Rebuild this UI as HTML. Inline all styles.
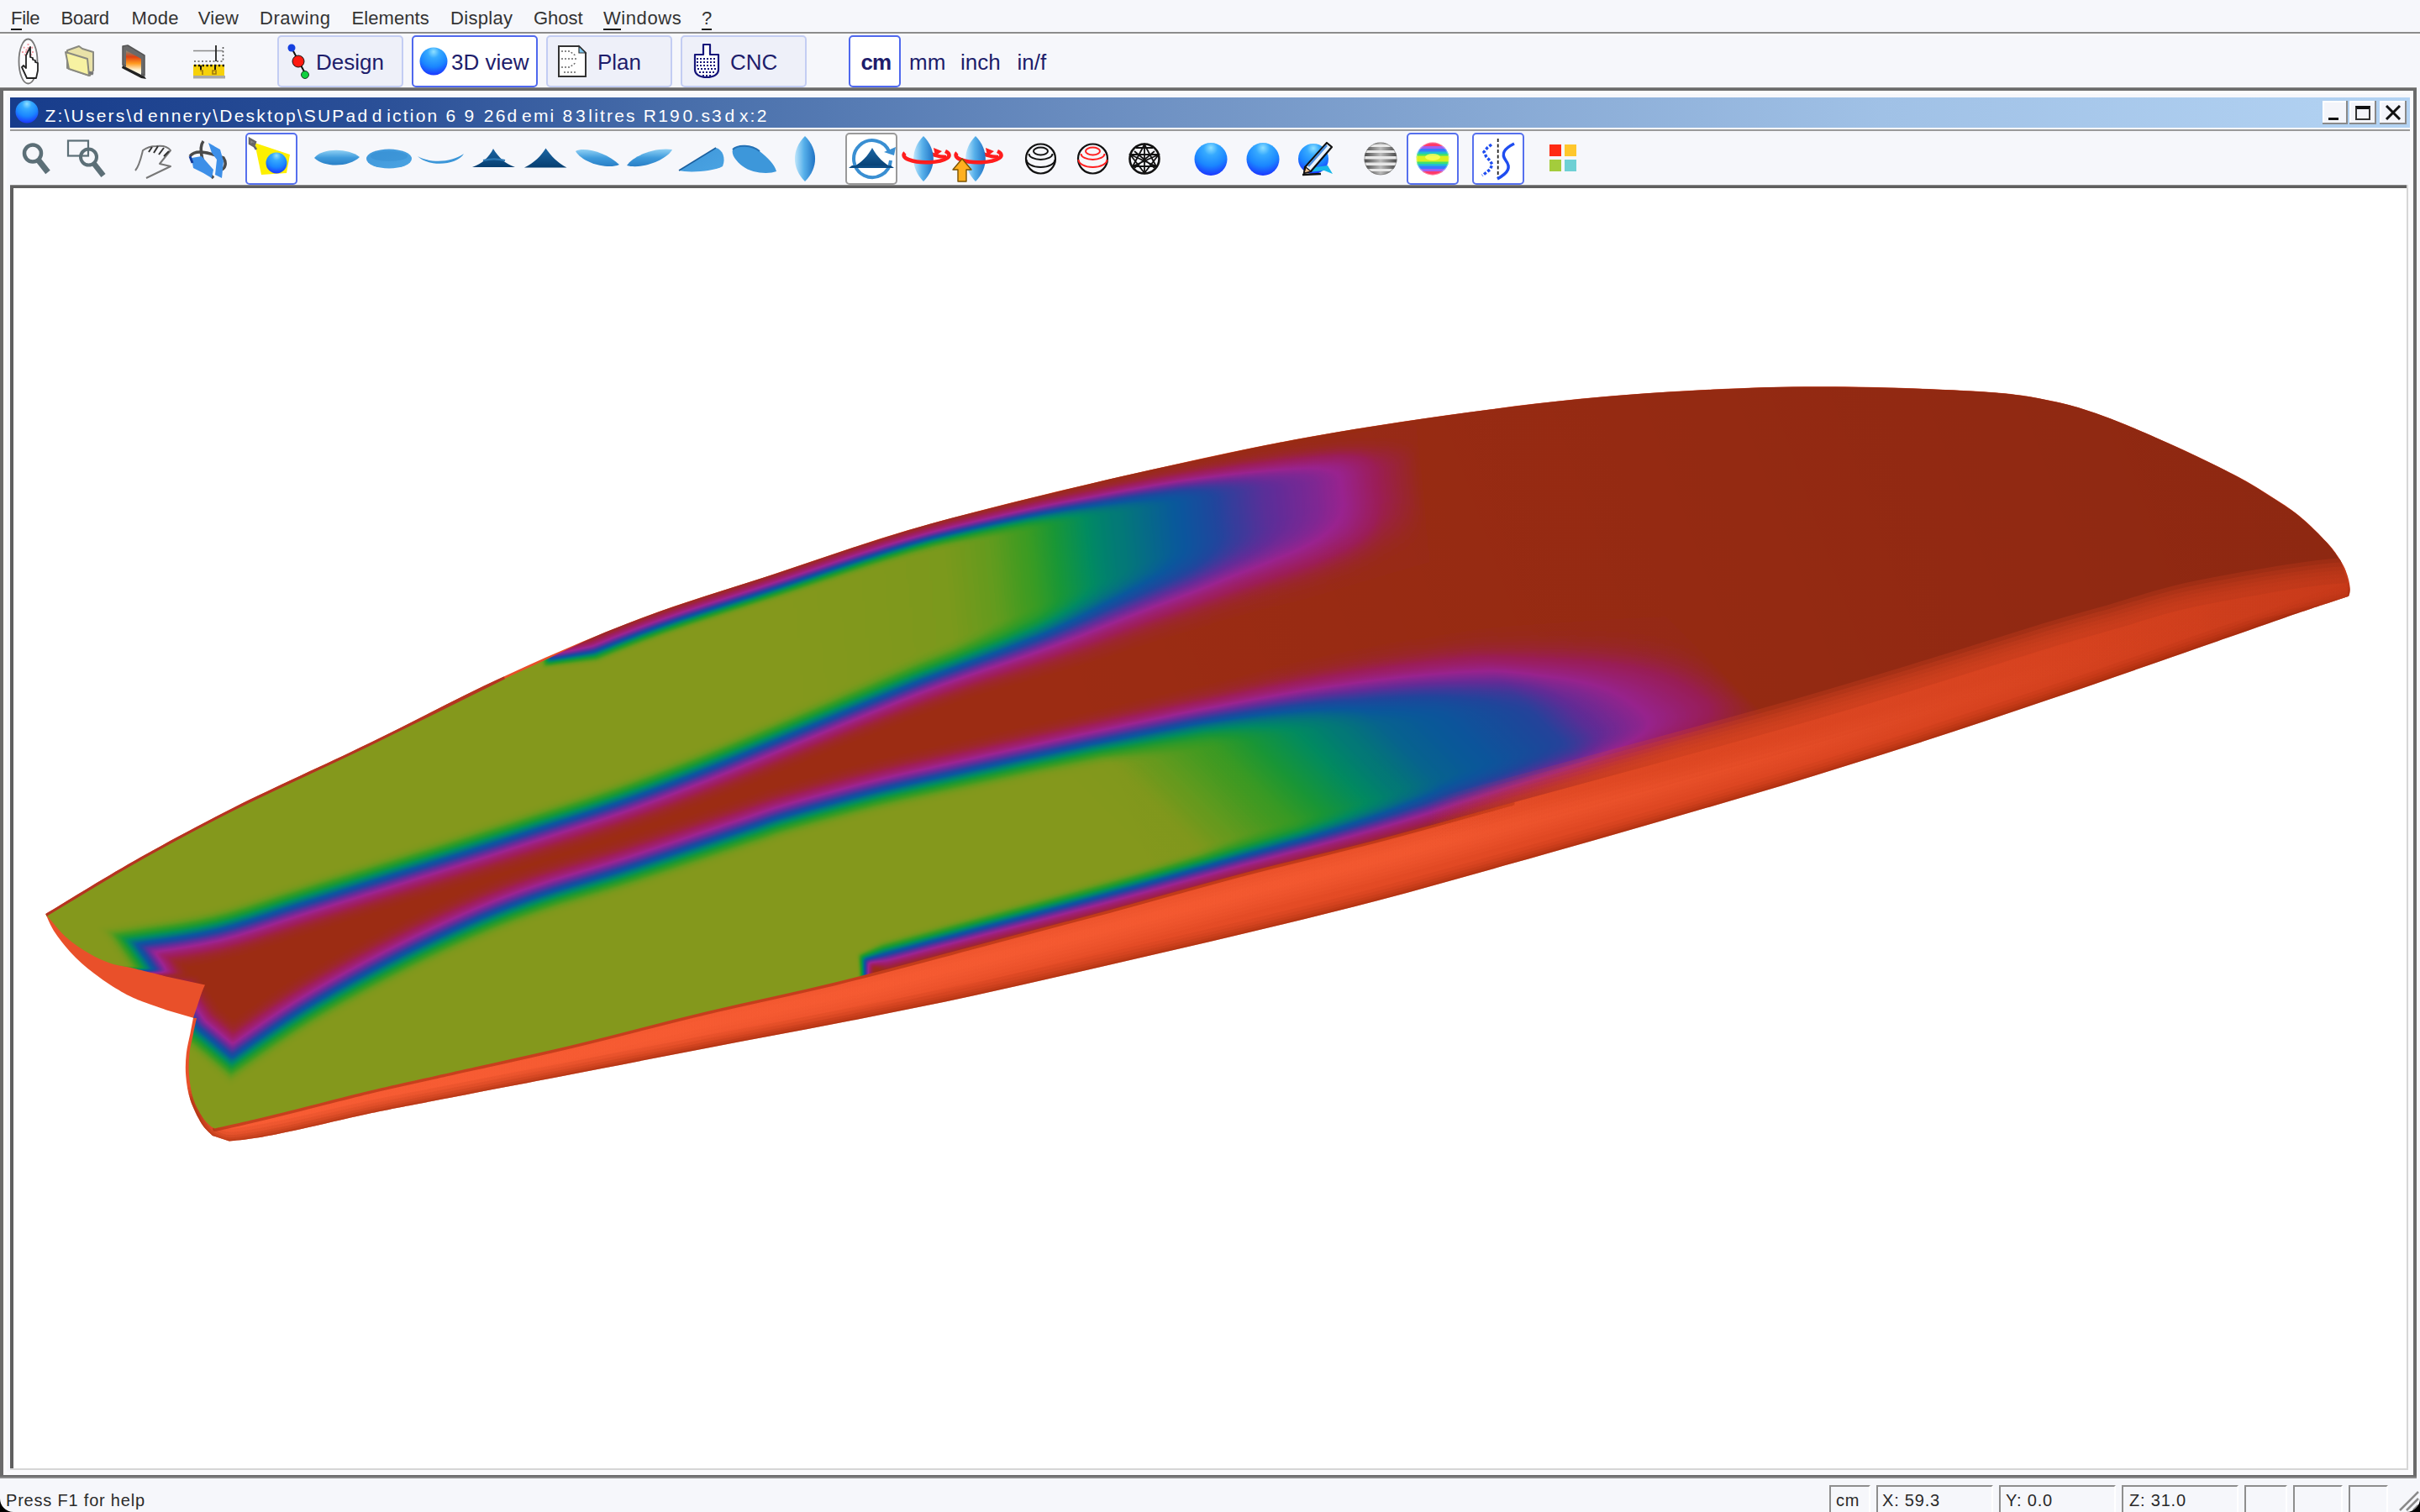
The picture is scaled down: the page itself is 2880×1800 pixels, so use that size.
<!DOCTYPE html><html><head><meta charset="utf-8"><title>Shape3d X</title><style>
html,body{margin:0;padding:0;}
body{width:2880px;height:1800px;overflow:hidden;background:#f6f7fb;position:relative;
 font-family:"Liberation Sans",sans-serif;color:#222;}
.abs{position:absolute;}
.t{position:absolute;white-space:pre;line-height:1;}
.menu{font-size:22px;color:#333;top:11px;}
.menu u{text-decoration:none;border-bottom:2px solid #1a1a1a;padding-bottom:0px;}
.btn{position:absolute;top:42px;height:58px;border:2px solid #c3cdf3;border-radius:5px;background:#eef0f9;}
.btn.sel{background:#fff;border-color:#4f68ee;}
.bl{font-size:26px;color:#1d1d6b;top:61px;}
.tb2sel{position:absolute;top:158px;height:58px;width:58px;border:2px solid #5670ee;border-radius:5px;background:#fff;}
.st{font-size:20px;color:#2a2a2a;top:1776px;letter-spacing:0.8px;}
.panel{position:absolute;top:1768px;height:32px;border-top:2px solid #8e8e8e;border-left:2px solid #8e8e8e;border-right:2px solid #fff;}
</style></head><body>
<div class="abs" style="left:0;top:38px;width:2880px;height:2px;background:#8c8c8c"></div>
<div class="abs" style="left:0;top:40px;width:2880px;height:2px;background:#fdfdfe"></div>
<div class="t menu" id="m0" style="left:13.0px;letter-spacing:-0.30px"><u>F</u>ile</div>
<div class="t menu" id="m1" style="left:72.6px;letter-spacing:-0.30px">Board</div>
<div class="t menu" id="m2" style="left:156.5px;letter-spacing:0.33px">Mode</div>
<div class="t menu" id="m3" style="left:235.7px;letter-spacing:0.33px">View</div>
<div class="t menu" id="m4" style="left:309.0px;letter-spacing:0.55px">Drawing</div>
<div class="t menu" id="m5" style="left:418.5px;letter-spacing:0.07px">Elements</div>
<div class="t menu" id="m6" style="left:536.0px;letter-spacing:0.30px">Display</div>
<div class="t menu" id="m7" style="left:635.0px;letter-spacing:0.00px">Ghost</div>
<div class="t menu" id="m8" style="left:718.0px;letter-spacing:0.57px"><u>W</u>indows</div>
<div class="t menu" id="m9" style="left:835.0px;letter-spacing:0.00px"><u>?</u></div>
<div class="btn" style="left:330px;width:146px"></div>
<div class="btn sel" style="left:490px;width:146px"></div>
<div class="btn" style="left:650px;width:146px"></div>
<div class="btn" style="left:810px;width:146px"></div>
<div class="btn sel" style="left:1010px;width:58px"></div>
<div class="t bl" id="b0" style="left:376.0px">Design</div>
<div class="t bl" id="b1" style="left:537.0px">3D view</div>
<div class="t bl" id="b2" style="left:711.0px">Plan</div>
<div class="t bl" id="b3" style="left:869.0px">CNC</div>
<div class="t bl" id="b4" style="left:1024.5px;font-weight:bold;letter-spacing:-1px">cm</div>
<div class="t bl" id="b5" style="left:1082.0px">mm</div>
<div class="t bl" id="b6" style="left:1143.0px">inch</div>
<div class="t bl" id="b7" style="left:1210.5px">in/f</div>
<div class="abs" style="left:0;top:104px;width:2876px;height:1656px;background:#6b6b6b"></div>
<div class="abs" style="left:0;top:104px;width:2876px;height:1px;background:#8a8a8a"></div>
<div class="abs" style="left:4px;top:108px;width:2868px;height:1648px;background:#fbfbfc"></div>
<div class="abs" style="left:8px;top:112px;width:2860px;height:1640px;background:#f6f7fb"></div>
<div class="abs" style="left:0;top:1758px;width:2876px;height:2px;background:#8a8a8a"></div>
<div class="abs" style="left:12px;top:116px;width:2856px;height:36px;background:linear-gradient(90deg,#173c8b 0%,#2a4f97 15%,#4c72ad 30%,#6a8dc0 45%,#84a6d2 60%,#a0c1e6 78%,#b3d3f3 100%)"></div>
<div class="abs" style="left:12px;top:154px;width:2856px;height:2px;background:#9a9a9a"></div>
<div class="t" id="title" style="left:53.5px;top:127px;font-size:21px;color:#fff;letter-spacing:2.2px">Z:&#92;Users&#92;<span style="margin-right:3.5px">d</span>ennery&#92;Desktop&#92;SUPa<span style="margin-right:3.5px">d</span><span style="margin-right:3.5px">d</span>iction 6 <span style="margin-right:1.5px">9</span> 26<span style="margin-right:3.5px">d</span>emi <span style="margin-right:1.5px">8</span><span style="margin-right:1.5px">3</span>litres R1<span style="margin-right:1.5px">9</span>0.s<span style="margin-right:1.5px">3</span><span style="margin-right:3.5px">d</span>x:2</div>
<div class="abs" style="left:2764px;top:120px;width:30px;height:28px;background:#f4f5fa;box-shadow:inset -2px -2px 0 #8a8a8a, inset 2px 2px 0 #fff"></div>
<div class="abs" style="left:2796px;top:120px;width:32px;height:28px;background:#f4f5fa;box-shadow:inset -2px -2px 0 #8a8a8a, inset 2px 2px 0 #fff"></div>
<div class="abs" style="left:2832px;top:120px;width:32px;height:28px;background:#f4f5fa;box-shadow:inset -2px -2px 0 #8a8a8a, inset 2px 2px 0 #fff"></div>
<div class="abs" style="left:2771px;top:140px;width:12px;height:3px;background:#111"></div>
<div class="abs" style="left:2803px;top:126px;width:14px;height:14px;border:2px solid #333;border-top:4px solid #111;box-sizing:border-box;width:18px;height:17px"></div>
<svg class="abs" style="left:2838px;top:125px" width="20" height="18" viewBox="0 0 20 18"><path d="M2 1L18 17M18 1L2 17" stroke="#111" stroke-width="3"/></svg>
<div class="tb2sel" style="left:292px"></div>
<div class="tb2sel" style="left:1674px"></div>
<div class="tb2sel" style="left:1752px"></div>
<div class="tb2sel" style="left:1006px;border-color:#9a9a9a;border-width:2px"></div>
<div class="abs" style="left:12px;top:220px;width:2856px;height:1532px;background:#fbfbfc"></div>
<div class="abs" style="left:12px;top:220px;width:2854px;height:1530px;background:#d6d6d6"></div>
<div class="abs" style="left:12px;top:220px;width:2852px;height:1528px;background:#5f5f5f"></div>
<div class="abs" style="left:12px;top:220px;width:2852px;height:1px;background:#8a8a8a"></div>
<div class="abs" style="left:16px;top:224px;width:2848px;height:1524px;background:#fff"></div>
<div class="t st" id="s0" style="left:7px">Press F1 for help</div>
<div class="panel" style="left:2177px;width:45px"></div>
<div class="panel" style="left:2233px;width:135px"></div>
<div class="panel" style="left:2379px;width:135px"></div>
<div class="panel" style="left:2525px;width:135px"></div>
<div class="panel" style="left:2671px;width:47px"></div>
<div class="panel" style="left:2729px;width:55px"></div>
<div class="panel" style="left:2795px;width:43px"></div>
<div class="t st" id="s1" style="left:2185px">cm</div>
<div class="t st" id="s2" style="left:2240px">X: 59.3</div>
<div class="t st" id="s3" style="left:2387px">Y: 0.0</div>
<div class="t st" id="s4" style="left:2534px">Z: 31.0</div>
<svg class="abs" style="left:2852px;top:1772px" width="28" height="28" viewBox="0 0 28 28"><path d="M4 26L26 4M12 26L26 12M20 26L26 20" stroke="#8a8a8a" stroke-width="2.5"/></svg>
<svg class="abs" style="left:0;top:1784px" width="16" height="16"><path d="M0 0V16H16A16 16 0 0 1 0 0Z" fill="#000"/></svg>
<svg class="abs" style="left:2864px;top:1784px" width="16" height="16"><path d="M16 0V16H0A16 16 0 0 0 16 0Z" fill="#000"/></svg>
<svg xmlns="http://www.w3.org/2000/svg" width="2880" height="1800" viewBox="0 0 2880 1800" style="position:absolute;left:0;top:0" color-interpolation-filters="sRGB">
<defs>
<linearGradient id="gu" gradientUnits="userSpaceOnUse" x1="900.0" y1="640.0" x2="1692.1" y2="560.8"><stop offset="0.0000" stop-color="rgb(255,255,255)"/><stop offset="0.2750" stop-color="rgb(247,247,247)"/><stop offset="0.3500" stop-color="rgb(237,237,237)"/><stop offset="0.4075" stop-color="rgb(224,224,224)"/><stop offset="0.5062" stop-color="rgb(182,182,182)"/><stop offset="0.6388" stop-color="rgb(140,140,140)"/><stop offset="0.7050" stop-color="rgb(110,110,110)"/><stop offset="0.7712" stop-color="rgb(84,84,84)"/><stop offset="0.8375" stop-color="rgb(66,66,66)"/><stop offset="0.8788" stop-color="rgb(51,51,51)"/><stop offset="0.9313" stop-color="rgb(20,20,20)"/><stop offset="1.0000" stop-color="rgb(0,0,0)"/></linearGradient>
<linearGradient id="gl" gradientUnits="userSpaceOnUse" x1="1200.0" y1="880.0" x2="1665.0" y2="415.0"><stop offset="0.0000" stop-color="rgb(255,255,255)"/><stop offset="0.0968" stop-color="rgb(251,251,251)"/><stop offset="0.1387" stop-color="rgb(242,242,242)"/><stop offset="0.2581" stop-color="rgb(224,224,224)"/><stop offset="0.3226" stop-color="rgb(204,204,204)"/><stop offset="0.3978" stop-color="rgb(182,182,182)"/><stop offset="0.4946" stop-color="rgb(153,153,153)"/><stop offset="0.5914" stop-color="rgb(140,140,140)"/><stop offset="0.7054" stop-color="rgb(115,115,115)"/><stop offset="0.7645" stop-color="rgb(82,82,82)"/><stop offset="0.8462" stop-color="rgb(51,51,51)"/><stop offset="0.9409" stop-color="rgb(20,20,20)"/><stop offset="1.0000" stop-color="rgb(0,0,0)"/></linearGradient>
<filter id="cm" filterUnits="userSpaceOnUse" x="0" y="200" width="2880" height="1500"><feGaussianBlur stdDeviation="2"/><feComponentTransfer><feFuncR type="table" tableValues="0.612 0.616 0.620 0.624 0.627 0.625 0.624 0.622 0.620 0.618 0.616 0.578 0.541 0.504 0.467 0.429 0.392 0.353 0.314 0.275 0.235 0.196 0.157 0.127 0.108 0.088 0.069 0.049 0.037 0.032 0.027 0.023 0.018 0.013 0.008 0.004 0.006 0.029 0.052 0.075 0.098 0.137 0.176 0.216 0.268 0.334 0.400 0.454 0.500 0.518 0.522"/><feFuncG type="table" tableValues="0.173 0.159 0.145 0.131 0.118 0.122 0.125 0.129 0.133 0.137 0.141 0.147 0.153 0.159 0.165 0.171 0.176 0.192 0.207 0.222 0.237 0.252 0.267 0.282 0.296 0.310 0.324 0.338 0.357 0.382 0.407 0.432 0.456 0.481 0.506 0.530 0.552 0.563 0.574 0.585 0.596 0.601 0.605 0.610 0.611 0.609 0.608 0.603 0.599 0.597 0.600"/><feFuncB type="table" tableValues="0.078 0.147 0.216 0.284 0.353 0.390 0.426 0.463 0.499 0.536 0.573 0.578 0.584 0.590 0.596 0.602 0.608 0.611 0.614 0.617 0.620 0.623 0.626 0.627 0.627 0.627 0.627 0.627 0.613 0.585 0.556 0.528 0.499 0.471 0.442 0.414 0.382 0.340 0.299 0.257 0.216 0.192 0.169 0.145 0.130 0.124 0.118 0.113 0.110 0.111 0.114"/></feComponentTransfer></filter>
<filter id="b2" filterUnits="userSpaceOnUse" x="-200" y="100" width="3300" height="1700"><feGaussianBlur stdDeviation="2"/></filter>
<filter id="b3" filterUnits="userSpaceOnUse" x="-200" y="100" width="3300" height="1700"><feGaussianBlur stdDeviation="3"/></filter>
<filter id="b4" filterUnits="userSpaceOnUse" x="-200" y="100" width="3300" height="1700"><feGaussianBlur stdDeviation="4"/></filter>
<filter id="b5" filterUnits="userSpaceOnUse" x="-200" y="100" width="3300" height="1700"><feGaussianBlur stdDeviation="5"/></filter>
<filter id="b6" filterUnits="userSpaceOnUse" x="-200" y="100" width="3300" height="1700"><feGaussianBlur stdDeviation="6"/></filter>
<filter id="b8" filterUnits="userSpaceOnUse" x="-200" y="100" width="3300" height="1700"><feGaussianBlur stdDeviation="8"/></filter>
<filter id="b10" filterUnits="userSpaceOnUse" x="-200" y="100" width="3300" height="1700"><feGaussianBlur stdDeviation="10"/></filter>
<clipPath id="cpB"><path d="M55.3 1090.6 C59.8 1087.9 71.3 1080.9 82.2 1074.2 C93.1 1067.6 107.7 1058.6 120.8 1050.8 C134.0 1043.0 148.1 1034.7 161.0 1027.3 C174.0 1019.9 185.7 1013.4 198.5 1006.4 C211.3 999.4 223.8 992.6 237.5 985.4 C251.3 978.2 265.4 970.9 281.0 963.1 C296.7 955.3 313.9 947.1 331.4 938.8 C348.9 930.4 368.0 921.7 386.2 913.1 C404.5 904.5 423.0 895.9 441.0 887.1 C459.1 878.3 476.6 869.4 494.4 860.5 C512.2 851.6 529.9 842.3 547.7 833.5 C565.5 824.8 583.3 816.2 601.0 807.8 C618.8 799.4 636.5 791.4 654.2 783.2 C671.8 774.9 689.1 766.1 706.7 758.4 C724.4 750.8 742.3 743.9 760.1 737.2 C777.9 730.5 795.6 724.3 813.4 718.3 C831.2 712.3 849.0 706.8 866.7 701.1 C884.5 695.4 902.3 689.8 920.1 684.0 C937.9 678.2 955.6 672.0 973.4 666.0 C991.2 660.1 1009.0 653.9 1026.7 648.2 C1044.5 642.4 1062.3 636.8 1080.1 631.5 C1097.9 626.2 1115.6 621.4 1133.4 616.6 C1151.2 611.9 1169.0 607.4 1186.7 603.0 C1204.5 598.5 1222.3 594.1 1240.1 589.8 C1257.9 585.5 1275.6 581.1 1293.4 576.9 C1311.2 572.7 1329.0 568.6 1346.7 564.6 C1364.5 560.5 1382.3 556.6 1400.1 552.7 C1417.9 548.8 1435.6 544.9 1453.4 541.2 C1471.2 537.4 1489.0 533.6 1506.7 530.1 C1524.5 526.6 1542.3 523.1 1560.1 519.9 C1577.9 516.7 1595.6 513.7 1613.4 510.8 C1631.2 507.9 1649.0 505.2 1666.7 502.5 C1684.5 499.8 1702.3 497.3 1720.1 494.8 C1737.9 492.3 1755.7 489.8 1773.5 487.5 C1791.3 485.2 1809.1 482.9 1826.8 480.8 C1844.6 478.7 1862.3 476.7 1880.1 475.0 C1897.9 473.3 1915.8 471.7 1933.6 470.3 C1951.4 468.9 1969.4 467.7 1986.9 466.6 C2004.5 465.5 2022.1 464.5 2038.8 463.7 C2055.5 462.9 2071.3 462.2 2087.2 461.7 C2103.1 461.2 2118.0 460.8 2134.2 460.6 C2150.3 460.4 2166.0 460.3 2184.1 460.5 C2202.2 460.7 2222.8 461.1 2242.9 461.6 C2262.9 462.1 2285.7 462.9 2304.6 463.7 C2323.5 464.4 2341.9 465.3 2356.1 466.2 C2370.3 467.1 2380.4 467.9 2390.0 468.9 C2399.6 469.9 2406.0 470.9 2413.6 472.1 C2421.2 473.3 2428.2 474.7 2435.6 476.2 C2442.9 477.7 2450.6 479.3 2457.6 481.1 C2464.7 482.8 2471.0 484.6 2478.0 486.8 C2485.1 489.0 2492.2 491.3 2500.1 494.2 C2508.0 497.1 2516.7 500.4 2525.4 503.9 C2534.2 507.4 2543.5 511.4 2552.5 515.3 C2561.5 519.2 2570.4 523.1 2579.5 527.2 C2588.6 531.3 2597.9 535.6 2607.1 539.9 C2616.3 544.3 2626.2 549.0 2634.8 553.3 C2643.4 557.6 2651.8 561.8 2658.9 565.6 C2666.1 569.4 2672.1 572.7 2677.8 576.1 C2683.5 579.4 2688.3 582.4 2693.1 585.4 C2697.9 588.4 2702.4 591.4 2706.7 594.1 C2710.9 596.8 2714.8 599.3 2718.4 601.7 C2722.1 604.1 2725.1 606.1 2728.4 608.6 C2731.8 611.1 2734.9 613.5 2738.4 616.5 C2742.0 619.5 2745.9 623.1 2749.6 626.6 C2753.4 630.1 2757.4 634.1 2760.9 637.6 C2764.3 641.1 2767.6 644.5 2770.3 647.6 C2773.1 650.7 2775.3 653.6 2777.4 656.3 C2779.5 659.0 2781.2 661.8 2782.7 664.0 C2784.2 666.1 2784.6 665.0 2786.3 669.2 C2787.9 673.4 2791.5 685.7 2792.5 689.0 L2793.0 694.0 C2787.5 694.5 2775.5 695.0 2760.0 697.0 C2744.5 699.0 2726.7 701.3 2700.0 706.0 C2673.3 710.7 2630.0 718.0 2600.0 725.0 C2570.0 732.0 2546.7 740.3 2520.0 748.0 C2493.3 755.7 2480.0 758.9 2440.0 771.0 C2400.0 783.1 2333.3 804.5 2280.0 820.7 C2226.7 836.9 2173.3 852.8 2120.0 868.0 C2066.7 883.2 2013.3 897.4 1960.0 912.0 C1906.7 926.6 1853.3 940.9 1800.0 955.5 C1746.7 970.1 1693.3 985.4 1640.0 999.4 C1586.7 1013.4 1533.3 1025.5 1480.0 1039.5 C1426.7 1053.5 1373.3 1069.1 1320.0 1083.5 C1266.7 1097.9 1213.3 1111.9 1160.0 1126.0 C1106.7 1140.1 1053.3 1154.9 1000.0 1168.0 C946.7 1181.1 893.3 1191.8 840.0 1204.5 C786.7 1217.2 733.3 1231.8 680.0 1244.5 C626.7 1257.2 560.3 1271.4 520.0 1280.5 C479.7 1289.6 464.9 1292.6 438.0 1299.0 C411.1 1305.4 380.7 1313.5 358.7 1319.0 C336.7 1324.5 323.0 1327.9 305.8 1332.0 C288.6 1336.1 264.0 1341.5 255.6 1343.4 L251.0 1341.0 C249.3 1339.2 244.5 1335.5 241.0 1330.0 C237.5 1324.5 232.7 1316.3 230.0 1308.0 C227.3 1299.7 225.8 1289.0 225.0 1280.0 C224.2 1271.0 224.7 1262.2 225.5 1254.0 C226.3 1245.8 228.6 1238.0 230.0 1231.0 C231.4 1224.0 233.3 1215.2 234.0 1212.0 L230.0 1211.8 C230.8 1209.3 233.3 1202.0 235.0 1197.0 C236.7 1192.0 238.5 1186.1 240.0 1182.0 C241.5 1177.9 243.3 1174.1 244.0 1172.5 L200.0 1163.0 C193.3 1161.3 171.3 1155.7 160.0 1153.0 C148.7 1150.3 141.0 1150.0 132.0 1147.0 C123.0 1144.0 114.8 1140.2 106.0 1135.0 C97.2 1129.8 87.6 1123.8 79.0 1116.0 C70.4 1108.2 58.4 1092.7 54.3 1088.0 Z"/></clipPath>
<clipPath id="cpS"><path d="M54.3 1088.0 C71.9 1077.5 122.4 1046.0 160.0 1024.7 C197.6 1003.5 233.3 983.9 280.0 960.5 C326.7 937.1 386.7 910.4 440.0 884.5 C493.3 858.6 546.7 829.8 600.0 805.2 C653.3 780.6 706.7 757.2 760.0 737.0 C813.3 716.8 866.7 701.4 920.0 683.8 C973.3 666.2 1026.7 647.0 1080.0 631.3 C1133.3 615.6 1186.7 602.7 1240.0 589.6 C1293.3 576.5 1346.7 564.1 1400.0 552.5 C1453.3 540.9 1506.7 529.4 1560.0 519.7 C1613.3 510.1 1666.7 502.1 1720.0 494.6 C1773.3 487.1 1826.9 480.0 1880.0 474.8 C1933.1 469.6 1988.0 465.9 2038.7 463.5 C2089.4 461.1 2131.1 459.9 2184.0 460.3 C2236.9 460.7 2314.1 463.4 2356.0 466.0 C2397.9 468.6 2411.5 471.3 2435.5 476.0 C2459.5 480.7 2476.0 485.5 2500.0 494.0 C2524.0 502.5 2553.0 515.2 2579.4 527.0 C2605.8 538.8 2637.5 554.0 2658.7 565.0 C2679.8 576.0 2693.1 584.8 2706.3 593.2 C2719.5 601.6 2727.4 606.5 2738.0 615.4 C2748.6 624.2 2761.9 637.6 2769.8 646.3 C2777.8 655.0 2781.7 661.3 2785.7 667.8 C2789.7 674.3 2791.8 679.7 2793.7 685.2 C2795.5 690.8 2796.6 697.0 2796.8 701.1 C2797.1 705.2 2795.5 708.3 2795.2 709.8 L2769.8 718.2 C2764.5 720.0 2766.3 719.0 2738.0 728.8 C2709.7 738.6 2649.7 759.8 2600.0 777.0 C2550.3 794.2 2493.3 814.2 2440.0 832.3 C2386.7 850.4 2333.3 868.3 2280.0 885.5 C2226.7 902.7 2173.3 919.3 2120.0 935.4 C2066.7 951.5 2013.3 966.8 1960.0 982.2 C1906.7 997.6 1853.3 1012.8 1800.0 1027.8 C1746.7 1042.8 1693.3 1058.0 1640.0 1072.0 C1586.7 1086.0 1533.3 1098.8 1480.0 1111.6 C1426.7 1124.4 1373.3 1136.6 1320.0 1148.8 C1266.7 1161.0 1213.3 1173.5 1160.0 1185.0 C1106.7 1196.5 1053.3 1207.1 1000.0 1217.6 C946.7 1228.1 893.3 1237.8 840.0 1248.0 C786.7 1258.2 733.3 1268.7 680.0 1279.0 C626.7 1289.3 560.3 1302.0 520.0 1309.8 C479.7 1317.6 464.9 1320.3 438.0 1326.0 C411.1 1331.7 380.7 1339.2 358.7 1344.0 C336.7 1348.8 320.1 1352.2 305.8 1354.6 C291.5 1357.0 278.3 1357.9 272.8 1358.6 L253.0 1352.0 C250.8 1349.6 244.1 1344.5 239.7 1337.4 C235.3 1330.3 229.6 1319.1 226.5 1309.6 C223.4 1300.1 222.0 1289.8 221.2 1280.5 C220.4 1271.2 220.9 1262.4 221.8 1254.0 C222.7 1245.6 225.1 1237.0 226.5 1230.0 C227.9 1223.0 229.4 1214.8 230.0 1211.8 L200.0 1203.0 C195.0 1201.2 178.7 1195.9 170.0 1192.5 C161.3 1189.1 156.5 1187.2 148.0 1182.5 C139.5 1177.8 128.7 1171.1 119.0 1164.0 C109.3 1156.9 98.8 1148.8 90.0 1140.0 C81.2 1131.2 72.0 1119.7 66.0 1111.0 C60.0 1102.3 56.2 1091.8 54.3 1088.0 Z"/></clipPath>
<linearGradient id="shade" gradientUnits="userSpaceOnUse" x1="1300" y1="1000" x2="2700" y2="500"><stop offset="0" stop-color="#000" stop-opacity="0"/><stop offset="1" stop-color="#000" stop-opacity="0.09"/></linearGradient>
<linearGradient id="railg" gradientUnits="userSpaceOnUse" x1="300" y1="0" x2="2800" y2="0"><stop offset="0" stop-color="#e9502a"/><stop offset="0.5" stop-color="#e44b25"/><stop offset="0.75" stop-color="#dc4521"/><stop offset="0.9" stop-color="#d03e1c"/><stop offset="1" stop-color="#c83a1a"/></linearGradient>
<linearGradient id="hl" gradientUnits="userSpaceOnUse" x1="300" y1="0" x2="2800" y2="0"><stop offset="0" stop-color="#ff6238" stop-opacity="0.85"/><stop offset="0.55" stop-color="#ff6238" stop-opacity="0.6"/><stop offset="0.8" stop-color="#ff6238" stop-opacity="0.15"/><stop offset="1" stop-color="#ff6238" stop-opacity="0"/></linearGradient>
<linearGradient id="bleedg" gradientUnits="userSpaceOnUse" x1="1700" y1="0" x2="2800" y2="0"><stop offset="0" stop-color="#e04823" stop-opacity="0"/><stop offset="0.27" stop-color="#dc4521" stop-opacity="1"/><stop offset="0.7" stop-color="#d5411e" stop-opacity="1"/><stop offset="1" stop-color="#c83a1a" stop-opacity="1"/></linearGradient>
<linearGradient id="softg" gradientUnits="userSpaceOnUse" x1="1700" y1="0" x2="2800" y2="0"><stop offset="0" stop-color="#8f2810" stop-opacity="0"/><stop offset="0.3" stop-color="#8f2810" stop-opacity="1"/><stop offset="1" stop-color="#8f2810" stop-opacity="1"/></linearGradient>
</defs>
<path d="M54.3 1088.0 C71.9 1077.5 122.4 1046.0 160.0 1024.7 C197.6 1003.5 233.3 983.9 280.0 960.5 C326.7 937.1 386.7 910.4 440.0 884.5 C493.3 858.6 546.7 829.8 600.0 805.2 C653.3 780.6 706.7 757.2 760.0 737.0 C813.3 716.8 866.7 701.4 920.0 683.8 C973.3 666.2 1026.7 647.0 1080.0 631.3 C1133.3 615.6 1186.7 602.7 1240.0 589.6 C1293.3 576.5 1346.7 564.1 1400.0 552.5 C1453.3 540.9 1506.7 529.4 1560.0 519.7 C1613.3 510.1 1666.7 502.1 1720.0 494.6 C1773.3 487.1 1826.9 480.0 1880.0 474.8 C1933.1 469.6 1988.0 465.9 2038.7 463.5 C2089.4 461.1 2131.1 459.9 2184.0 460.3 C2236.9 460.7 2314.1 463.4 2356.0 466.0 C2397.9 468.6 2411.5 471.3 2435.5 476.0 C2459.5 480.7 2476.0 485.5 2500.0 494.0 C2524.0 502.5 2553.0 515.2 2579.4 527.0 C2605.8 538.8 2637.5 554.0 2658.7 565.0 C2679.8 576.0 2693.1 584.8 2706.3 593.2 C2719.5 601.6 2727.4 606.5 2738.0 615.4 C2748.6 624.2 2761.9 637.6 2769.8 646.3 C2777.8 655.0 2781.7 661.3 2785.7 667.8 C2789.7 674.3 2791.8 679.7 2793.7 685.2 C2795.5 690.8 2796.6 697.0 2796.8 701.1 C2797.1 705.2 2795.5 708.3 2795.2 709.8 L2769.8 718.2 C2764.5 720.0 2766.3 719.0 2738.0 728.8 C2709.7 738.6 2649.7 759.8 2600.0 777.0 C2550.3 794.2 2493.3 814.2 2440.0 832.3 C2386.7 850.4 2333.3 868.3 2280.0 885.5 C2226.7 902.7 2173.3 919.3 2120.0 935.4 C2066.7 951.5 2013.3 966.8 1960.0 982.2 C1906.7 997.6 1853.3 1012.8 1800.0 1027.8 C1746.7 1042.8 1693.3 1058.0 1640.0 1072.0 C1586.7 1086.0 1533.3 1098.8 1480.0 1111.6 C1426.7 1124.4 1373.3 1136.6 1320.0 1148.8 C1266.7 1161.0 1213.3 1173.5 1160.0 1185.0 C1106.7 1196.5 1053.3 1207.1 1000.0 1217.6 C946.7 1228.1 893.3 1237.8 840.0 1248.0 C786.7 1258.2 733.3 1268.7 680.0 1279.0 C626.7 1289.3 560.3 1302.0 520.0 1309.8 C479.7 1317.6 464.9 1320.3 438.0 1326.0 C411.1 1331.7 380.7 1339.2 358.7 1344.0 C336.7 1348.8 320.1 1352.2 305.8 1354.6 C291.5 1357.0 278.3 1357.9 272.8 1358.6 L253.0 1352.0 C250.8 1349.6 244.1 1344.5 239.7 1337.4 C235.3 1330.3 229.6 1319.1 226.5 1309.6 C223.4 1300.1 222.0 1289.8 221.2 1280.5 C220.4 1271.2 220.9 1262.4 221.8 1254.0 C222.7 1245.6 225.1 1237.0 226.5 1230.0 C227.9 1223.0 229.4 1214.8 230.0 1211.8 L200.0 1203.0 C195.0 1201.2 178.7 1195.9 170.0 1192.5 C161.3 1189.1 156.5 1187.2 148.0 1182.5 C139.5 1177.8 128.7 1171.1 119.0 1164.0 C109.3 1156.9 98.8 1148.8 90.0 1140.0 C81.2 1131.2 72.0 1119.7 66.0 1111.0 C60.0 1102.3 56.2 1091.8 54.3 1088.0 Z" fill="url(#railg)"/>
<g clip-path="url(#cpS)" fill="none" stroke-linecap="round">
<path d="M255.6 1348.3 C264.0 1346.8 288.6 1342.8 305.8 1339.2 C323.0 1335.7 336.7 1332.3 358.7 1327.0 C380.7 1321.7 411.1 1313.8 438.0 1307.6 C464.9 1301.5 479.7 1298.6 520.0 1289.9 C560.3 1281.2 626.7 1267.4 680.0 1255.5 C733.3 1243.6 786.7 1230.4 840.0 1218.4 C893.3 1206.5 946.7 1196.1 1000.0 1183.9 C1053.3 1171.6 1106.7 1158.1 1160.0 1144.9 C1213.3 1131.6 1266.7 1118.1 1320.0 1104.4 C1373.3 1090.7 1426.7 1076.2 1480.0 1062.6 C1533.3 1048.9 1586.7 1036.6 1640.0 1022.6 C1693.3 1008.6 1746.7 993.3 1800.0 978.6 C1853.3 963.9 1906.7 949.3 1960.0 934.5 C2013.3 919.6 2066.7 905.1 2120.0 889.6 C2173.3 874.1 2226.7 857.9 2280.0 841.4 C2333.3 824.9 2400.0 803.2 2440.0 790.6 C2480.0 778.1 2493.3 774.3 2520.0 766.1 C2546.7 758.0 2570.0 749.7 2600.0 741.6 C2630.0 733.5 2683.3 721.6 2700.0 717.5" stroke="url(#hl)" stroke-width="50" stroke-opacity="0.2"/>
<path d="M255.6 1348.3 C264.0 1346.8 288.6 1342.8 305.8 1339.2 C323.0 1335.7 336.7 1332.3 358.7 1327.0 C380.7 1321.7 411.1 1313.8 438.0 1307.6 C464.9 1301.5 479.7 1298.6 520.0 1289.9 C560.3 1281.2 626.7 1267.4 680.0 1255.5 C733.3 1243.6 786.7 1230.4 840.0 1218.4 C893.3 1206.5 946.7 1196.1 1000.0 1183.9 C1053.3 1171.6 1106.7 1158.1 1160.0 1144.9 C1213.3 1131.6 1266.7 1118.1 1320.0 1104.4 C1373.3 1090.7 1426.7 1076.2 1480.0 1062.6 C1533.3 1048.9 1586.7 1036.6 1640.0 1022.6 C1693.3 1008.6 1746.7 993.3 1800.0 978.6 C1853.3 963.9 1906.7 949.3 1960.0 934.5 C2013.3 919.6 2066.7 905.1 2120.0 889.6 C2173.3 874.1 2226.7 857.9 2280.0 841.4 C2333.3 824.9 2400.0 803.2 2440.0 790.6 C2480.0 778.1 2493.3 774.3 2520.0 766.1 C2546.7 758.0 2570.0 749.7 2600.0 741.6 C2630.0 733.5 2683.3 721.6 2700.0 717.5" stroke="url(#hl)" stroke-width="42" stroke-opacity="0.2"/>
<path d="M255.6 1348.3 C264.0 1346.8 288.6 1342.8 305.8 1339.2 C323.0 1335.7 336.7 1332.3 358.7 1327.0 C380.7 1321.7 411.1 1313.8 438.0 1307.6 C464.9 1301.5 479.7 1298.6 520.0 1289.9 C560.3 1281.2 626.7 1267.4 680.0 1255.5 C733.3 1243.6 786.7 1230.4 840.0 1218.4 C893.3 1206.5 946.7 1196.1 1000.0 1183.9 C1053.3 1171.6 1106.7 1158.1 1160.0 1144.9 C1213.3 1131.6 1266.7 1118.1 1320.0 1104.4 C1373.3 1090.7 1426.7 1076.2 1480.0 1062.6 C1533.3 1048.9 1586.7 1036.6 1640.0 1022.6 C1693.3 1008.6 1746.7 993.3 1800.0 978.6 C1853.3 963.9 1906.7 949.3 1960.0 934.5 C2013.3 919.6 2066.7 905.1 2120.0 889.6 C2173.3 874.1 2226.7 857.9 2280.0 841.4 C2333.3 824.9 2400.0 803.2 2440.0 790.6 C2480.0 778.1 2493.3 774.3 2520.0 766.1 C2546.7 758.0 2570.0 749.7 2600.0 741.6 C2630.0 733.5 2683.3 721.6 2700.0 717.5" stroke="url(#hl)" stroke-width="34" stroke-opacity="0.2"/>
<path d="M255.6 1348.3 C264.0 1346.8 288.6 1342.8 305.8 1339.2 C323.0 1335.7 336.7 1332.3 358.7 1327.0 C380.7 1321.7 411.1 1313.8 438.0 1307.6 C464.9 1301.5 479.7 1298.6 520.0 1289.9 C560.3 1281.2 626.7 1267.4 680.0 1255.5 C733.3 1243.6 786.7 1230.4 840.0 1218.4 C893.3 1206.5 946.7 1196.1 1000.0 1183.9 C1053.3 1171.6 1106.7 1158.1 1160.0 1144.9 C1213.3 1131.6 1266.7 1118.1 1320.0 1104.4 C1373.3 1090.7 1426.7 1076.2 1480.0 1062.6 C1533.3 1048.9 1586.7 1036.6 1640.0 1022.6 C1693.3 1008.6 1746.7 993.3 1800.0 978.6 C1853.3 963.9 1906.7 949.3 1960.0 934.5 C2013.3 919.6 2066.7 905.1 2120.0 889.6 C2173.3 874.1 2226.7 857.9 2280.0 841.4 C2333.3 824.9 2400.0 803.2 2440.0 790.6 C2480.0 778.1 2493.3 774.3 2520.0 766.1 C2546.7 758.0 2570.0 749.7 2600.0 741.6 C2630.0 733.5 2683.3 721.6 2700.0 717.5" stroke="url(#hl)" stroke-width="26" stroke-opacity="0.2"/>
<path d="M255.6 1348.3 C264.0 1346.8 288.6 1342.8 305.8 1339.2 C323.0 1335.7 336.7 1332.3 358.7 1327.0 C380.7 1321.7 411.1 1313.8 438.0 1307.6 C464.9 1301.5 479.7 1298.6 520.0 1289.9 C560.3 1281.2 626.7 1267.4 680.0 1255.5 C733.3 1243.6 786.7 1230.4 840.0 1218.4 C893.3 1206.5 946.7 1196.1 1000.0 1183.9 C1053.3 1171.6 1106.7 1158.1 1160.0 1144.9 C1213.3 1131.6 1266.7 1118.1 1320.0 1104.4 C1373.3 1090.7 1426.7 1076.2 1480.0 1062.6 C1533.3 1048.9 1586.7 1036.6 1640.0 1022.6 C1693.3 1008.6 1746.7 993.3 1800.0 978.6 C1853.3 963.9 1906.7 949.3 1960.0 934.5 C2013.3 919.6 2066.7 905.1 2120.0 889.6 C2173.3 874.1 2226.7 857.9 2280.0 841.4 C2333.3 824.9 2400.0 803.2 2440.0 790.6 C2480.0 778.1 2493.3 774.3 2520.0 766.1 C2546.7 758.0 2570.0 749.7 2600.0 741.6 C2630.0 733.5 2683.3 721.6 2700.0 717.5" stroke="url(#hl)" stroke-width="18" stroke-opacity="0.2"/>
<path d="M255.6 1348.3 C264.0 1346.8 288.6 1342.8 305.8 1339.2 C323.0 1335.7 336.7 1332.3 358.7 1327.0 C380.7 1321.7 411.1 1313.8 438.0 1307.6 C464.9 1301.5 479.7 1298.6 520.0 1289.9 C560.3 1281.2 626.7 1267.4 680.0 1255.5 C733.3 1243.6 786.7 1230.4 840.0 1218.4 C893.3 1206.5 946.7 1196.1 1000.0 1183.9 C1053.3 1171.6 1106.7 1158.1 1160.0 1144.9 C1213.3 1131.6 1266.7 1118.1 1320.0 1104.4 C1373.3 1090.7 1426.7 1076.2 1480.0 1062.6 C1533.3 1048.9 1586.7 1036.6 1640.0 1022.6 C1693.3 1008.6 1746.7 993.3 1800.0 978.6 C1853.3 963.9 1906.7 949.3 1960.0 934.5 C2013.3 919.6 2066.7 905.1 2120.0 889.6 C2173.3 874.1 2226.7 857.9 2280.0 841.4 C2333.3 824.9 2400.0 803.2 2440.0 790.6 C2480.0 778.1 2493.3 774.3 2520.0 766.1 C2546.7 758.0 2570.0 749.7 2600.0 741.6 C2630.0 733.5 2683.3 721.6 2700.0 717.5" stroke="url(#hl)" stroke-width="10" stroke-opacity="0.2"/>
<path d="M2795.2 709.8 C2791.0 711.2 2779.3 715.0 2769.8 718.2 C2760.3 721.4 2766.3 719.0 2738.0 728.8 C2709.7 738.6 2649.7 759.8 2600.0 777.0 C2550.3 794.2 2493.3 814.2 2440.0 832.3 C2386.7 850.4 2333.3 868.3 2280.0 885.5 C2226.7 902.7 2173.3 919.3 2120.0 935.4 C2066.7 951.5 2013.3 966.8 1960.0 982.2 C1906.7 997.6 1853.3 1012.8 1800.0 1027.8 C1746.7 1042.8 1693.3 1058.0 1640.0 1072.0 C1586.7 1086.0 1533.3 1098.8 1480.0 1111.6 C1426.7 1124.4 1373.3 1136.6 1320.0 1148.8 C1266.7 1161.0 1213.3 1173.5 1160.0 1185.0 C1106.7 1196.5 1053.3 1207.1 1000.0 1217.6 C946.7 1228.1 893.3 1237.8 840.0 1248.0 C786.7 1258.2 733.3 1268.7 680.0 1279.0 C626.7 1289.3 560.3 1302.0 520.0 1309.8 C479.7 1317.6 464.9 1320.3 438.0 1326.0 C411.1 1331.7 380.7 1339.2 358.7 1344.0 C336.7 1348.8 320.1 1352.2 305.8 1354.6 C291.5 1357.0 281.6 1359.0 272.8 1358.6 C264.0 1358.2 258.5 1355.5 253.0 1352.0 C247.5 1348.5 244.1 1344.5 239.7 1337.4 C235.3 1330.3 228.7 1314.2 226.5 1309.6" stroke="#7a1c00" stroke-width="30" stroke-opacity="0.07"/>
<path d="M2795.2 709.8 C2791.0 711.2 2779.3 715.0 2769.8 718.2 C2760.3 721.4 2766.3 719.0 2738.0 728.8 C2709.7 738.6 2649.7 759.8 2600.0 777.0 C2550.3 794.2 2493.3 814.2 2440.0 832.3 C2386.7 850.4 2333.3 868.3 2280.0 885.5 C2226.7 902.7 2173.3 919.3 2120.0 935.4 C2066.7 951.5 2013.3 966.8 1960.0 982.2 C1906.7 997.6 1853.3 1012.8 1800.0 1027.8 C1746.7 1042.8 1693.3 1058.0 1640.0 1072.0 C1586.7 1086.0 1533.3 1098.8 1480.0 1111.6 C1426.7 1124.4 1373.3 1136.6 1320.0 1148.8 C1266.7 1161.0 1213.3 1173.5 1160.0 1185.0 C1106.7 1196.5 1053.3 1207.1 1000.0 1217.6 C946.7 1228.1 893.3 1237.8 840.0 1248.0 C786.7 1258.2 733.3 1268.7 680.0 1279.0 C626.7 1289.3 560.3 1302.0 520.0 1309.8 C479.7 1317.6 464.9 1320.3 438.0 1326.0 C411.1 1331.7 380.7 1339.2 358.7 1344.0 C336.7 1348.8 320.1 1352.2 305.8 1354.6 C291.5 1357.0 281.6 1359.0 272.8 1358.6 C264.0 1358.2 258.5 1355.5 253.0 1352.0 C247.5 1348.5 244.1 1344.5 239.7 1337.4 C235.3 1330.3 228.7 1314.2 226.5 1309.6" stroke="#7a1c00" stroke-width="22" stroke-opacity="0.08"/>
<path d="M2795.2 709.8 C2791.0 711.2 2779.3 715.0 2769.8 718.2 C2760.3 721.4 2766.3 719.0 2738.0 728.8 C2709.7 738.6 2649.7 759.8 2600.0 777.0 C2550.3 794.2 2493.3 814.2 2440.0 832.3 C2386.7 850.4 2333.3 868.3 2280.0 885.5 C2226.7 902.7 2173.3 919.3 2120.0 935.4 C2066.7 951.5 2013.3 966.8 1960.0 982.2 C1906.7 997.6 1853.3 1012.8 1800.0 1027.8 C1746.7 1042.8 1693.3 1058.0 1640.0 1072.0 C1586.7 1086.0 1533.3 1098.8 1480.0 1111.6 C1426.7 1124.4 1373.3 1136.6 1320.0 1148.8 C1266.7 1161.0 1213.3 1173.5 1160.0 1185.0 C1106.7 1196.5 1053.3 1207.1 1000.0 1217.6 C946.7 1228.1 893.3 1237.8 840.0 1248.0 C786.7 1258.2 733.3 1268.7 680.0 1279.0 C626.7 1289.3 560.3 1302.0 520.0 1309.8 C479.7 1317.6 464.9 1320.3 438.0 1326.0 C411.1 1331.7 380.7 1339.2 358.7 1344.0 C336.7 1348.8 320.1 1352.2 305.8 1354.6 C291.5 1357.0 281.6 1359.0 272.8 1358.6 C264.0 1358.2 258.5 1355.5 253.0 1352.0 C247.5 1348.5 244.1 1344.5 239.7 1337.4 C235.3 1330.3 228.7 1314.2 226.5 1309.6" stroke="#7a1c00" stroke-width="15" stroke-opacity="0.10"/>
<path d="M2795.2 709.8 C2791.0 711.2 2779.3 715.0 2769.8 718.2 C2760.3 721.4 2766.3 719.0 2738.0 728.8 C2709.7 738.6 2649.7 759.8 2600.0 777.0 C2550.3 794.2 2493.3 814.2 2440.0 832.3 C2386.7 850.4 2333.3 868.3 2280.0 885.5 C2226.7 902.7 2173.3 919.3 2120.0 935.4 C2066.7 951.5 2013.3 966.8 1960.0 982.2 C1906.7 997.6 1853.3 1012.8 1800.0 1027.8 C1746.7 1042.8 1693.3 1058.0 1640.0 1072.0 C1586.7 1086.0 1533.3 1098.8 1480.0 1111.6 C1426.7 1124.4 1373.3 1136.6 1320.0 1148.8 C1266.7 1161.0 1213.3 1173.5 1160.0 1185.0 C1106.7 1196.5 1053.3 1207.1 1000.0 1217.6 C946.7 1228.1 893.3 1237.8 840.0 1248.0 C786.7 1258.2 733.3 1268.7 680.0 1279.0 C626.7 1289.3 560.3 1302.0 520.0 1309.8 C479.7 1317.6 464.9 1320.3 438.0 1326.0 C411.1 1331.7 380.7 1339.2 358.7 1344.0 C336.7 1348.8 320.1 1352.2 305.8 1354.6 C291.5 1357.0 281.6 1359.0 272.8 1358.6 C264.0 1358.2 258.5 1355.5 253.0 1352.0 C247.5 1348.5 244.1 1344.5 239.7 1337.4 C235.3 1330.3 228.7 1314.2 226.5 1309.6" stroke="#7a1c00" stroke-width="9" stroke-opacity="0.12"/>
<path d="M2795.2 709.8 C2791.0 711.2 2779.3 715.0 2769.8 718.2 C2760.3 721.4 2766.3 719.0 2738.0 728.8 C2709.7 738.6 2649.7 759.8 2600.0 777.0 C2550.3 794.2 2493.3 814.2 2440.0 832.3 C2386.7 850.4 2333.3 868.3 2280.0 885.5 C2226.7 902.7 2173.3 919.3 2120.0 935.4 C2066.7 951.5 2013.3 966.8 1960.0 982.2 C1906.7 997.6 1853.3 1012.8 1800.0 1027.8 C1746.7 1042.8 1693.3 1058.0 1640.0 1072.0 C1586.7 1086.0 1533.3 1098.8 1480.0 1111.6 C1426.7 1124.4 1373.3 1136.6 1320.0 1148.8 C1266.7 1161.0 1213.3 1173.5 1160.0 1185.0 C1106.7 1196.5 1053.3 1207.1 1000.0 1217.6 C946.7 1228.1 893.3 1237.8 840.0 1248.0 C786.7 1258.2 733.3 1268.7 680.0 1279.0 C626.7 1289.3 560.3 1302.0 520.0 1309.8 C479.7 1317.6 464.9 1320.3 438.0 1326.0 C411.1 1331.7 380.7 1339.2 358.7 1344.0 C336.7 1348.8 320.1 1352.2 305.8 1354.6 C291.5 1357.0 281.6 1359.0 272.8 1358.6 C264.0 1358.2 258.5 1355.5 253.0 1352.0 C247.5 1348.5 244.1 1344.5 239.7 1337.4 C235.3 1330.3 228.7 1314.2 226.5 1309.6" stroke="#7a1c00" stroke-width="4" stroke-opacity="0.16"/>
<path d="M255.6 1344.4 C264.0 1342.5 288.6 1337.1 305.8 1333.0 C323.0 1328.9 336.7 1325.5 358.7 1320.0 C380.7 1314.5 411.1 1306.4 438.0 1300.0 C464.9 1293.6 479.7 1290.6 520.0 1281.5 C560.3 1272.4 626.7 1258.2 680.0 1245.5 C733.3 1232.8 786.7 1218.2 840.0 1205.5 C893.3 1192.8 946.7 1182.1 1000.0 1169.0 C1053.3 1155.9 1106.7 1141.1 1160.0 1127.0 C1213.3 1112.9 1266.7 1098.9 1320.0 1084.5 C1373.3 1070.1 1426.7 1054.5 1480.0 1040.5 C1533.3 1026.5 1586.7 1014.4 1640.0 1000.4 C1693.3 986.4 1773.3 963.8 1800.0 956.5" stroke="#a02a0c" stroke-width="5" stroke-opacity="0.55"/>
</g>
<g clip-path="url(#cpB)">
<g filter="url(#cm)">
<rect x="0" y="200" width="2880" height="1500" fill="#000"/>
<g>
<path d="M232.8 1175.2 L213.9 1138.4 L221.6 1149.7 L183.4 1155.6 L201.1 1153.0 L222.3 1149.7 L244.9 1145.7 L266.8 1141.0 L287.6 1135.4 L308.3 1129.1 L328.6 1122.4 L348.6 1115.7 L368.2 1109.4 L387.9 1103.2 L407.7 1097.0 L427.6 1090.8 L447.4 1084.6 L467.3 1078.4 L487.4 1072.1 L507.7 1065.7 L528.0 1059.4 L547.7 1053.2 L566.6 1047.2 L584.1 1041.6 L600.4 1036.4 L616.3 1031.2 L632.6 1026.0 L650.0 1020.3 L668.7 1014.3 L688.4 1008.0 L708.8 1001.4 L729.5 994.6 L749.9 987.6 L770.1 980.3 L790.3 972.9 L810.3 965.2 L830.3 957.5 L850.4 949.6 L870.5 941.5 L890.5 933.3 L910.4 925.0 L930.2 916.7 L950.0 908.4 L970.1 900.1 L990.5 891.6 L1010.7 883.3 L1030.4 875.4 L1049.3 868.0 L1066.3 861.4 L1081.5 855.4 L1096.4 849.6 L1112.6 843.6 L1131.8 836.7 L1155.7 828.6 L1183.6 820.3 L1212.9 811.9 L1241.0 803.8 L1265.5 796.7 L1285.8 790.6 L1303.6 785.1 L1319.2 780.2 L1333.3 775.5 L1346.6 771.1 L1358.6 767.2 L1368.5 764.0 L1377.6 761.0 L1387.2 758.1 L1398.9 754.6 L1413.1 750.4 L1428.8 745.8 L1445.1 741.2 L1461.5 736.7 L1477.0 732.2 L1492.3 728.1 L1508.4 724.1 L1524.6 720.1 L1540.6 716.2 L1555.5 712.3 L1568.7 708.6 L1580.1 705.2 L1590.3 702.0 L1600.0 699.0 L1609.9 695.9 L1620.6 692.8 L1631.4 689.5 L1642.3 686.3 L1652.9 683.1 L1663.4 680.1 L1673.0 677.3 L1681.4 674.8 L1689.6 672.4 L1699.2 669.8 L1711.8 666.5 L1729.8 662.1 L1752.4 656.6 L1775.9 651.1 L1796.7 646.1 L1811.1 642.7 L1900 500 L1900 200 L-100 200 L-100 1300 L200 1300 Z" fill="rgb(2,2,2)"/>
<path d="M231.2 1176.0 L212.3 1139.4 L218.4 1148.3 L183.1 1153.8 L200.8 1151.2 L222.0 1147.9 L244.6 1143.9 L266.4 1139.2 L287.1 1133.6 L307.7 1127.3 L328.0 1120.6 L348.0 1114.0 L367.6 1107.6 L387.3 1101.5 L407.2 1095.3 L427.0 1089.1 L446.9 1082.9 L466.7 1076.7 L486.8 1070.4 L507.2 1064.0 L527.4 1057.6 L547.2 1051.4 L566.1 1045.4 L583.5 1039.8 L599.8 1034.6 L615.7 1029.5 L632.0 1024.2 L649.4 1018.6 L668.1 1012.5 L687.9 1006.2 L708.2 999.7 L728.9 992.9 L749.3 985.8 L769.5 978.6 L789.6 971.1 L809.7 963.5 L829.7 955.8 L849.7 947.9 L869.8 939.8 L889.8 931.6 L909.7 923.3 L929.5 914.9 L949.3 906.7 L969.4 898.4 L989.8 889.9 L1010.0 881.6 L1029.7 873.7 L1048.6 866.3 L1065.6 859.6 L1080.8 853.6 L1095.7 847.8 L1111.9 841.8 L1131.1 834.9 L1155.0 826.7 L1182.9 818.3 L1212.2 809.9 L1240.3 801.7 L1264.7 794.5 L1285.0 788.3 L1302.7 782.9 L1318.3 777.9 L1332.4 773.1 L1345.8 768.7 L1357.7 764.8 L1367.6 761.5 L1376.7 758.6 L1386.4 755.6 L1398.1 752.1 L1412.3 747.9 L1428.0 743.3 L1444.3 738.6 L1460.7 734.1 L1476.3 729.6 L1491.6 725.4 L1507.7 721.4 L1524.0 717.4 L1539.9 713.6 L1554.8 709.7 L1567.9 706.0 L1579.3 702.6 L1589.5 699.4 L1599.2 696.4 L1609.1 693.3 L1619.8 690.1 L1630.7 686.9 L1641.5 683.7 L1652.2 680.5 L1662.7 677.4 L1672.2 674.6 L1680.6 672.2 L1688.8 669.8 L1698.5 667.1 L1711.1 663.9 L1729.1 659.4 L1751.7 654.0 L1775.3 648.4 L1796.1 643.5 L1810.5 640.0 L1900 500 L1900 200 L-100 200 L-100 1300 L200 1300 Z" fill="rgb(3,3,3)"/>
<path d="M229.5 1176.9 L210.7 1140.3 L215.2 1147.0 L182.8 1151.9 L200.6 1149.3 L221.7 1146.1 L244.2 1142.1 L266.0 1137.4 L286.6 1131.8 L307.1 1125.5 L327.4 1118.9 L347.4 1112.2 L367.1 1105.9 L386.8 1099.7 L406.6 1093.5 L426.5 1087.3 L446.3 1081.1 L466.2 1074.9 L486.3 1068.6 L506.6 1062.2 L526.9 1055.8 L546.6 1049.6 L565.5 1043.6 L582.9 1038.1 L599.2 1032.9 L615.2 1027.7 L631.4 1022.5 L648.8 1016.8 L667.6 1010.8 L687.3 1004.5 L707.7 997.9 L728.3 991.1 L748.7 984.1 L768.9 976.8 L789.0 969.4 L809.0 961.8 L829.0 954.0 L849.0 946.2 L869.1 938.1 L889.1 929.9 L909.0 921.5 L928.8 913.2 L948.6 905.0 L968.7 896.7 L989.1 888.2 L1009.2 879.8 L1029.0 872.0 L1047.9 864.5 L1064.9 857.9 L1080.1 851.8 L1095.0 846.0 L1111.3 839.9 L1130.5 833.0 L1154.4 824.8 L1182.2 816.4 L1211.5 807.8 L1239.5 799.6 L1264.0 792.3 L1284.2 786.1 L1301.9 780.6 L1317.5 775.5 L1331.6 770.8 L1344.9 766.3 L1356.8 762.4 L1366.8 759.1 L1375.9 756.2 L1385.6 753.1 L1397.3 749.6 L1411.5 745.4 L1427.1 740.7 L1443.5 736.0 L1459.9 731.4 L1475.5 726.9 L1491.0 722.8 L1507.1 718.7 L1523.3 714.8 L1539.3 710.9 L1554.1 707.0 L1567.1 703.4 L1578.5 700.0 L1588.7 696.8 L1598.3 693.7 L1608.3 690.7 L1619.0 687.5 L1629.9 684.2 L1640.7 681.0 L1651.4 677.9 L1661.9 674.8 L1671.5 672.0 L1679.8 669.5 L1688.1 667.2 L1697.8 664.5 L1710.4 661.2 L1728.5 656.8 L1751.1 651.3 L1774.6 645.7 L1795.4 640.8 L1809.8 637.4 L1900 500 L1900 200 L-100 200 L-100 1300 L200 1300 Z" fill="rgb(4,4,4)"/>
<path d="M227.9 1177.7 L209.1 1141.3 L212.0 1145.6 L182.6 1150.1 L200.3 1147.5 L221.4 1144.2 L243.8 1140.3 L265.5 1135.6 L286.1 1130.1 L306.6 1123.8 L326.9 1117.1 L346.8 1110.4 L366.5 1104.1 L386.2 1097.9 L406.1 1091.7 L425.9 1085.5 L445.8 1079.3 L465.6 1073.1 L485.7 1066.8 L506.1 1060.4 L526.3 1054.1 L546.1 1047.9 L564.9 1041.9 L582.4 1036.3 L598.7 1031.1 L614.6 1026.0 L630.9 1020.7 L648.3 1015.0 L667.0 1009.0 L686.7 1002.7 L707.1 996.2 L727.7 989.4 L748.1 982.3 L768.2 975.1 L788.3 967.7 L808.3 960.1 L828.3 952.3 L848.3 944.4 L868.4 936.4 L888.4 928.1 L908.3 919.8 L928.1 911.5 L947.9 903.3 L968.0 895.0 L988.3 886.5 L1008.5 878.1 L1028.3 870.2 L1047.1 862.8 L1064.1 856.1 L1079.4 850.1 L1094.3 844.2 L1110.6 838.1 L1129.8 831.2 L1153.7 823.0 L1181.6 814.4 L1210.8 805.8 L1238.8 797.5 L1263.2 790.1 L1283.4 783.9 L1301.0 778.3 L1316.6 773.2 L1330.7 768.4 L1344.1 764.0 L1356.0 760.0 L1365.9 756.7 L1375.0 753.7 L1384.7 750.7 L1396.4 747.1 L1410.6 742.8 L1426.3 738.2 L1442.7 733.4 L1459.2 728.8 L1474.8 724.3 L1490.3 720.1 L1506.4 716.1 L1522.7 712.1 L1538.6 708.2 L1553.4 704.4 L1566.4 700.7 L1577.7 697.3 L1587.9 694.2 L1597.5 691.1 L1607.5 688.1 L1618.2 684.9 L1629.1 681.6 L1639.9 678.4 L1650.6 675.2 L1661.1 672.2 L1670.7 669.4 L1679.0 666.9 L1687.4 664.5 L1697.1 661.8 L1709.8 658.6 L1727.8 654.1 L1750.5 648.6 L1774.0 643.0 L1794.8 638.1 L1809.2 634.7 L1900 500 L1900 200 L-100 200 L-100 1300 L200 1300 Z" fill="rgb(6,6,6)"/>
<path d="M226.2 1178.6 L207.5 1142.2 L208.9 1144.2 L182.3 1148.3 L200.0 1145.7 L221.1 1142.4 L243.5 1138.4 L265.1 1133.8 L285.6 1128.3 L306.0 1122.0 L326.3 1115.3 L346.3 1108.7 L366.0 1102.3 L385.7 1096.2 L405.5 1090.0 L425.4 1083.8 L445.2 1077.6 L465.1 1071.4 L485.2 1065.1 L505.5 1058.7 L525.8 1052.3 L545.5 1046.1 L564.4 1040.1 L581.8 1034.6 L598.1 1029.3 L614.0 1024.2 L630.3 1018.9 L647.7 1013.3 L666.4 1007.2 L686.2 1001.0 L706.5 994.4 L727.1 987.6 L747.5 980.6 L767.6 973.4 L787.7 965.9 L807.7 958.3 L827.7 950.6 L847.6 942.7 L867.7 934.7 L887.7 926.4 L907.6 918.1 L927.4 909.8 L947.2 901.6 L967.3 893.3 L987.6 884.8 L1007.8 876.4 L1027.6 868.5 L1046.4 861.1 L1063.4 854.3 L1078.6 848.3 L1093.6 842.4 L1109.9 836.3 L1129.1 829.4 L1153.0 821.1 L1180.9 812.5 L1210.1 803.8 L1238.1 795.4 L1262.4 788.0 L1282.6 781.6 L1300.2 776.0 L1315.8 770.9 L1329.8 766.1 L1343.2 761.6 L1355.1 757.6 L1365.0 754.3 L1374.2 751.3 L1383.9 748.2 L1395.6 744.6 L1409.8 740.3 L1425.5 735.6 L1441.9 730.8 L1458.4 726.2 L1474.0 721.6 L1489.6 717.5 L1505.7 713.4 L1522.1 709.5 L1537.9 705.6 L1552.7 701.7 L1565.6 698.1 L1576.9 694.7 L1587.0 691.5 L1596.7 688.5 L1606.7 685.4 L1617.4 682.2 L1628.3 679.0 L1639.2 675.8 L1649.8 672.6 L1660.4 669.5 L1669.9 666.8 L1678.3 664.3 L1686.6 661.9 L1696.4 659.2 L1709.1 655.9 L1727.2 651.4 L1749.8 646.0 L1773.4 640.4 L1794.2 635.5 L1808.6 632.0 L1900 500 L1900 200 L-100 200 L-100 1300 L200 1300 Z" fill="rgb(8,8,8)"/>
<path d="M224.6 1179.4 L205.9 1143.2 L205.7 1142.8 L182.0 1146.5 L199.7 1143.9 L220.8 1140.6 L243.1 1136.6 L264.6 1132.0 L285.1 1126.5 L305.5 1120.2 L325.7 1113.6 L345.7 1106.9 L365.4 1100.6 L385.1 1094.4 L405.0 1088.2 L424.8 1082.0 L444.7 1075.8 L464.5 1069.6 L484.6 1063.3 L505.0 1056.9 L525.2 1050.5 L545.0 1044.3 L563.8 1038.4 L581.3 1032.8 L597.5 1027.6 L613.5 1022.4 L629.7 1017.2 L647.1 1011.5 L665.9 1005.5 L685.6 999.2 L705.9 992.6 L726.5 985.8 L746.9 978.8 L767.0 971.6 L787.0 964.2 L807.0 956.6 L827.0 948.9 L847.0 941.0 L867.0 933.0 L886.9 924.7 L906.8 916.4 L926.7 908.1 L946.5 899.9 L966.6 891.5 L986.9 883.1 L1007.1 874.7 L1026.9 866.8 L1045.7 859.3 L1062.7 852.6 L1077.9 846.5 L1092.9 840.7 L1109.2 834.5 L1128.4 827.5 L1152.4 819.2 L1180.2 810.5 L1209.4 801.7 L1237.3 793.3 L1261.6 785.8 L1281.8 779.4 L1299.4 773.7 L1314.9 768.6 L1329.0 763.7 L1342.3 759.2 L1354.2 755.2 L1364.2 751.9 L1373.3 748.9 L1383.1 745.8 L1394.8 742.1 L1409.0 737.8 L1424.7 733.1 L1441.1 728.3 L1457.6 723.6 L1473.3 719.0 L1488.9 714.8 L1505.1 710.7 L1521.4 706.8 L1537.2 702.9 L1552.0 699.1 L1564.8 695.5 L1576.1 692.1 L1586.2 688.9 L1595.9 685.9 L1605.9 682.8 L1616.6 679.6 L1627.5 676.4 L1638.4 673.1 L1649.1 670.0 L1659.6 666.9 L1669.1 664.1 L1677.5 661.6 L1685.9 659.2 L1695.7 656.5 L1708.4 653.2 L1726.5 648.8 L1749.2 643.3 L1772.7 637.7 L1793.5 632.8 L1807.9 629.4 L1900 500 L1900 200 L-100 200 L-100 1300 L200 1300 Z" fill="rgb(11,11,11)"/>
<path d="M222.9 1180.3 L204.3 1144.1 L202.5 1141.4 L181.7 1144.6 L199.5 1142.0 L220.5 1138.8 L242.8 1134.8 L264.2 1130.2 L284.6 1124.7 L304.9 1118.5 L325.1 1111.8 L345.1 1105.2 L364.8 1098.8 L384.6 1092.6 L404.4 1086.4 L424.3 1080.2 L444.1 1074.0 L464.0 1067.8 L484.1 1061.5 L504.4 1055.1 L524.7 1048.8 L544.4 1042.6 L563.2 1036.6 L580.7 1031.0 L597.0 1025.8 L612.9 1020.7 L629.2 1015.4 L646.5 1009.8 L665.3 1003.7 L685.0 997.4 L705.4 990.9 L725.9 984.1 L746.3 977.1 L766.3 969.9 L786.4 962.5 L806.3 954.9 L826.3 947.1 L846.3 939.3 L866.3 931.2 L886.2 923.0 L906.1 914.7 L926.0 906.4 L945.8 898.2 L965.9 889.8 L986.2 881.4 L1006.4 873.0 L1026.1 865.1 L1045.0 857.6 L1062.0 850.8 L1077.2 844.7 L1092.2 838.9 L1108.5 832.7 L1127.8 825.7 L1151.7 817.4 L1179.5 808.6 L1208.7 799.7 L1236.6 791.1 L1260.9 783.6 L1281.0 777.2 L1298.5 771.4 L1314.0 766.2 L1328.1 761.4 L1341.5 756.8 L1353.4 752.8 L1363.3 749.5 L1372.5 746.4 L1382.2 743.3 L1394.0 739.6 L1408.2 735.3 L1423.8 730.5 L1440.3 725.7 L1456.8 720.9 L1472.6 716.4 L1488.2 712.1 L1504.4 708.1 L1520.8 704.1 L1536.6 700.3 L1551.2 696.4 L1564.1 692.8 L1575.3 689.5 L1585.4 686.3 L1595.1 683.3 L1605.1 680.2 L1615.8 677.0 L1626.7 673.7 L1637.6 670.5 L1648.3 667.3 L1658.8 664.3 L1668.4 661.5 L1676.7 659.0 L1685.1 656.6 L1695.0 653.9 L1707.7 650.6 L1725.9 646.1 L1748.5 640.6 L1772.1 635.0 L1792.9 630.1 L1807.3 626.7 L1900 500 L1900 200 L-100 200 L-100 1300 L200 1300 Z" fill="rgb(15,15,15)"/>
<path d="M221.3 1181.1 L202.8 1145.1 L199.3 1140.0 L181.5 1142.8 L199.2 1140.2 L220.2 1136.9 L242.4 1133.0 L263.8 1128.4 L284.0 1122.9 L304.3 1116.7 L324.5 1110.1 L344.5 1103.4 L364.3 1097.0 L384.0 1090.9 L403.9 1084.7 L423.7 1078.5 L443.6 1072.3 L463.4 1066.1 L483.5 1059.8 L503.9 1053.4 L524.1 1047.0 L543.8 1040.8 L562.7 1034.8 L580.1 1029.3 L596.4 1024.0 L612.3 1018.9 L628.6 1013.6 L646.0 1008.0 L664.8 1002.0 L684.5 995.7 L704.8 989.1 L725.3 982.3 L745.6 975.3 L765.7 968.1 L785.7 960.7 L805.7 953.1 L825.6 945.4 L845.6 937.6 L865.6 929.5 L885.5 921.3 L905.4 913.0 L925.3 904.7 L945.1 896.5 L965.1 888.1 L985.5 879.7 L1005.7 871.3 L1025.4 863.3 L1044.3 855.8 L1061.3 849.1 L1076.5 843.0 L1091.4 837.1 L1107.8 830.9 L1127.1 823.8 L1151.1 815.5 L1178.9 806.6 L1208.0 797.7 L1235.9 789.0 L1260.1 781.4 L1280.2 774.9 L1297.7 769.2 L1313.2 763.9 L1327.3 759.0 L1340.6 754.4 L1352.5 750.4 L1362.5 747.0 L1371.6 744.0 L1381.4 740.8 L1393.1 737.1 L1407.3 732.8 L1423.0 728.0 L1439.5 723.1 L1456.0 718.3 L1471.8 713.7 L1487.5 709.5 L1503.8 705.4 L1520.1 701.5 L1535.9 697.6 L1550.5 693.8 L1563.3 690.2 L1574.4 686.9 L1584.6 683.7 L1594.3 680.6 L1604.3 677.6 L1615.1 674.4 L1625.9 671.1 L1636.8 667.9 L1647.5 664.7 L1658.1 661.6 L1667.6 658.9 L1676.0 656.4 L1684.4 653.9 L1694.3 651.2 L1707.1 647.9 L1725.2 643.4 L1747.9 638.0 L1771.5 632.4 L1792.3 627.4 L1806.7 624.0 L1900 500 L1900 200 L-100 200 L-100 1300 L200 1300 Z" fill="rgb(19,19,19)"/>
<path d="M219.6 1182.0 L201.2 1146.0 L196.2 1138.7 L181.2 1141.0 L198.9 1138.4 L219.9 1135.1 L242.1 1131.2 L263.3 1126.6 L283.5 1121.2 L303.8 1114.9 L324.0 1108.3 L343.9 1101.7 L363.7 1095.3 L383.5 1089.1 L403.3 1082.9 L423.2 1076.7 L443.0 1070.5 L462.9 1064.3 L483.0 1058.0 L503.3 1051.6 L523.5 1045.3 L543.3 1039.0 L562.1 1033.1 L579.6 1027.5 L595.8 1022.3 L611.7 1017.2 L628.0 1011.9 L645.4 1006.2 L664.2 1000.2 L683.9 993.9 L704.2 987.4 L724.7 980.6 L745.0 973.6 L765.1 966.4 L785.1 959.0 L805.0 951.4 L825.0 943.7 L844.9 935.8 L864.9 927.8 L884.8 919.6 L904.7 911.3 L924.5 903.0 L944.3 894.7 L964.4 886.4 L984.8 878.0 L1005.0 869.6 L1024.7 861.6 L1043.6 854.1 L1060.5 847.3 L1075.8 841.2 L1090.7 835.3 L1107.1 829.0 L1126.4 822.0 L1150.4 813.6 L1178.2 804.7 L1207.3 795.6 L1235.1 786.9 L1259.3 779.2 L1279.4 772.7 L1296.9 766.9 L1312.3 761.6 L1326.4 756.7 L1339.8 752.1 L1351.7 748.0 L1361.6 744.6 L1370.8 741.5 L1380.6 738.4 L1392.3 734.7 L1406.5 730.3 L1422.2 725.4 L1438.7 720.5 L1455.2 715.7 L1471.1 711.1 L1486.8 706.8 L1503.1 702.7 L1519.5 698.8 L1535.2 694.9 L1549.8 691.2 L1562.5 687.6 L1573.6 684.2 L1583.8 681.1 L1593.5 678.0 L1603.5 674.9 L1614.3 671.7 L1625.2 668.5 L1636.0 665.2 L1646.8 662.1 L1657.3 659.0 L1666.8 656.2 L1675.2 653.7 L1683.6 651.3 L1693.6 648.6 L1706.4 645.3 L1724.6 640.8 L1747.3 635.3 L1770.8 629.7 L1791.6 624.8 L1806.0 621.4 L1900 500 L1900 200 L-100 200 L-100 1300 L200 1300 Z" fill="rgb(25,25,25)"/>
<path d="M218.0 1182.8 L199.6 1147.0 L193.0 1137.3 L180.9 1139.1 L198.6 1136.5 L219.6 1133.3 L241.7 1129.4 L262.9 1124.8 L283.0 1119.4 L303.2 1113.2 L323.4 1106.6 L343.4 1099.9 L363.2 1093.5 L382.9 1087.3 L402.8 1081.1 L422.6 1074.9 L442.5 1068.7 L462.3 1062.5 L482.4 1056.2 L502.8 1049.8 L523.0 1043.5 L542.7 1037.3 L561.6 1031.3 L579.0 1025.7 L595.3 1020.5 L611.2 1015.4 L627.4 1010.1 L644.8 1004.5 L663.6 998.4 L683.3 992.1 L703.6 985.6 L724.1 978.8 L744.4 971.8 L764.4 964.7 L784.4 957.3 L804.4 949.7 L824.3 942.0 L844.2 934.1 L864.2 926.1 L884.1 917.9 L904.0 909.6 L923.8 901.3 L943.6 893.0 L963.7 884.7 L984.1 876.3 L1004.3 867.9 L1024.0 859.9 L1042.9 852.3 L1059.8 845.5 L1075.0 839.4 L1090.0 833.5 L1106.4 827.2 L1125.7 820.2 L1149.7 811.8 L1177.5 802.8 L1206.6 793.6 L1234.4 784.8 L1258.6 777.1 L1278.6 770.5 L1296.0 764.6 L1311.5 759.3 L1325.5 754.3 L1338.9 749.7 L1350.8 745.6 L1360.7 742.2 L1369.9 739.1 L1379.7 735.9 L1391.5 732.2 L1405.7 727.7 L1421.4 722.9 L1437.8 717.9 L1454.4 713.1 L1470.3 708.4 L1486.1 704.2 L1502.5 700.1 L1518.8 696.1 L1534.6 692.3 L1549.1 688.5 L1561.8 684.9 L1572.8 681.6 L1582.9 678.5 L1592.7 675.4 L1602.8 672.3 L1613.5 669.1 L1624.4 665.8 L1635.3 662.6 L1646.0 659.4 L1656.5 656.4 L1666.0 653.6 L1674.4 651.1 L1682.9 648.7 L1692.9 645.9 L1705.7 642.6 L1723.9 638.1 L1746.6 632.6 L1770.2 627.0 L1791.0 622.1 L1805.4 618.7 L1900 500 L1900 200 L-100 200 L-100 1300 L200 1300 Z" fill="rgb(31,31,31)"/>
<path d="M216.3 1183.6 L198.0 1147.9 L189.8 1135.9 L180.6 1137.3 L198.4 1134.7 L219.3 1131.4 L241.4 1127.5 L262.5 1123.0 L282.5 1117.6 L302.7 1111.4 L322.8 1104.8 L342.8 1098.1 L362.6 1091.7 L382.4 1085.6 L402.2 1079.4 L422.1 1073.2 L441.9 1067.0 L461.8 1060.8 L481.8 1054.5 L502.2 1048.1 L522.4 1041.7 L542.2 1035.5 L561.0 1029.5 L578.4 1024.0 L594.7 1018.8 L610.6 1013.6 L626.9 1008.4 L644.3 1002.7 L663.1 996.7 L682.8 990.4 L703.1 983.8 L723.5 977.1 L743.8 970.1 L763.8 962.9 L783.8 955.5 L803.7 948.0 L823.6 940.2 L843.5 932.4 L863.5 924.4 L883.4 916.2 L903.3 907.9 L923.1 899.6 L942.9 891.3 L963.0 883.0 L983.4 874.5 L1003.6 866.2 L1023.3 858.1 L1042.1 850.6 L1059.1 843.8 L1074.3 837.6 L1089.3 831.7 L1105.7 825.4 L1125.1 818.3 L1149.1 809.9 L1176.9 800.8 L1205.9 791.6 L1233.7 782.7 L1257.8 774.9 L1277.8 768.2 L1295.2 762.3 L1310.6 757.0 L1324.7 752.0 L1338.0 747.3 L1349.9 743.2 L1359.9 739.8 L1369.1 736.7 L1378.9 733.4 L1390.7 729.7 L1404.9 725.2 L1420.6 720.3 L1437.0 715.3 L1453.6 710.5 L1469.6 705.8 L1485.4 701.5 L1501.8 697.4 L1518.2 693.5 L1533.9 689.6 L1548.4 685.9 L1561.0 682.3 L1572.0 679.0 L1582.1 675.8 L1591.8 672.8 L1602.0 669.7 L1612.7 666.5 L1623.6 663.2 L1634.5 660.0 L1645.2 656.8 L1655.8 653.7 L1665.3 651.0 L1673.7 648.5 L1682.2 646.0 L1692.2 643.3 L1705.0 639.9 L1723.3 635.4 L1746.0 630.0 L1769.6 624.4 L1790.4 619.4 L1804.8 616.0 L1900 500 L1900 200 L-100 200 L-100 1300 L200 1300 Z" fill="rgb(39,39,39)"/>
<path d="M214.7 1184.5 L196.4 1148.8 L186.6 1134.5 L180.4 1135.5 L198.1 1132.9 L219.0 1129.6 L241.0 1125.7 L262.0 1121.2 L282.0 1115.8 L302.1 1109.6 L322.2 1103.0 L342.2 1096.4 L362.0 1090.0 L381.8 1083.8 L401.7 1077.6 L421.5 1071.4 L441.4 1065.2 L461.2 1059.0 L481.3 1052.7 L501.7 1046.3 L521.9 1040.0 L541.6 1033.7 L560.4 1027.8 L577.9 1022.2 L594.1 1017.0 L610.0 1011.9 L626.3 1006.6 L643.7 1001.0 L662.5 994.9 L682.2 988.6 L702.5 982.1 L722.9 975.3 L743.2 968.4 L763.2 961.2 L783.1 953.8 L803.0 946.2 L822.9 938.5 L842.8 930.7 L862.8 922.7 L882.7 914.5 L902.6 906.2 L922.4 897.9 L942.2 889.6 L962.3 881.3 L982.7 872.8 L1002.9 864.4 L1022.6 856.4 L1041.4 848.8 L1058.4 842.0 L1073.6 835.9 L1088.6 829.9 L1105.0 823.6 L1124.4 816.5 L1148.4 808.0 L1176.2 798.9 L1205.2 789.5 L1232.9 780.6 L1257.0 772.7 L1277.0 766.0 L1294.3 760.0 L1309.8 754.6 L1323.8 749.6 L1337.2 744.9 L1349.1 740.8 L1359.0 737.4 L1368.2 734.2 L1378.1 731.0 L1389.9 727.2 L1404.1 722.7 L1419.7 717.8 L1436.2 712.7 L1452.8 707.8 L1468.8 703.2 L1484.7 698.9 L1501.1 694.8 L1517.5 690.8 L1533.2 687.0 L1547.7 683.2 L1560.2 679.7 L1571.2 676.4 L1581.3 673.2 L1591.0 670.2 L1601.2 667.1 L1611.9 663.8 L1622.8 660.6 L1633.7 657.4 L1644.5 654.2 L1655.0 651.1 L1664.5 648.3 L1672.9 645.8 L1681.4 643.4 L1691.5 640.6 L1704.4 637.3 L1722.6 632.8 L1745.3 627.3 L1768.9 621.7 L1789.7 616.8 L1804.1 613.3 L1900 500 L1900 200 L-100 200 L-100 1300 L200 1300 Z" fill="rgb(48,48,48)"/>
<path d="M213.1 1185.3 L194.8 1149.8 L183.5 1133.1 L180.1 1133.6 L197.8 1131.0 L218.7 1127.8 L240.6 1123.9 L261.6 1119.4 L281.5 1114.0 L301.5 1107.9 L321.6 1101.3 L341.6 1094.6 L361.5 1088.2 L381.3 1082.0 L401.1 1075.8 L421.0 1069.6 L440.8 1063.4 L460.6 1057.2 L480.7 1050.9 L501.1 1044.5 L521.3 1038.2 L541.1 1032.0 L559.9 1026.0 L577.3 1020.4 L593.6 1015.2 L609.5 1010.1 L625.7 1004.8 L643.1 999.2 L661.9 993.1 L681.6 986.8 L701.9 980.3 L722.4 973.6 L742.6 966.6 L762.5 959.4 L782.5 952.1 L802.4 944.5 L822.3 936.8 L842.2 929.0 L862.1 921.0 L882.0 912.8 L901.8 904.5 L921.7 896.2 L941.5 887.9 L961.6 879.6 L982.0 871.1 L1002.2 862.7 L1021.9 854.7 L1040.7 847.1 L1057.6 840.3 L1072.9 834.1 L1087.9 828.1 L1104.3 821.8 L1123.7 814.6 L1147.7 806.1 L1175.5 796.9 L1204.5 787.5 L1232.2 778.5 L1256.2 770.5 L1276.1 763.7 L1293.5 757.7 L1308.9 752.3 L1323.0 747.3 L1336.3 742.6 L1348.2 738.4 L1358.1 734.9 L1367.4 731.8 L1377.2 728.5 L1389.0 724.7 L1403.2 720.2 L1418.9 715.2 L1435.4 710.2 L1452.0 705.2 L1468.1 700.5 L1484.0 696.2 L1500.5 692.1 L1516.9 688.1 L1532.6 684.3 L1546.9 680.6 L1559.5 677.0 L1570.4 673.7 L1580.5 670.6 L1590.2 667.5 L1600.4 664.4 L1611.1 661.2 L1622.0 658.0 L1632.9 654.7 L1643.7 651.5 L1654.2 648.5 L1663.7 645.7 L1672.1 643.2 L1680.7 640.7 L1690.8 638.0 L1703.7 634.6 L1722.0 630.1 L1744.7 624.6 L1768.3 619.0 L1789.1 614.1 L1803.5 610.7 L1900 500 L1900 200 L-100 200 L-100 1300 L200 1300 Z" fill="rgb(57,57,57)"/>
<path d="M211.4 1186.2 L193.2 1150.7 L180.3 1131.7 L179.8 1131.8 L197.5 1129.2 L218.4 1126.0 L240.3 1122.1 L261.2 1117.6 L281.0 1112.3 L301.0 1106.1 L321.0 1099.5 L341.1 1092.9 L360.9 1086.4 L380.7 1080.3 L400.6 1074.1 L420.4 1067.9 L440.2 1061.7 L460.1 1055.5 L480.2 1049.2 L500.5 1042.8 L520.8 1036.4 L540.5 1030.2 L559.3 1024.2 L576.7 1018.7 L593.0 1013.5 L608.9 1008.3 L625.2 1003.1 L642.6 997.4 L661.4 991.4 L681.1 985.1 L701.3 978.6 L721.8 971.8 L742.0 964.9 L761.9 957.7 L781.8 950.3 L801.7 942.8 L821.6 935.1 L841.5 927.2 L861.4 919.2 L881.3 911.0 L901.1 902.8 L921.0 894.4 L940.8 886.2 L960.9 877.9 L981.2 869.4 L1001.5 861.0 L1021.2 853.0 L1040.0 845.4 L1056.9 838.5 L1072.1 832.3 L1087.2 826.3 L1103.6 820.0 L1123.0 812.8 L1147.1 804.3 L1174.8 795.0 L1203.8 785.5 L1231.5 776.3 L1255.5 768.3 L1275.3 761.5 L1292.7 755.5 L1308.1 750.0 L1322.1 744.9 L1335.5 740.2 L1347.3 736.0 L1357.3 732.5 L1366.5 729.3 L1376.4 726.0 L1388.2 722.2 L1402.4 717.7 L1418.1 712.7 L1434.6 707.6 L1451.3 702.6 L1467.3 697.9 L1483.4 693.6 L1499.8 689.4 L1516.2 685.5 L1531.9 681.6 L1546.2 677.9 L1558.7 674.4 L1569.6 671.1 L1579.7 668.0 L1589.4 664.9 L1599.6 661.8 L1610.3 658.6 L1621.2 655.3 L1632.1 652.1 L1642.9 648.9 L1653.5 645.8 L1662.9 643.1 L1671.4 640.6 L1679.9 638.1 L1690.0 635.3 L1703.0 632.0 L1721.3 627.4 L1744.1 622.0 L1767.7 616.4 L1788.5 611.4 L1802.9 608.0 L1900 500 L1900 200 L-100 200 L-100 1300 L200 1300 Z" fill="rgb(68,68,68)"/>
<path d="M209.8 1187.0 L191.6 1151.7 L177.1 1130.3 L179.5 1130.0 L197.2 1127.4 L218.1 1124.1 L239.9 1120.3 L260.7 1115.8 L280.5 1110.5 L300.4 1104.4 L320.5 1097.8 L340.5 1091.1 L360.4 1084.7 L380.2 1078.5 L400.0 1072.3 L419.9 1066.1 L439.7 1059.9 L459.5 1053.7 L479.6 1047.4 L500.0 1041.0 L520.2 1034.7 L539.9 1028.4 L558.8 1022.5 L576.2 1016.9 L592.4 1011.7 L608.3 1006.6 L624.6 1001.3 L642.0 995.7 L660.8 989.6 L680.5 983.3 L700.8 976.8 L721.2 970.1 L741.3 963.1 L761.3 956.0 L781.2 948.6 L801.0 941.0 L820.9 933.3 L840.8 925.5 L860.7 917.5 L880.6 909.3 L900.4 901.0 L920.3 892.7 L940.1 884.5 L960.2 876.2 L980.5 867.7 L1000.7 859.3 L1020.5 851.2 L1039.3 843.6 L1056.2 836.8 L1071.4 830.6 L1086.5 824.5 L1102.9 818.2 L1122.4 810.9 L1146.4 802.4 L1174.2 793.0 L1203.1 783.4 L1230.7 774.2 L1254.7 766.1 L1274.5 759.3 L1291.8 753.2 L1307.2 747.7 L1321.2 742.6 L1334.6 737.8 L1346.5 733.6 L1356.4 730.1 L1365.7 726.9 L1375.6 723.6 L1387.4 719.7 L1401.6 715.1 L1417.3 710.1 L1433.8 705.0 L1450.5 700.0 L1466.6 695.2 L1482.7 690.9 L1499.2 686.8 L1515.6 682.8 L1531.2 679.0 L1545.5 675.3 L1557.9 671.8 L1568.8 668.5 L1578.8 665.4 L1588.6 662.3 L1598.8 659.2 L1609.6 656.0 L1620.5 652.7 L1631.4 649.5 L1642.1 646.3 L1652.7 643.2 L1662.2 640.4 L1670.6 638.0 L1679.2 635.5 L1689.3 632.7 L1702.4 629.3 L1720.7 624.8 L1743.4 619.3 L1767.0 613.7 L1787.8 608.8 L1802.2 605.3 L1900 500 L1900 200 L-100 200 L-100 1300 L200 1300 Z" fill="rgb(80,80,80)"/>
<path d="M208.1 1187.9 L190.0 1152.6 L173.9 1129.0 L179.3 1128.1 L197.0 1125.5 L217.8 1122.3 L239.6 1118.5 L260.3 1114.0 L279.9 1108.7 L299.8 1102.6 L319.9 1096.0 L339.9 1089.3 L359.8 1082.9 L379.6 1076.7 L399.5 1070.5 L419.3 1064.3 L439.1 1058.1 L459.0 1051.9 L479.1 1045.6 L499.4 1039.2 L519.7 1032.9 L539.4 1026.7 L558.2 1020.7 L575.6 1015.2 L591.9 1009.9 L607.8 1004.8 L624.0 999.6 L641.4 993.9 L660.2 987.9 L679.9 981.6 L700.2 975.0 L720.6 968.3 L740.7 961.4 L760.6 954.2 L780.5 946.9 L800.4 939.3 L820.2 931.6 L840.1 923.8 L860.0 915.8 L879.9 907.6 L899.7 899.3 L919.5 891.0 L939.4 882.8 L959.5 874.4 L979.8 866.0 L1000.0 857.6 L1019.8 849.5 L1038.6 841.9 L1055.5 835.0 L1070.7 828.8 L1085.8 822.7 L1102.2 816.3 L1121.7 809.1 L1145.8 800.5 L1173.5 791.1 L1202.4 781.4 L1230.0 772.1 L1253.9 764.0 L1273.7 757.0 L1291.0 750.9 L1306.3 745.3 L1320.4 740.2 L1333.7 735.4 L1345.6 731.2 L1355.6 727.7 L1364.8 724.5 L1374.7 721.1 L1386.6 717.2 L1400.8 712.6 L1416.5 707.6 L1433.0 702.4 L1449.7 697.3 L1465.9 692.6 L1482.0 688.3 L1498.5 684.1 L1514.9 680.1 L1530.5 676.3 L1544.8 672.6 L1557.2 669.1 L1568.0 665.9 L1578.0 662.8 L1587.8 659.7 L1598.0 656.6 L1608.8 653.3 L1619.7 650.1 L1630.6 646.8 L1641.4 643.7 L1651.9 640.6 L1661.4 637.8 L1669.8 635.3 L1678.4 632.8 L1688.6 630.0 L1701.7 626.6 L1720.0 622.1 L1742.8 616.6 L1766.4 611.0 L1787.2 606.1 L1801.6 602.7 L1900 500 L1900 200 L-100 200 L-100 1300 L200 1300 Z" fill="rgb(93,93,93)"/>
<path d="M206.5 1188.7 L188.4 1153.6 L170.8 1127.6 L179.0 1126.3 L196.7 1123.7 L217.5 1120.5 L239.2 1116.6 L259.9 1112.2 L279.4 1106.9 L299.3 1100.8 L319.3 1094.3 L339.3 1087.6 L359.2 1081.1 L379.1 1075.0 L398.9 1068.8 L418.7 1062.6 L438.6 1056.4 L458.4 1050.2 L478.5 1043.9 L498.9 1037.5 L519.1 1031.1 L538.8 1024.9 L557.6 1018.9 L575.1 1013.4 L591.3 1008.2 L607.2 1003.1 L623.4 997.8 L640.9 992.1 L659.7 986.1 L679.4 979.8 L699.6 973.3 L720.0 966.5 L740.1 959.6 L760.0 952.5 L779.9 945.1 L799.7 937.6 L819.6 929.9 L839.4 922.1 L859.3 914.1 L879.1 905.9 L899.0 897.6 L918.8 889.3 L938.7 881.1 L958.8 872.7 L979.1 864.3 L999.3 855.9 L1019.0 847.8 L1037.9 840.1 L1054.8 833.2 L1070.0 827.0 L1085.0 820.9 L1101.5 814.5 L1121.0 807.3 L1145.1 798.7 L1172.8 789.1 L1201.7 779.4 L1229.3 770.0 L1253.2 761.8 L1272.9 754.8 L1290.2 748.6 L1305.5 743.0 L1319.5 737.9 L1332.9 733.1 L1344.8 728.8 L1354.7 725.3 L1364.0 722.0 L1373.9 718.6 L1385.7 714.7 L1399.9 710.1 L1415.6 705.1 L1432.2 699.8 L1448.9 694.7 L1465.1 690.0 L1481.3 685.6 L1497.9 681.4 L1514.3 677.5 L1529.9 673.7 L1544.1 670.0 L1556.4 666.5 L1567.2 663.2 L1577.2 660.1 L1587.0 657.1 L1597.2 653.9 L1608.0 650.7 L1618.9 647.4 L1629.8 644.2 L1640.6 641.0 L1651.2 637.9 L1660.6 635.2 L1669.0 632.7 L1677.7 630.2 L1687.9 627.4 L1701.0 624.0 L1719.4 619.5 L1742.2 614.0 L1765.8 608.4 L1786.6 603.4 L1801.0 600.0 L1900 500 L1900 200 L-100 200 L-100 1300 L200 1300 Z" fill="rgb(107,107,107)"/>
<path d="M204.8 1189.6 L186.8 1154.5 L167.6 1126.2 L178.7 1124.5 L196.4 1121.9 L217.2 1118.7 L238.9 1114.8 L259.4 1110.4 L278.9 1105.1 L298.7 1099.1 L318.7 1092.5 L338.8 1085.8 L358.7 1079.4 L378.5 1073.2 L398.4 1067.0 L418.2 1060.8 L438.0 1054.6 L457.9 1048.4 L478.0 1042.1 L498.3 1035.7 L518.5 1029.4 L538.3 1023.1 L557.1 1017.2 L574.5 1011.6 L590.7 1006.4 L606.6 1001.3 L622.9 996.0 L640.3 990.4 L659.1 984.3 L678.8 978.0 L699.0 971.5 L719.4 964.8 L739.5 957.9 L759.4 950.7 L779.2 943.4 L799.1 935.9 L818.9 928.2 L838.7 920.4 L858.6 912.4 L878.4 904.2 L898.3 895.9 L918.1 887.6 L938.0 879.4 L958.1 871.0 L978.4 862.6 L998.6 854.2 L1018.3 846.1 L1037.2 838.4 L1054.0 831.5 L1069.3 825.2 L1084.3 819.1 L1100.8 812.7 L1120.3 805.4 L1144.4 796.8 L1172.1 787.2 L1201.0 777.3 L1228.5 767.9 L1252.4 759.6 L1272.1 752.6 L1289.3 746.3 L1304.6 740.7 L1318.7 735.5 L1332.0 730.7 L1343.9 726.4 L1353.8 722.9 L1363.1 719.6 L1373.1 716.2 L1384.9 712.2 L1399.1 707.6 L1414.8 702.5 L1431.4 697.2 L1448.1 692.1 L1464.4 687.3 L1480.6 682.9 L1497.2 678.8 L1513.6 674.8 L1529.2 671.0 L1543.4 667.3 L1555.6 663.9 L1566.4 660.6 L1576.4 657.5 L1586.2 654.4 L1596.4 651.3 L1607.2 648.1 L1618.1 644.8 L1629.0 641.6 L1639.8 638.4 L1650.4 635.3 L1659.8 632.5 L1668.3 630.1 L1677.0 627.5 L1687.2 624.7 L1700.3 621.3 L1718.7 616.8 L1741.5 611.3 L1765.1 605.7 L1785.9 600.8 L1800.3 597.3 L1900 500 L1900 200 L-100 200 L-100 1300 L200 1300 Z" fill="rgb(121,121,121)"/>
<path d="M203.2 1190.4 L185.2 1155.5 L164.4 1124.8 L178.4 1122.6 L196.1 1120.1 L216.9 1116.8 L238.5 1113.0 L259.0 1108.6 L278.4 1103.4 L298.2 1097.3 L318.1 1090.7 L338.2 1084.1 L358.1 1077.6 L378.0 1071.4 L397.8 1065.2 L417.6 1059.0 L437.5 1052.8 L457.3 1046.6 L477.4 1040.3 L497.8 1033.9 L518.0 1027.6 L537.7 1021.4 L556.5 1015.4 L573.9 1009.9 L590.2 1004.7 L606.1 999.5 L622.3 994.3 L639.7 988.6 L658.5 982.6 L678.2 976.3 L698.5 969.8 L718.8 963.0 L738.9 956.1 L758.7 949.0 L778.6 941.7 L798.4 934.1 L818.2 926.4 L838.1 918.6 L857.9 910.7 L877.7 902.5 L897.6 894.2 L917.4 885.9 L937.2 877.6 L957.3 869.3 L977.7 860.9 L997.9 852.5 L1017.6 844.3 L1036.4 836.6 L1053.3 829.7 L1068.5 823.5 L1083.6 817.4 L1100.1 810.9 L1119.7 803.6 L1143.8 794.9 L1171.5 785.2 L1200.3 775.3 L1227.8 765.8 L1251.6 757.4 L1271.3 750.3 L1288.5 744.0 L1303.8 738.4 L1317.8 733.2 L1331.2 728.3 L1343.0 724.0 L1353.0 720.4 L1362.3 717.1 L1372.2 713.7 L1384.1 709.8 L1398.3 705.1 L1414.0 700.0 L1430.6 694.7 L1447.3 689.5 L1463.6 684.7 L1479.9 680.3 L1496.6 676.1 L1513.0 672.1 L1528.5 668.3 L1542.6 664.7 L1554.9 661.2 L1565.6 658.0 L1575.6 654.9 L1585.3 651.8 L1595.6 648.7 L1606.4 645.5 L1617.3 642.2 L1628.3 638.9 L1639.1 635.8 L1649.6 632.7 L1659.1 629.9 L1667.5 627.4 L1676.2 624.9 L1686.5 622.1 L1699.7 618.7 L1718.1 614.1 L1740.9 608.6 L1764.5 603.0 L1785.3 598.1 L1799.7 594.7 L1900 500 L1900 200 L-100 200 L-100 1300 L200 1300 Z" fill="rgb(134,134,134)"/>
<path d="M201.5 1191.3 L183.6 1156.4 L161.2 1123.4 L178.2 1120.8 L195.9 1118.2 L216.6 1115.0 L238.2 1111.2 L258.5 1106.8 L277.9 1101.6 L297.6 1095.5 L317.6 1089.0 L337.6 1082.3 L357.6 1075.9 L377.4 1069.7 L397.3 1063.5 L417.1 1057.3 L436.9 1051.1 L456.8 1044.8 L476.9 1038.6 L497.2 1032.2 L517.4 1025.8 L537.1 1019.6 L556.0 1013.7 L573.4 1008.1 L589.6 1002.9 L605.5 997.8 L621.7 992.5 L639.1 986.9 L658.0 980.8 L677.7 974.5 L697.9 968.0 L718.2 961.3 L738.3 954.4 L758.1 947.3 L777.9 939.9 L797.7 932.4 L817.5 924.7 L837.4 916.9 L857.2 909.0 L877.0 900.8 L896.8 892.5 L916.7 884.2 L936.5 875.9 L956.6 867.6 L977.0 859.2 L997.2 850.8 L1016.9 842.6 L1035.7 834.9 L1052.6 828.0 L1067.8 821.7 L1082.9 815.6 L1099.5 809.1 L1119.0 801.7 L1143.1 793.1 L1170.8 783.3 L1199.6 773.2 L1227.1 763.6 L1250.8 755.2 L1270.5 748.1 L1287.6 741.7 L1302.9 736.0 L1316.9 730.8 L1330.3 725.9 L1342.2 721.6 L1352.1 718.0 L1361.4 714.7 L1371.4 711.3 L1383.3 707.3 L1397.5 702.6 L1413.2 697.4 L1429.7 692.1 L1446.5 686.9 L1462.9 682.0 L1479.2 677.6 L1495.9 673.5 L1512.3 669.5 L1527.9 665.7 L1541.9 662.0 L1554.1 658.6 L1564.8 655.4 L1574.7 652.3 L1584.5 649.2 L1594.8 646.1 L1605.6 642.8 L1616.5 639.6 L1627.5 636.3 L1638.3 633.1 L1648.8 630.1 L1658.3 627.3 L1666.7 624.8 L1675.5 622.3 L1685.8 619.4 L1699.0 616.0 L1717.4 611.5 L1740.2 606.0 L1763.8 600.3 L1784.6 595.4 L1799.0 592.0 L1900 500 L1900 200 L-100 200 L-100 1300 L200 1300 Z" fill="rgb(148,148,148)"/>
<path d="M199.9 1192.1 L182.0 1157.4 L158.1 1122.0 L177.9 1119.0 L195.6 1116.4 L216.3 1113.2 L237.8 1109.4 L258.1 1105.0 L277.4 1099.8 L297.0 1093.8 L317.0 1087.2 L337.0 1080.5 L357.0 1074.1 L376.9 1067.9 L396.7 1061.7 L416.5 1055.5 L436.4 1049.3 L456.2 1043.1 L476.3 1036.8 L496.7 1030.4 L516.9 1024.1 L536.6 1017.8 L555.4 1011.9 L572.8 1006.3 L589.0 1001.1 L604.9 996.0 L621.2 990.8 L638.6 985.1 L657.4 979.0 L677.1 972.7 L697.3 966.2 L717.6 959.5 L737.7 952.6 L757.5 945.5 L777.3 938.2 L797.1 930.7 L816.9 923.0 L836.7 915.2 L856.5 907.2 L876.3 899.1 L896.1 890.8 L916.0 882.5 L935.8 874.2 L955.9 865.9 L976.3 857.4 L996.5 849.0 L1016.2 840.9 L1035.0 833.1 L1051.9 826.2 L1067.1 819.9 L1082.2 813.8 L1098.8 807.3 L1118.3 799.9 L1142.5 791.2 L1170.1 781.4 L1198.9 771.2 L1226.3 761.5 L1250.1 753.0 L1269.7 745.9 L1286.8 739.5 L1302.1 733.7 L1316.1 728.5 L1329.5 723.6 L1341.3 719.2 L1351.2 715.6 L1360.6 712.3 L1370.6 708.8 L1382.4 704.8 L1396.6 700.0 L1412.4 694.9 L1428.9 689.5 L1445.7 684.2 L1462.1 679.4 L1478.5 675.0 L1495.2 670.8 L1511.7 666.8 L1527.2 663.0 L1541.2 659.4 L1553.3 656.0 L1564.0 652.8 L1573.9 649.7 L1583.7 646.6 L1594.0 643.4 L1604.8 640.2 L1615.8 636.9 L1626.7 633.7 L1637.5 630.5 L1648.1 627.4 L1657.5 624.7 L1666.0 622.2 L1674.7 619.6 L1685.1 616.8 L1698.3 613.4 L1716.8 608.8 L1739.6 603.3 L1763.2 597.7 L1784.0 592.8 L1798.4 589.3 L1900 500 L1900 200 L-100 200 L-100 1300 L200 1300 Z" fill="rgb(162,162,162)"/>
<path d="M198.2 1193.0 L180.4 1158.3 L154.9 1120.7 L177.6 1117.2 L195.3 1114.6 L216.0 1111.4 L237.4 1107.6 L257.7 1103.2 L276.9 1098.0 L296.5 1092.0 L316.4 1085.5 L336.4 1078.8 L356.4 1072.3 L376.3 1066.1 L396.1 1059.9 L416.0 1053.7 L435.8 1047.5 L455.7 1041.3 L475.8 1035.0 L496.1 1028.6 L516.3 1022.3 L536.0 1016.1 L554.8 1010.1 L572.2 1004.6 L588.5 999.4 L604.3 994.3 L620.6 989.0 L638.0 983.3 L656.8 977.3 L676.5 971.0 L696.7 964.5 L717.0 957.8 L737.1 950.9 L756.8 943.8 L776.6 936.5 L796.4 928.9 L816.2 921.3 L836.0 913.5 L855.8 905.5 L875.6 897.4 L895.4 889.1 L915.3 880.8 L935.1 872.5 L955.2 864.2 L975.6 855.7 L995.8 847.3 L1015.5 839.1 L1034.3 831.4 L1051.2 824.4 L1066.4 818.1 L1081.5 812.0 L1098.1 805.5 L1117.6 798.1 L1141.8 789.3 L1169.4 779.4 L1198.2 769.2 L1225.6 759.4 L1249.3 750.9 L1268.9 743.6 L1286.0 737.2 L1301.2 731.4 L1315.2 726.1 L1328.6 721.2 L1340.4 716.8 L1350.4 713.2 L1359.7 709.8 L1369.7 706.3 L1381.6 702.3 L1395.8 697.5 L1411.5 692.3 L1428.1 686.9 L1444.9 681.6 L1461.4 676.8 L1477.8 672.3 L1494.6 668.1 L1511.0 664.1 L1526.5 660.4 L1540.5 656.7 L1552.6 653.3 L1563.2 650.1 L1573.1 647.0 L1582.9 644.0 L1593.2 640.8 L1604.0 637.6 L1615.0 634.3 L1625.9 631.1 L1636.7 627.9 L1647.3 624.8 L1656.7 622.0 L1665.2 619.5 L1674.0 617.0 L1684.4 614.1 L1697.6 610.7 L1716.1 606.1 L1739.0 600.6 L1762.6 595.0 L1783.4 590.1 L1797.8 586.7 L1900 500 L1900 200 L-100 200 L-100 1300 L200 1300 Z" fill="rgb(175,175,175)"/>
<path d="M196.6 1193.8 L178.8 1159.3 L151.7 1119.3 L177.3 1115.3 L195.0 1112.7 L215.6 1109.5 L237.1 1105.7 L257.2 1101.4 L276.3 1096.3 L295.9 1090.2 L315.8 1083.7 L335.9 1077.0 L355.9 1070.6 L375.8 1064.4 L395.6 1058.2 L415.4 1052.0 L435.3 1045.8 L455.1 1039.5 L475.2 1033.3 L495.6 1026.9 L515.8 1020.5 L535.5 1014.3 L554.3 1008.4 L571.7 1002.8 L587.9 997.6 L603.8 992.5 L620.0 987.2 L637.4 981.6 L656.3 975.5 L676.0 969.2 L696.2 962.7 L716.4 956.0 L736.4 949.1 L756.2 942.0 L776.0 934.7 L795.7 927.2 L815.5 919.5 L835.3 911.8 L855.1 903.8 L874.9 895.7 L894.7 887.4 L914.5 879.1 L934.4 870.8 L954.5 862.5 L974.9 854.0 L995.1 845.6 L1014.8 837.4 L1033.6 829.6 L1050.4 822.7 L1065.6 816.4 L1080.8 810.2 L1097.4 803.6 L1117.0 796.2 L1141.1 787.4 L1168.8 777.5 L1197.5 767.1 L1224.9 757.3 L1248.5 748.7 L1268.1 741.4 L1285.1 734.9 L1300.3 729.1 L1314.4 723.8 L1327.7 718.8 L1339.6 714.4 L1349.5 710.8 L1358.9 707.4 L1368.9 703.9 L1380.8 699.8 L1395.0 695.0 L1410.7 689.8 L1427.3 684.3 L1444.2 679.0 L1460.7 674.1 L1477.1 669.7 L1493.9 665.5 L1510.4 661.5 L1525.9 657.7 L1539.8 654.1 L1551.8 650.7 L1562.4 647.5 L1572.3 644.4 L1582.1 641.3 L1592.4 638.2 L1603.3 634.9 L1614.2 631.7 L1625.1 628.4 L1636.0 625.2 L1646.5 622.2 L1656.0 619.4 L1664.4 616.9 L1673.2 614.3 L1683.7 611.5 L1697.0 608.0 L1715.5 603.5 L1738.3 598.0 L1761.9 592.3 L1782.7 587.4 L1797.1 584.0 L1900 500 L1900 200 L-100 200 L-100 1300 L200 1300 Z" fill="rgb(187,187,187)"/>
<path d="M194.9 1194.7 L177.2 1160.2 L148.5 1117.9 L177.1 1113.5 L194.8 1110.9 L215.3 1107.7 L236.7 1103.9 L256.8 1099.6 L275.8 1094.5 L295.4 1088.5 L315.2 1082.0 L335.3 1075.3 L355.3 1068.8 L375.2 1062.6 L395.0 1056.4 L414.9 1050.2 L434.7 1044.0 L454.6 1037.8 L474.7 1031.5 L495.0 1025.1 L515.2 1018.8 L534.9 1012.6 L553.7 1006.6 L571.1 1001.1 L587.3 995.8 L603.2 990.7 L619.5 985.5 L636.9 979.8 L655.7 973.7 L675.4 967.5 L695.6 961.0 L715.9 954.3 L735.8 947.4 L755.6 940.3 L775.3 933.0 L795.1 925.5 L814.9 917.8 L834.6 910.0 L854.4 902.1 L874.2 893.9 L894.0 885.7 L913.8 877.4 L933.7 869.1 L953.8 860.8 L974.1 852.3 L994.4 843.9 L1014.1 835.7 L1032.9 827.9 L1049.7 820.9 L1064.9 814.6 L1080.1 808.4 L1096.7 801.8 L1116.3 794.4 L1140.5 785.6 L1168.1 775.5 L1196.8 765.1 L1224.1 755.2 L1247.8 746.5 L1267.3 739.1 L1284.3 732.6 L1299.5 726.7 L1313.5 721.4 L1326.9 716.4 L1338.7 712.0 L1348.7 708.4 L1358.0 704.9 L1368.1 701.4 L1380.0 697.3 L1394.2 692.5 L1409.9 687.2 L1426.5 681.7 L1443.4 676.4 L1459.9 671.5 L1476.4 667.0 L1493.3 662.8 L1509.7 658.8 L1525.2 655.0 L1539.1 651.4 L1551.0 648.1 L1561.6 644.9 L1571.5 641.8 L1581.3 638.7 L1591.6 635.6 L1602.5 632.3 L1613.4 629.0 L1624.4 625.8 L1635.2 622.6 L1645.8 619.5 L1655.2 616.8 L1663.7 614.3 L1672.5 611.7 L1683.0 608.8 L1696.3 605.4 L1714.8 600.8 L1737.7 595.3 L1761.3 589.7 L1782.1 584.7 L1796.5 581.3 L1900 500 L1900 200 L-100 200 L-100 1300 L200 1300 Z" fill="rgb(198,198,198)"/>
<path d="M193.3 1195.5 L175.6 1161.2 L145.4 1116.5 L176.8 1111.7 L194.5 1109.1 L215.0 1105.9 L236.4 1102.1 L256.4 1097.8 L275.3 1092.7 L294.8 1086.7 L314.7 1080.2 L334.7 1073.5 L354.8 1067.0 L374.7 1060.8 L394.5 1054.6 L414.3 1048.4 L434.2 1042.2 L454.0 1036.0 L474.1 1029.7 L494.4 1023.3 L514.7 1017.0 L534.4 1010.8 L553.2 1004.8 L570.5 999.3 L586.8 994.1 L602.6 989.0 L618.9 983.7 L636.3 978.0 L655.1 972.0 L674.9 965.7 L695.0 959.2 L715.3 952.5 L735.2 945.6 L754.9 938.6 L774.7 931.3 L794.4 923.8 L814.2 916.1 L834.0 908.3 L853.7 900.4 L873.5 892.2 L893.3 884.0 L913.1 875.7 L933.0 867.4 L953.1 859.1 L973.4 850.6 L993.7 842.2 L1013.4 834.0 L1032.2 826.2 L1049.0 819.2 L1064.2 812.8 L1079.3 806.6 L1096.0 800.0 L1115.6 792.5 L1139.8 783.7 L1167.4 773.6 L1196.1 763.1 L1223.4 753.1 L1247.0 744.3 L1266.4 736.9 L1283.4 730.3 L1298.6 724.4 L1312.6 719.1 L1326.0 714.1 L1337.9 709.6 L1347.8 705.9 L1357.2 702.5 L1367.2 698.9 L1379.1 694.8 L1393.4 690.0 L1409.1 684.7 L1425.7 679.2 L1442.6 673.7 L1459.2 668.8 L1475.8 664.4 L1492.6 660.1 L1509.1 656.1 L1524.5 652.4 L1538.3 648.8 L1550.3 645.4 L1560.8 642.3 L1570.6 639.2 L1580.5 636.1 L1590.8 632.9 L1601.7 629.7 L1612.6 626.4 L1623.6 623.2 L1634.4 620.0 L1645.0 616.9 L1654.4 614.1 L1662.9 611.6 L1671.8 609.1 L1682.3 606.2 L1695.6 602.7 L1714.2 598.1 L1737.1 592.6 L1760.7 587.0 L1781.5 582.1 L1795.9 578.7 L1900 500 L1900 200 L-100 200 L-100 1300 L200 1300 Z" fill="rgb(207,207,207)"/>
<path d="M191.7 1196.4 L174.0 1162.1 L142.2 1115.1 L176.5 1109.8 L194.2 1107.2 L214.7 1104.0 L236.0 1100.3 L255.9 1096.0 L274.8 1090.9 L294.2 1084.9 L314.1 1078.4 L334.1 1071.7 L354.2 1065.3 L374.1 1059.0 L393.9 1052.9 L413.8 1046.7 L433.6 1040.5 L453.4 1034.2 L473.5 1028.0 L493.9 1021.6 L514.1 1015.2 L533.8 1009.0 L552.6 1003.1 L570.0 997.5 L586.2 992.3 L602.1 987.2 L618.3 981.9 L635.7 976.3 L654.6 970.2 L674.3 963.9 L694.4 957.4 L714.7 950.8 L734.6 943.9 L754.3 936.8 L774.0 929.5 L793.7 922.0 L813.5 914.4 L833.3 906.6 L853.0 898.7 L872.8 890.5 L892.6 882.3 L912.4 873.9 L932.3 865.7 L952.4 857.3 L972.7 848.9 L993.0 840.5 L1012.7 832.2 L1031.5 824.4 L1048.3 817.4 L1063.5 811.1 L1078.6 804.8 L1095.3 798.2 L1114.9 790.7 L1139.2 781.8 L1166.8 771.6 L1195.4 761.0 L1222.7 751.0 L1246.2 742.1 L1265.6 734.7 L1282.6 728.0 L1297.8 722.1 L1311.8 716.7 L1325.2 711.7 L1337.0 707.2 L1346.9 703.5 L1356.3 700.1 L1366.4 696.5 L1378.3 692.3 L1392.5 687.5 L1408.3 682.1 L1424.9 676.6 L1441.8 671.1 L1458.4 666.2 L1475.1 661.7 L1492.0 657.5 L1508.4 653.5 L1523.8 649.7 L1537.6 646.1 L1549.5 642.8 L1560.0 639.6 L1569.8 636.6 L1579.7 633.5 L1590.0 630.3 L1600.9 627.1 L1611.8 623.8 L1622.8 620.5 L1633.7 617.3 L1644.2 614.3 L1653.6 611.5 L1662.1 609.0 L1671.0 606.4 L1681.6 603.5 L1695.0 600.1 L1713.5 595.5 L1736.4 590.0 L1760.0 584.3 L1780.8 579.4 L1795.2 576.0 L1900 500 L1900 200 L-100 200 L-100 1300 L200 1300 Z" fill="rgb(216,216,216)"/>
<path d="M190.0 1197.2 L172.4 1163.0 L139.0 1113.7 L176.2 1108.0 L193.9 1105.4 L214.4 1102.2 L235.7 1098.5 L255.5 1094.2 L274.3 1089.1 L293.7 1083.2 L313.5 1076.7 L333.6 1070.0 L353.6 1063.5 L373.5 1057.3 L393.4 1051.1 L413.2 1044.9 L433.1 1038.7 L452.9 1032.5 L473.0 1026.2 L493.3 1019.8 L513.5 1013.5 L533.2 1007.3 L552.0 1001.3 L569.4 995.8 L585.6 990.6 L601.5 985.4 L617.7 980.2 L635.2 974.5 L654.0 968.5 L673.7 962.2 L693.9 955.7 L714.1 949.0 L734.0 942.2 L753.6 935.1 L773.4 927.8 L793.1 920.3 L812.8 912.6 L832.6 904.9 L852.3 896.9 L872.1 888.8 L891.8 880.5 L911.7 872.2 L931.6 864.0 L951.7 855.6 L972.0 847.2 L992.3 838.8 L1012.0 830.5 L1030.7 822.7 L1047.6 815.6 L1062.7 809.3 L1077.9 803.0 L1094.6 796.4 L1114.3 788.8 L1138.5 780.0 L1166.1 769.7 L1194.7 759.0 L1221.9 748.8 L1245.4 739.9 L1264.8 732.4 L1281.8 725.8 L1296.9 719.8 L1310.9 714.4 L1324.3 709.3 L1336.1 704.9 L1346.1 701.1 L1355.5 697.6 L1365.6 694.0 L1377.5 689.8 L1391.7 684.9 L1407.4 679.6 L1424.1 674.0 L1441.0 668.5 L1457.7 663.6 L1474.4 659.1 L1491.3 654.8 L1507.8 650.8 L1523.2 647.1 L1536.9 643.5 L1548.7 640.2 L1559.2 637.0 L1569.0 634.0 L1578.8 630.9 L1589.2 627.7 L1600.1 624.4 L1611.1 621.2 L1622.0 617.9 L1632.9 614.7 L1643.5 611.6 L1652.9 608.9 L1661.3 606.4 L1670.3 603.8 L1680.9 600.9 L1694.3 597.4 L1712.9 592.8 L1735.8 587.3 L1759.4 581.7 L1780.2 576.7 L1794.6 573.3 L1900 500 L1900 200 L-100 200 L-100 1300 L200 1300 Z" fill="rgb(224,224,224)"/>
<path d="M188.4 1198.0 L170.8 1164.0 L135.8 1112.3 L176.0 1106.2 L193.7 1103.6 L214.1 1100.4 L235.3 1096.7 L255.1 1092.4 L273.8 1087.4 L293.1 1081.4 L312.9 1074.9 L333.0 1068.2 L353.1 1061.7 L373.0 1055.5 L392.8 1049.3 L412.7 1043.1 L432.5 1036.9 L452.3 1030.7 L472.4 1024.4 L492.8 1018.0 L513.0 1011.7 L532.7 1005.5 L551.5 999.5 L568.9 994.0 L585.1 988.8 L600.9 983.7 L617.2 978.4 L634.6 972.8 L653.4 966.7 L673.2 960.4 L693.3 953.9 L713.5 947.2 L733.4 940.4 L753.0 933.4 L772.7 926.1 L792.4 918.6 L812.2 910.9 L831.9 903.2 L851.6 895.2 L871.3 887.1 L891.1 878.8 L911.0 870.5 L930.9 862.3 L951.0 853.9 L971.3 845.5 L991.5 837.1 L1011.2 828.8 L1030.0 820.9 L1046.8 813.9 L1062.0 807.5 L1077.2 801.2 L1093.9 794.6 L1113.6 787.0 L1137.8 778.1 L1165.4 767.7 L1194.0 757.0 L1221.2 746.7 L1244.7 737.8 L1264.0 730.2 L1280.9 723.5 L1296.1 717.5 L1310.1 712.0 L1323.4 706.9 L1335.3 702.5 L1345.2 698.7 L1354.6 695.2 L1364.7 691.5 L1376.7 687.3 L1390.9 682.4 L1406.6 677.0 L1423.3 671.4 L1440.2 665.9 L1456.9 660.9 L1473.7 656.4 L1490.6 652.1 L1507.1 648.2 L1522.5 644.4 L1536.2 640.8 L1548.0 637.5 L1558.4 634.4 L1568.2 631.3 L1578.0 628.2 L1588.5 625.1 L1599.3 621.8 L1610.3 618.5 L1621.2 615.3 L1632.1 612.1 L1642.7 609.0 L1652.1 606.2 L1660.6 603.7 L1669.5 601.1 L1680.1 598.2 L1693.6 594.7 L1712.2 590.1 L1735.1 584.6 L1758.8 579.0 L1779.6 574.1 L1794.0 570.6 L1900 500 L1900 200 L-100 200 L-100 1300 L200 1300 Z" fill="rgb(230,230,230)"/>
<path d="M186.7 1198.9 L169.2 1164.9 L132.7 1111.0 L175.7 1104.3 L193.4 1101.7 L213.8 1098.6 L234.9 1094.8 L254.6 1090.6 L273.3 1085.6 L292.6 1079.7 L312.3 1073.2 L332.4 1066.5 L352.5 1060.0 L372.4 1053.7 L392.3 1047.6 L412.1 1041.4 L432.0 1035.2 L451.8 1028.9 L471.9 1022.7 L492.2 1016.3 L512.4 1009.9 L532.1 1003.7 L550.9 997.8 L568.3 992.2 L584.5 987.0 L600.4 981.9 L616.6 976.7 L634.0 971.0 L652.9 964.9 L672.6 958.6 L692.7 952.2 L712.9 945.5 L732.8 938.7 L752.4 931.6 L772.1 924.3 L791.8 916.8 L811.5 909.2 L831.2 901.4 L850.9 893.5 L870.6 885.4 L890.4 877.1 L910.3 868.8 L930.1 860.5 L950.2 852.2 L970.6 843.8 L990.8 835.4 L1010.5 827.0 L1029.3 819.2 L1046.1 812.1 L1061.3 805.7 L1076.5 799.4 L1093.2 792.7 L1112.9 785.2 L1137.2 776.2 L1164.7 765.8 L1193.3 754.9 L1220.5 744.6 L1243.9 735.6 L1263.2 728.0 L1280.1 721.2 L1295.2 715.1 L1309.2 709.7 L1322.6 704.6 L1334.4 700.1 L1344.4 696.3 L1353.8 692.8 L1363.9 689.1 L1375.9 684.9 L1390.1 679.9 L1405.8 674.5 L1422.4 668.8 L1439.4 663.2 L1456.2 658.3 L1473.0 653.7 L1490.0 649.5 L1506.5 645.5 L1521.8 641.7 L1535.5 638.2 L1547.2 634.9 L1557.6 631.8 L1567.4 628.7 L1577.2 625.6 L1587.7 622.4 L1598.5 619.2 L1609.5 615.9 L1620.5 612.6 L1631.3 609.4 L1641.9 606.4 L1651.3 603.6 L1659.8 601.1 L1668.8 598.5 L1679.4 595.6 L1692.9 592.1 L1711.6 587.5 L1734.5 582.0 L1758.1 576.3 L1778.9 571.4 L1793.3 568.0 L1900 500 L1900 200 L-100 200 L-100 1300 L200 1300 Z" fill="rgb(236,236,236)"/>
<path d="M185.1 1199.7 L167.7 1165.9 L129.5 1109.6 L175.4 1102.5 L193.1 1099.9 L213.5 1096.7 L234.6 1093.0 L254.2 1088.8 L272.8 1083.8 L292.0 1077.9 L311.7 1071.4 L331.8 1064.7 L352.0 1058.2 L371.9 1052.0 L391.7 1045.8 L411.6 1039.6 L431.4 1033.4 L451.2 1027.2 L471.3 1020.9 L491.7 1014.5 L511.9 1008.2 L531.6 1002.0 L550.4 996.0 L567.7 990.5 L583.9 985.3 L599.8 980.2 L616.0 974.9 L633.5 969.2 L652.3 963.2 L672.0 956.9 L692.1 950.4 L712.3 943.7 L732.1 936.9 L751.7 929.9 L771.4 922.6 L791.1 915.1 L810.8 907.5 L830.5 899.7 L850.2 891.8 L869.9 883.7 L889.7 875.4 L909.6 867.1 L929.4 858.8 L949.5 850.5 L969.9 842.1 L990.1 833.7 L1009.8 825.3 L1028.6 817.4 L1045.4 810.4 L1060.6 804.0 L1075.8 797.6 L1092.5 790.9 L1112.2 783.3 L1136.5 774.4 L1164.1 763.9 L1192.6 752.9 L1219.7 742.5 L1243.1 733.4 L1262.4 725.7 L1279.3 718.9 L1294.3 712.8 L1308.3 707.3 L1321.7 702.2 L1333.5 697.7 L1343.5 693.9 L1352.9 690.3 L1363.1 686.6 L1375.0 682.4 L1389.2 677.4 L1405.0 671.9 L1421.6 666.2 L1438.6 660.6 L1455.4 655.6 L1472.3 651.1 L1489.3 646.8 L1505.8 642.8 L1521.2 639.1 L1534.8 635.6 L1546.4 632.3 L1556.8 629.1 L1566.6 626.1 L1576.4 623.0 L1586.9 619.8 L1597.8 616.5 L1608.7 613.3 L1619.7 610.0 L1630.6 606.8 L1641.2 603.7 L1650.5 601.0 L1659.0 598.5 L1668.0 595.9 L1678.7 592.9 L1692.3 589.4 L1710.9 584.8 L1733.9 579.3 L1757.5 573.7 L1778.3 568.7 L1792.7 565.3 L1900 500 L1900 200 L-100 200 L-100 1300 L200 1300 Z" fill="rgb(240,240,240)"/>
<path d="M183.4 1200.6 L166.1 1166.8 L126.3 1108.2 L175.1 1100.7 L192.8 1098.1 L213.2 1094.9 L234.2 1091.2 L253.8 1087.0 L272.2 1082.0 L291.4 1076.1 L311.2 1069.6 L331.2 1063.0 L351.4 1056.4 L371.3 1050.2 L391.2 1044.0 L411.0 1037.8 L430.8 1031.6 L450.7 1025.4 L470.8 1019.1 L491.1 1012.7 L511.3 1006.4 L531.0 1000.2 L549.8 994.2 L567.2 988.7 L583.4 983.5 L599.2 978.4 L615.5 973.1 L632.9 967.5 L651.8 961.4 L671.5 955.1 L691.6 948.6 L711.7 942.0 L731.5 935.2 L751.1 928.1 L770.8 920.9 L790.4 913.4 L810.1 905.7 L829.8 898.0 L849.5 890.1 L869.2 882.0 L889.0 873.7 L908.8 865.4 L928.7 857.1 L948.8 848.8 L969.2 840.3 L989.4 831.9 L1009.1 823.6 L1027.9 815.7 L1044.7 808.6 L1059.9 802.2 L1075.1 795.9 L1091.8 789.1 L1111.6 781.5 L1135.9 772.5 L1163.4 761.9 L1191.9 750.9 L1219.0 740.4 L1242.4 731.2 L1261.6 723.5 L1278.4 716.6 L1293.5 710.5 L1307.5 705.0 L1320.9 699.8 L1332.7 695.3 L1342.6 691.4 L1352.1 687.9 L1362.2 684.1 L1374.2 679.9 L1388.4 674.9 L1404.1 669.4 L1420.8 663.7 L1437.8 658.0 L1454.7 653.0 L1471.6 648.4 L1488.7 644.2 L1505.2 640.2 L1520.5 636.4 L1534.0 632.9 L1545.7 629.6 L1556.0 626.5 L1565.7 623.5 L1575.6 620.4 L1586.1 617.2 L1597.0 613.9 L1607.9 610.6 L1618.9 607.4 L1629.8 604.2 L1640.4 601.1 L1649.8 598.3 L1658.3 595.8 L1667.3 593.2 L1678.0 590.3 L1691.6 586.8 L1710.3 582.1 L1733.2 576.6 L1756.9 571.0 L1777.7 566.1 L1792.1 562.6 L1900 500 L1900 200 L-100 200 L-100 1300 L200 1300 Z" fill="rgb(244,244,244)"/>
<path d="M181.8 1201.4 L164.5 1167.8 L123.1 1106.8 L174.9 1098.8 L192.6 1096.3 L212.9 1093.1 L233.9 1089.4 L253.3 1085.2 L271.7 1080.2 L290.9 1074.4 L310.6 1067.9 L330.7 1061.2 L350.8 1054.7 L370.8 1048.4 L390.6 1042.3 L410.5 1036.1 L430.3 1029.9 L450.1 1023.6 L470.2 1017.4 L490.6 1011.0 L510.8 1004.6 L530.5 998.4 L549.2 992.5 L566.6 986.9 L582.8 981.7 L598.7 976.6 L614.9 971.4 L632.3 965.7 L651.2 959.6 L670.9 953.4 L691.0 946.9 L711.1 940.2 L730.9 933.4 L750.5 926.4 L770.1 919.1 L789.8 911.7 L809.5 904.0 L829.2 896.3 L848.8 888.4 L868.5 880.3 L888.3 872.0 L908.1 863.7 L928.0 855.4 L948.1 847.1 L968.5 838.6 L988.7 830.2 L1008.4 821.9 L1027.2 813.9 L1044.0 806.9 L1059.1 800.4 L1074.4 794.1 L1091.1 787.3 L1110.9 779.6 L1135.2 770.6 L1162.7 760.0 L1191.2 748.8 L1218.3 738.3 L1241.6 729.0 L1260.8 721.3 L1277.6 714.3 L1292.6 708.2 L1306.6 702.6 L1320.0 697.4 L1331.8 692.9 L1341.8 689.0 L1351.2 685.4 L1361.4 681.7 L1373.4 677.4 L1387.6 672.3 L1403.3 666.8 L1420.0 661.1 L1437.0 655.4 L1454.0 650.4 L1470.9 645.8 L1488.0 641.5 L1504.5 637.5 L1519.8 633.8 L1533.3 630.3 L1544.9 627.0 L1555.2 623.9 L1564.9 620.9 L1574.8 617.8 L1585.3 614.6 L1596.2 611.3 L1607.1 608.0 L1618.1 604.8 L1629.0 601.5 L1639.6 598.5 L1649.0 595.7 L1657.5 593.2 L1666.6 590.6 L1677.3 587.6 L1690.9 584.1 L1709.6 579.5 L1732.6 574.0 L1756.2 568.3 L1777.0 563.4 L1791.4 560.0 L1900 500 L1900 200 L-100 200 L-100 1300 L200 1300 Z" fill="rgb(247,247,247)"/>
<path d="M180.1 1202.3 L162.9 1168.7 L120.0 1105.4 L174.6 1097.0 L192.3 1094.4 L212.6 1091.3 L233.5 1087.6 L252.9 1083.4 L271.2 1078.5 L290.3 1072.6 L310.0 1066.1 L330.1 1059.4 L350.3 1052.9 L370.2 1046.7 L390.1 1040.5 L409.9 1034.3 L429.7 1028.1 L449.6 1021.9 L469.7 1015.6 L490.0 1009.2 L510.2 1002.9 L529.9 996.7 L548.7 990.7 L566.0 985.2 L582.2 980.0 L598.1 974.9 L614.3 969.6 L631.7 964.0 L650.6 957.9 L670.3 951.6 L690.4 945.1 L710.5 938.5 L730.3 931.7 L749.8 924.7 L769.5 917.4 L789.1 909.9 L808.8 902.3 L828.5 894.6 L848.1 886.7 L867.8 878.6 L887.6 870.3 L907.4 862.0 L927.3 853.7 L947.4 845.4 L967.8 836.9 L988.0 828.5 L1007.7 820.1 L1026.5 812.2 L1043.2 805.1 L1058.4 798.6 L1073.7 792.3 L1090.4 785.5 L1110.2 777.8 L1134.5 768.7 L1162.0 758.0 L1190.5 746.8 L1217.5 736.1 L1240.8 726.9 L1260.0 719.0 L1276.7 712.1 L1291.8 705.8 L1305.8 700.3 L1319.1 695.0 L1331.0 690.5 L1340.9 686.6 L1350.4 683.0 L1360.6 679.2 L1372.6 674.9 L1386.8 669.8 L1402.5 664.3 L1419.2 658.5 L1436.3 652.8 L1453.2 647.7 L1470.2 643.1 L1487.4 638.8 L1503.9 634.8 L1519.2 631.1 L1532.6 627.6 L1544.1 624.4 L1554.4 621.3 L1564.1 618.3 L1574.0 615.1 L1584.5 611.9 L1595.4 608.7 L1606.4 605.4 L1617.3 602.1 L1628.3 598.9 L1638.9 595.8 L1648.2 593.1 L1656.7 590.6 L1665.8 587.9 L1676.6 585.0 L1690.2 581.4 L1709.0 576.8 L1731.9 571.3 L1755.6 565.7 L1776.4 560.7 L1790.8 557.3 L1900 500 L1900 200 L-100 200 L-100 1300 L200 1300 Z" fill="rgb(249,249,249)"/>
<path d="M178.5 1203.1 L161.3 1169.7 L116.8 1104.0 L174.3 1095.2 L192.0 1092.6 L212.3 1089.4 L233.2 1085.7 L252.4 1081.6 L270.7 1076.7 L289.8 1070.8 L309.4 1064.4 L329.5 1057.7 L349.7 1051.1 L369.7 1044.9 L389.5 1038.7 L409.4 1032.5 L429.2 1026.3 L449.0 1020.1 L469.1 1013.8 L489.5 1007.4 L509.7 1001.1 L529.3 994.9 L548.1 989.0 L565.5 983.4 L581.7 978.2 L597.5 973.1 L613.7 967.9 L631.2 962.2 L650.1 956.1 L669.8 949.8 L689.9 943.4 L709.9 936.7 L729.7 929.9 L749.2 922.9 L768.8 915.7 L788.4 908.2 L808.1 900.6 L827.8 892.8 L847.4 884.9 L867.1 876.8 L886.8 868.6 L906.7 860.3 L926.6 852.0 L946.7 843.7 L967.0 835.2 L987.3 826.8 L1007.0 818.4 L1025.7 810.5 L1042.5 803.3 L1057.7 796.9 L1072.9 790.5 L1089.7 783.7 L1109.5 776.0 L1133.9 766.9 L1161.4 756.1 L1189.8 744.8 L1216.8 734.0 L1240.0 724.7 L1259.2 716.8 L1275.9 709.8 L1290.9 703.5 L1304.9 697.9 L1318.3 692.7 L1330.1 688.1 L1340.0 684.2 L1349.5 680.6 L1359.7 676.8 L1371.7 672.4 L1386.0 667.3 L1401.7 661.7 L1418.4 655.9 L1435.5 650.1 L1452.5 645.1 L1469.5 640.5 L1486.7 636.2 L1503.2 632.2 L1518.5 628.4 L1531.9 625.0 L1543.4 621.7 L1553.6 618.7 L1563.3 615.6 L1573.2 612.5 L1583.7 609.3 L1594.6 606.0 L1605.6 602.8 L1616.6 599.5 L1627.5 596.3 L1638.1 593.2 L1647.5 590.4 L1656.0 587.9 L1665.1 585.3 L1675.9 582.3 L1689.6 578.8 L1708.3 574.2 L1731.3 568.6 L1755.0 563.0 L1775.8 558.1 L1790.2 554.6 L1900 500 L1900 200 L-100 200 L-100 1300 L200 1300 Z" fill="rgb(251,251,251)"/>
<path d="M176.8 1204.0 L159.7 1170.6 L113.6 1102.7 L174.0 1093.4 L191.7 1090.8 L212.0 1087.6 L232.8 1083.9 L252.0 1079.8 L270.2 1074.9 L289.2 1069.1 L308.8 1062.6 L328.9 1055.9 L349.2 1049.4 L369.1 1043.1 L389.0 1036.9 L408.8 1030.8 L428.6 1024.6 L448.5 1018.3 L468.6 1012.1 L488.9 1005.7 L509.1 999.3 L528.8 993.1 L547.5 987.2 L564.9 981.7 L581.1 976.5 L596.9 971.4 L613.2 966.1 L630.6 960.4 L649.5 954.4 L669.2 948.1 L689.3 941.6 L709.3 935.0 L729.1 928.2 L748.6 921.2 L768.2 913.9 L787.8 906.5 L807.4 898.8 L827.1 891.1 L846.7 883.2 L866.4 875.1 L886.1 866.9 L906.0 858.6 L925.9 850.3 L946.0 842.0 L966.3 833.5 L986.6 825.1 L1006.3 816.7 L1025.0 808.7 L1041.8 801.6 L1057.0 795.1 L1072.2 788.7 L1089.0 781.9 L1108.9 774.1 L1133.2 765.0 L1160.7 754.1 L1189.1 742.7 L1216.1 731.9 L1239.3 722.5 L1258.4 714.5 L1275.1 707.5 L1290.1 701.2 L1304.0 695.6 L1317.4 690.3 L1329.2 685.7 L1339.2 681.8 L1348.7 678.1 L1358.9 674.3 L1370.9 669.9 L1385.1 664.8 L1400.9 659.2 L1417.6 653.3 L1434.7 647.5 L1451.7 642.4 L1468.9 637.8 L1486.1 633.5 L1502.6 629.5 L1517.8 625.8 L1531.2 622.3 L1542.6 619.1 L1552.8 616.0 L1562.5 613.0 L1572.3 609.9 L1582.9 606.7 L1593.8 603.4 L1604.8 600.1 L1615.8 596.9 L1626.7 593.6 L1637.3 590.6 L1646.7 587.8 L1655.2 585.3 L1664.3 582.7 L1675.2 579.7 L1688.9 576.1 L1707.7 571.5 L1730.7 566.0 L1754.3 560.3 L1775.1 555.4 L1789.5 552.0 L1900 500 L1900 200 L-100 200 L-100 1300 L200 1300 Z" fill="rgb(252,252,252)"/>
<path d="M175.2 1204.8 L158.1 1171.6 L110.4 1101.3 L173.8 1091.5 L191.4 1088.9 L211.7 1085.8 L232.5 1082.1 L251.6 1078.0 L269.7 1073.1 L288.6 1067.3 L308.3 1060.9 L328.4 1054.2 L348.6 1047.6 L368.6 1041.4 L388.4 1035.2 L408.3 1029.0 L428.1 1022.8 L447.9 1016.6 L468.0 1010.3 L488.3 1003.9 L508.6 997.6 L528.2 991.4 L547.0 985.4 L564.3 979.9 L580.5 974.7 L596.4 969.6 L612.6 964.3 L630.0 958.7 L648.9 952.6 L668.6 946.3 L688.7 939.8 L708.8 933.2 L728.5 926.4 L747.9 919.4 L767.5 912.2 L787.1 904.7 L806.8 897.1 L826.4 889.4 L846.0 881.5 L865.7 873.4 L885.4 865.2 L905.3 856.9 L925.2 848.6 L945.3 840.2 L965.6 831.8 L985.9 823.4 L1005.6 815.0 L1024.3 807.0 L1041.1 799.8 L1056.2 793.3 L1071.5 786.9 L1088.3 780.0 L1108.2 772.3 L1132.6 763.1 L1160.0 752.2 L1188.4 740.7 L1215.3 729.8 L1238.5 720.3 L1257.6 712.3 L1274.2 705.2 L1289.2 698.9 L1303.2 693.2 L1316.6 687.9 L1328.4 683.3 L1338.3 679.4 L1347.8 675.7 L1358.1 671.8 L1370.1 667.4 L1384.3 662.3 L1400.0 656.6 L1416.8 650.7 L1433.9 644.9 L1451.0 639.8 L1468.2 635.2 L1485.4 630.8 L1501.9 626.8 L1517.1 623.1 L1530.5 619.7 L1541.8 616.5 L1552.0 613.4 L1561.6 610.4 L1571.5 607.3 L1582.1 604.1 L1593.0 600.8 L1604.0 597.5 L1615.0 594.2 L1625.9 591.0 L1636.6 587.9 L1645.9 585.2 L1654.4 582.7 L1663.6 580.0 L1674.5 577.0 L1688.2 573.5 L1707.0 568.8 L1730.0 563.3 L1753.7 557.7 L1774.5 552.7 L1788.9 549.3 L1900 500 L1900 200 L-100 200 L-100 1300 L200 1300 Z" fill="rgb(253,253,253)"/>
<path d="M235.0 1162.0 L260.4 1200.3 L278.0 1215.2 L268.4 1221.8 L283.7 1211.1 L302.0 1198.4 L321.8 1185.1 L341.4 1172.6 L360.8 1161.0 L380.9 1149.4 L401.5 1137.9 L422.2 1126.7 L442.7 1115.9 L463.1 1105.5 L483.8 1095.2 L504.4 1085.3 L524.5 1076.0 L543.8 1067.3 L561.6 1059.6 L578.4 1052.7 L594.8 1046.3 L611.6 1040.1 L629.6 1033.8 L649.0 1027.4 L669.2 1021.3 L689.5 1015.2 L709.7 1009.2 L729.4 1003.1 L749.6 996.6 L770.5 989.6 L791.2 982.7 L810.8 976.1 L828.1 970.3 L842.9 965.3 L855.7 961.0 L867.2 957.2 L877.7 953.6 L887.6 950.3 L895.5 947.6 L901.6 945.4 L908.1 943.1 L916.6 940.4 L928.6 936.9 L945.1 932.2 L965.1 926.6 L986.9 920.6 L1008.8 914.7 L1028.8 909.4 L1046.1 905.1 L1061.6 901.4 L1076.9 898.0 L1093.4 894.3 L1112.9 889.9 L1136.2 884.6 L1162.2 878.8 L1189.7 872.7 L1217.7 866.4 L1244.8 860.4 L1271.7 854.4 L1299.0 848.2 L1326.1 841.8 L1352.4 835.6 L1377.2 829.8 L1400.0 824.6 L1421.3 819.7 L1441.8 815.1 L1461.9 809.9 L1482.5 804.8 L1503.6 799.5 L1524.8 794.2 L1546.1 789.1 L1567.6 784.1 L1589.1 779.4 L1610.9 774.9 L1632.8 770.6 L1654.4 766.7 L1675.0 763.0 L1694.2 759.7 L1711.4 756.8 L1727.1 754.2 L1742.2 751.9 L1757.8 749.6 L1774.9 747.4 L1794.2 745.7 L1814.7 744.2 L1835.6 742.8 L1856.0 741.4 L1875.0 740.2 L1892.2 739.0 L1908.3 737.9 L1924.1 736.9 L1940.5 736.0 L1958.2 735.2 L1976.8 734.4 L1995.7 733.8 L2015.3 733.2 L2036.3 732.6 L2059.1 732.0 L2086.8 731.3 L2119.0 730.4 L2151.4 729.6 L2179.5 728.9 L2199.2 728.4 L2300 900 L2300 1600 L100 1600 L100 1150 Z" fill="rgb(2,2,2)"/>
<path d="M233.4 1163.1 L259.0 1201.5 L277.9 1217.5 L269.5 1223.4 L284.8 1212.6 L303.1 1199.9 L322.8 1186.7 L342.3 1174.2 L361.7 1162.6 L381.8 1151.0 L402.4 1139.5 L423.1 1128.3 L443.5 1117.6 L464.0 1107.1 L484.6 1096.9 L505.2 1087.0 L525.3 1077.7 L544.5 1069.0 L562.4 1061.3 L579.1 1054.4 L595.5 1048.1 L612.2 1041.9 L630.2 1035.6 L649.6 1029.2 L669.7 1023.0 L690.1 1017.0 L710.2 1011.0 L730.0 1004.9 L750.2 998.3 L771.1 991.4 L791.8 984.4 L811.4 977.9 L828.7 972.0 L843.5 967.1 L856.3 962.8 L867.8 958.9 L878.3 955.4 L888.2 952.1 L896.2 949.3 L902.2 947.2 L908.7 944.9 L917.2 942.2 L929.1 938.7 L945.6 934.0 L965.6 928.4 L987.4 922.4 L1009.2 916.5 L1029.3 911.2 L1046.5 906.9 L1062.0 903.3 L1077.3 899.8 L1093.8 896.1 L1113.3 891.7 L1136.6 886.5 L1162.6 880.7 L1190.1 874.5 L1218.1 868.3 L1245.2 862.2 L1272.1 856.2 L1299.4 850.0 L1326.5 843.7 L1352.8 837.5 L1377.6 831.8 L1400.4 826.6 L1421.7 821.7 L1442.2 817.1 L1462.4 812.0 L1483.0 806.9 L1504.0 801.7 L1525.2 796.5 L1546.6 791.4 L1568.0 786.4 L1589.5 781.8 L1611.2 777.4 L1633.2 773.2 L1654.7 769.3 L1675.4 765.7 L1694.6 762.4 L1711.8 759.6 L1727.4 757.1 L1742.5 754.8 L1758.1 752.6 L1775.2 750.4 L1794.4 748.8 L1814.9 747.3 L1835.8 745.8 L1856.2 744.5 L1875.2 743.2 L1892.4 742.1 L1908.4 741.0 L1924.2 740.0 L1940.6 739.1 L1958.3 738.3 L1976.9 737.6 L1995.7 736.9 L2015.4 736.4 L2036.3 735.8 L2059.2 735.2 L2086.9 734.5 L2119.1 733.7 L2151.4 732.9 L2179.6 732.2 L2199.2 731.7 L2300 900 L2300 1600 L100 1600 L100 1150 Z" fill="rgb(3,3,3)"/>
<path d="M231.9 1164.1 L257.6 1202.7 L277.8 1219.8 L270.5 1224.9 L285.8 1214.1 L304.1 1201.5 L323.8 1188.2 L343.3 1175.8 L362.6 1164.2 L382.7 1152.6 L403.3 1141.2 L424.0 1130.0 L444.4 1119.2 L464.8 1108.8 L485.5 1098.5 L506.0 1088.7 L526.1 1079.3 L545.2 1070.7 L563.1 1063.0 L579.8 1056.2 L596.2 1049.8 L612.9 1043.6 L630.8 1037.3 L650.1 1031.0 L670.3 1024.8 L690.6 1018.8 L710.8 1012.8 L730.5 1006.6 L750.7 1000.1 L771.7 993.1 L792.4 986.2 L811.9 979.6 L829.3 973.8 L844.0 968.8 L856.9 964.5 L868.3 960.7 L878.9 957.1 L888.8 953.8 L896.8 951.1 L902.9 948.9 L909.3 946.7 L917.7 944.0 L929.6 940.4 L946.1 935.7 L966.1 930.2 L987.9 924.2 L1009.7 918.3 L1029.7 913.0 L1047.0 908.8 L1062.5 905.1 L1077.7 901.6 L1094.2 897.9 L1113.7 893.6 L1137.0 888.3 L1163.0 882.5 L1190.5 876.4 L1218.5 870.1 L1245.7 864.1 L1272.5 858.1 L1299.8 851.9 L1327.0 845.6 L1353.2 839.4 L1378.0 833.7 L1400.8 828.5 L1422.1 823.7 L1442.6 819.1 L1462.8 814.1 L1483.4 809.0 L1504.5 803.9 L1525.7 798.7 L1547.0 793.7 L1568.4 788.8 L1589.9 784.2 L1611.6 779.9 L1633.5 775.8 L1655.1 772.0 L1675.7 768.4 L1694.9 765.2 L1712.1 762.4 L1727.7 759.9 L1742.8 757.7 L1758.3 755.6 L1775.4 753.4 L1794.6 751.8 L1815.1 750.3 L1836.0 748.9 L1856.4 747.5 L1875.4 746.3 L1892.5 745.2 L1908.6 744.1 L1924.4 743.2 L1940.7 742.3 L1958.4 741.4 L1977.0 740.7 L1995.8 740.1 L2015.4 739.5 L2036.4 739.0 L2059.2 738.4 L2086.9 737.7 L2119.1 736.9 L2151.5 736.1 L2179.6 735.5 L2199.3 735.0 L2300 900 L2300 1600 L100 1600 L100 1150 Z" fill="rgb(4,4,4)"/>
<path d="M230.3 1165.1 L256.3 1204.0 L277.7 1222.2 L271.6 1226.4 L286.9 1215.7 L305.1 1203.0 L324.8 1189.8 L344.3 1177.4 L363.6 1165.8 L383.6 1154.2 L404.2 1142.8 L424.8 1131.6 L445.2 1120.9 L465.6 1110.4 L486.3 1100.2 L506.8 1090.3 L526.8 1081.0 L546.0 1072.4 L563.8 1064.8 L580.5 1057.9 L596.8 1051.5 L613.5 1045.4 L631.3 1039.1 L650.7 1032.7 L670.8 1026.6 L691.1 1020.5 L711.3 1014.5 L731.1 1008.4 L751.3 1001.8 L772.3 994.9 L793.0 987.9 L812.5 981.4 L829.9 975.5 L844.6 970.6 L857.5 966.3 L868.9 962.4 L879.5 958.9 L889.4 955.6 L897.4 952.8 L903.5 950.7 L909.9 948.4 L918.3 945.7 L930.1 942.2 L946.6 937.5 L966.6 931.9 L988.4 926.0 L1010.2 920.1 L1030.2 914.9 L1047.4 910.6 L1062.9 906.9 L1078.1 903.5 L1094.6 899.8 L1114.1 895.4 L1137.4 890.2 L1163.4 884.4 L1190.9 878.2 L1218.9 872.0 L1246.1 866.0 L1272.9 860.0 L1300.3 853.8 L1327.4 847.5 L1353.6 841.4 L1378.4 835.7 L1401.2 830.5 L1422.5 825.7 L1443.0 821.1 L1463.2 816.2 L1483.8 811.1 L1504.9 806.1 L1526.1 801.0 L1547.4 796.0 L1568.8 791.2 L1590.3 786.7 L1612.0 782.4 L1633.9 778.4 L1655.4 774.6 L1676.0 771.1 L1695.2 768.0 L1712.4 765.2 L1728.0 762.8 L1743.1 760.6 L1758.6 758.5 L1775.6 756.4 L1794.8 754.8 L1815.3 753.3 L1836.2 751.9 L1856.5 750.6 L1875.5 749.4 L1892.7 748.3 L1908.8 747.2 L1924.5 746.3 L1940.9 745.4 L1958.5 744.6 L1977.0 743.9 L1995.9 743.3 L2015.5 742.7 L2036.4 742.2 L2059.3 741.6 L2087.0 740.9 L2119.2 740.1 L2151.5 739.4 L2179.7 738.7 L2199.3 738.3 L2300 900 L2300 1600 L100 1600 L100 1150 Z" fill="rgb(6,6,6)"/>
<path d="M228.8 1166.1 L254.9 1205.2 L277.5 1224.5 L272.6 1227.9 L287.9 1217.2 L306.2 1204.5 L325.8 1191.3 L345.3 1178.9 L364.5 1167.4 L384.5 1155.9 L405.1 1144.4 L425.7 1133.2 L446.1 1122.5 L466.5 1112.1 L487.1 1101.9 L507.6 1092.0 L527.6 1082.7 L546.7 1074.1 L564.5 1066.5 L581.2 1059.6 L597.5 1053.3 L614.1 1047.1 L631.9 1040.8 L651.3 1034.5 L671.3 1028.3 L691.6 1022.3 L711.8 1016.3 L731.6 1010.2 L751.9 1003.6 L772.9 996.6 L793.6 989.7 L813.1 983.1 L830.5 977.3 L845.2 972.4 L858.1 968.0 L869.5 964.2 L880.0 960.6 L890.0 957.3 L898.0 954.6 L904.1 952.4 L910.5 950.2 L918.8 947.5 L930.6 944.0 L947.1 939.3 L967.1 933.7 L988.9 927.8 L1010.7 921.9 L1030.7 916.7 L1047.8 912.4 L1063.3 908.7 L1078.5 905.3 L1095.1 901.6 L1114.5 897.2 L1137.8 892.0 L1163.8 886.2 L1191.3 880.1 L1219.3 873.9 L1246.5 867.8 L1273.3 861.8 L1300.7 855.7 L1327.8 849.4 L1354.1 843.3 L1378.8 837.6 L1401.6 832.5 L1422.9 827.7 L1443.4 823.1 L1463.6 818.2 L1484.3 813.3 L1505.3 808.3 L1526.5 803.2 L1547.9 798.3 L1569.3 793.6 L1590.7 789.1 L1612.3 784.9 L1634.2 780.9 L1655.7 777.2 L1676.3 773.8 L1695.5 770.7 L1712.7 768.0 L1728.3 765.6 L1743.4 763.5 L1758.8 761.5 L1775.9 759.4 L1795.0 757.8 L1815.5 756.4 L1836.3 755.0 L1856.7 753.7 L1875.7 752.5 L1892.9 751.4 L1908.9 750.3 L1924.7 749.4 L1941.0 748.5 L1958.6 747.7 L1977.1 747.0 L1995.9 746.4 L2015.5 745.9 L2036.5 745.4 L2059.3 744.8 L2087.0 744.1 L2119.2 743.4 L2151.6 742.6 L2179.7 742.0 L2199.4 741.6 L2300 900 L2300 1600 L100 1600 L100 1150 Z" fill="rgb(8,8,8)"/>
<path d="M227.3 1167.2 L253.5 1206.5 L277.4 1226.8 L273.7 1229.4 L289.0 1218.7 L307.2 1206.1 L326.8 1192.9 L346.2 1180.5 L365.4 1169.0 L385.5 1157.5 L406.0 1146.0 L426.6 1134.9 L446.9 1124.2 L467.3 1113.7 L487.9 1103.5 L508.4 1093.7 L528.4 1084.4 L547.5 1075.8 L565.2 1068.2 L581.9 1061.3 L598.1 1055.0 L614.7 1048.9 L632.5 1042.6 L651.8 1036.3 L671.9 1030.1 L692.2 1024.1 L712.4 1018.1 L732.2 1011.9 L752.5 1005.4 L773.5 998.4 L794.2 991.4 L813.7 984.9 L831.0 979.1 L845.8 974.1 L858.7 969.8 L870.1 965.9 L880.6 962.4 L890.6 959.1 L898.6 956.3 L904.7 954.1 L911.1 951.9 L919.4 949.3 L931.1 945.8 L947.6 941.1 L967.6 935.5 L989.4 929.6 L1011.1 923.7 L1031.1 918.5 L1048.3 914.2 L1063.7 910.5 L1078.9 907.1 L1095.5 903.4 L1114.9 899.1 L1138.2 893.8 L1164.2 888.0 L1191.8 881.9 L1219.7 875.7 L1246.9 869.7 L1273.8 863.7 L1301.1 857.6 L1328.2 851.3 L1354.5 845.2 L1379.3 839.6 L1402.1 834.4 L1423.4 829.7 L1443.8 825.2 L1464.0 820.3 L1484.7 815.4 L1505.8 810.4 L1527.0 805.5 L1548.3 800.6 L1569.7 795.9 L1591.1 791.5 L1612.7 787.4 L1634.6 783.5 L1656.1 779.9 L1676.7 776.5 L1695.9 773.5 L1713.0 770.8 L1728.6 768.5 L1743.6 766.4 L1759.1 764.4 L1776.1 762.4 L1795.2 760.9 L1815.7 759.4 L1836.5 758.0 L1856.9 756.7 L1875.9 755.5 L1893.1 754.4 L1909.1 753.4 L1924.8 752.5 L1941.1 751.6 L1958.7 750.8 L1977.2 750.1 L1996.0 749.6 L2015.6 749.1 L2036.5 748.6 L2059.4 748.0 L2087.1 747.3 L2119.3 746.6 L2151.6 745.9 L2179.8 745.3 L2199.4 744.9 L2300 900 L2300 1600 L100 1600 L100 1150 Z" fill="rgb(11,11,11)"/>
<path d="M225.7 1168.2 L252.1 1207.7 L277.3 1229.2 L274.8 1230.9 L290.0 1220.2 L308.3 1207.6 L327.9 1194.4 L347.2 1182.1 L366.4 1170.6 L386.4 1159.1 L406.9 1147.7 L427.5 1136.5 L447.8 1125.8 L468.1 1115.4 L488.7 1105.2 L509.2 1095.4 L529.1 1086.1 L548.2 1077.5 L565.9 1069.9 L582.5 1063.0 L598.8 1056.7 L615.4 1050.6 L633.1 1044.3 L652.4 1038.0 L672.4 1031.9 L692.7 1025.9 L712.9 1019.9 L732.8 1013.7 L753.0 1007.1 L774.0 1000.2 L794.8 993.2 L814.3 986.6 L831.6 980.8 L846.4 975.9 L859.3 971.5 L870.7 967.7 L881.2 964.2 L891.2 960.8 L899.2 958.1 L905.3 955.9 L911.7 953.7 L919.9 951.0 L931.7 947.6 L948.1 942.9 L968.1 937.3 L989.8 931.3 L1011.6 925.5 L1031.6 920.3 L1048.7 916.0 L1064.1 912.4 L1079.3 908.9 L1095.9 905.3 L1115.3 900.9 L1138.6 895.7 L1164.6 889.9 L1192.2 883.8 L1220.1 877.6 L1247.3 871.6 L1274.2 865.6 L1301.5 859.4 L1328.6 853.2 L1354.9 847.2 L1379.7 841.5 L1402.5 836.4 L1423.8 831.7 L1444.3 827.2 L1464.5 822.4 L1485.1 817.5 L1506.2 812.6 L1527.4 807.7 L1548.7 802.9 L1570.1 798.3 L1591.5 794.0 L1613.1 789.9 L1634.9 786.1 L1656.4 782.5 L1677.0 779.2 L1696.2 776.3 L1713.4 773.6 L1728.9 771.4 L1743.9 769.3 L1759.4 767.4 L1776.3 765.4 L1795.4 763.9 L1815.9 762.4 L1836.7 761.1 L1857.0 759.8 L1876.0 758.6 L1893.2 757.5 L1909.3 756.5 L1925.0 755.6 L1941.2 754.7 L1958.8 754.0 L1977.3 753.3 L1996.0 752.7 L2015.6 752.2 L2036.6 751.7 L2059.4 751.2 L2087.1 750.6 L2119.3 749.9 L2151.6 749.2 L2179.8 748.6 L2199.5 748.2 L2300 900 L2300 1600 L100 1600 L100 1150 Z" fill="rgb(15,15,15)"/>
<path d="M224.2 1169.2 L250.7 1209.0 L277.2 1231.5 L275.8 1232.5 L291.1 1221.7 L309.3 1209.1 L328.9 1196.0 L348.2 1183.7 L367.3 1172.2 L387.3 1160.7 L407.8 1149.3 L428.3 1138.1 L448.6 1127.4 L469.0 1117.1 L489.5 1106.9 L510.0 1097.0 L529.9 1087.8 L549.0 1079.2 L566.7 1071.6 L583.2 1064.8 L599.4 1058.4 L616.0 1052.3 L633.7 1046.1 L652.9 1039.8 L672.9 1033.7 L693.2 1027.6 L713.5 1021.6 L733.3 1015.5 L753.6 1008.9 L774.6 1001.9 L795.4 995.0 L814.9 988.4 L832.2 982.6 L847.0 977.6 L859.9 973.3 L871.3 969.4 L881.8 965.9 L891.8 962.6 L899.8 959.8 L905.9 957.6 L912.3 955.4 L920.5 952.8 L932.2 949.3 L948.6 944.7 L968.6 939.1 L990.3 933.1 L1012.1 927.3 L1032.0 922.1 L1049.1 917.8 L1064.5 914.2 L1079.7 910.8 L1096.3 907.1 L1115.7 902.7 L1139.0 897.5 L1165.0 891.7 L1192.6 885.6 L1220.5 879.4 L1247.7 873.4 L1274.6 867.4 L1301.9 861.3 L1329.0 855.1 L1355.3 849.1 L1380.1 843.5 L1402.9 838.4 L1424.2 833.7 L1444.7 829.2 L1464.9 824.4 L1485.5 819.7 L1506.6 814.8 L1527.9 810.0 L1549.2 805.2 L1570.5 800.7 L1591.9 796.4 L1613.5 792.4 L1635.3 788.7 L1656.8 785.2 L1677.3 781.9 L1696.5 779.0 L1713.7 776.4 L1729.2 774.2 L1744.2 772.2 L1759.6 770.3 L1776.6 768.4 L1795.6 766.9 L1816.0 765.5 L1836.9 764.1 L1857.2 762.9 L1876.2 761.7 L1893.4 760.6 L1909.4 759.6 L1925.1 758.7 L1941.4 757.9 L1958.9 757.1 L1977.4 756.4 L1996.1 755.9 L2015.7 755.4 L2036.6 754.9 L2059.5 754.4 L2087.2 753.8 L2119.4 753.1 L2151.7 752.4 L2179.8 751.8 L2199.5 751.4 L2300 900 L2300 1600 L100 1600 L100 1150 Z" fill="rgb(19,19,19)"/>
<path d="M222.6 1170.2 L249.3 1210.2 L277.1 1233.8 L276.9 1234.0 L292.2 1223.3 L310.4 1210.6 L329.9 1197.5 L349.2 1185.2 L368.3 1173.8 L388.2 1162.3 L408.6 1150.9 L429.2 1139.8 L449.5 1129.1 L469.8 1118.7 L490.3 1108.5 L510.8 1098.7 L530.7 1089.4 L549.7 1080.9 L567.4 1073.3 L583.9 1066.5 L600.1 1060.2 L616.6 1054.1 L634.3 1047.8 L653.5 1041.5 L673.5 1035.4 L693.7 1029.4 L714.0 1023.4 L733.9 1017.2 L754.2 1010.6 L775.2 1003.7 L796.0 996.7 L815.5 990.1 L832.8 984.3 L847.6 979.4 L860.4 975.1 L871.9 971.2 L882.4 967.7 L892.4 964.3 L900.4 961.6 L906.6 959.4 L912.8 957.2 L921.0 954.6 L932.7 951.1 L949.1 946.4 L969.1 940.9 L990.8 934.9 L1012.5 929.1 L1032.5 923.9 L1049.6 919.6 L1064.9 916.0 L1080.1 912.6 L1096.7 908.9 L1116.1 904.6 L1139.4 899.4 L1165.4 893.6 L1193.0 887.5 L1220.9 881.3 L1248.1 875.3 L1275.0 869.3 L1302.3 863.2 L1329.5 857.0 L1355.7 851.0 L1380.5 845.4 L1403.3 840.4 L1424.6 835.7 L1445.1 831.2 L1465.3 826.5 L1486.0 821.8 L1507.1 817.0 L1528.3 812.2 L1549.6 807.5 L1570.9 803.0 L1592.3 798.8 L1613.8 794.9 L1635.6 791.2 L1657.1 787.8 L1677.7 784.6 L1696.9 781.8 L1714.0 779.3 L1729.5 777.1 L1744.5 775.1 L1759.9 773.3 L1776.8 771.4 L1795.8 769.9 L1816.2 768.5 L1837.0 767.2 L1857.4 765.9 L1876.4 764.8 L1893.6 763.7 L1909.6 762.7 L1925.3 761.8 L1941.5 761.0 L1959.0 760.2 L1977.4 759.6 L1996.2 759.1 L2015.7 758.6 L2036.7 758.1 L2059.5 757.6 L2087.2 757.0 L2119.4 756.3 L2151.7 755.7 L2179.9 755.1 L2199.6 754.7 L2300 900 L2300 1600 L100 1600 L100 1150 Z" fill="rgb(25,25,25)"/>
<path d="M221.1 1171.3 L247.9 1211.4 L277.0 1236.2 L277.9 1235.5 L293.2 1224.8 L311.4 1212.2 L330.9 1199.1 L350.1 1186.8 L369.2 1175.4 L389.1 1163.9 L409.5 1152.5 L430.1 1141.4 L450.3 1130.7 L470.6 1120.4 L491.1 1110.2 L511.5 1100.4 L531.4 1091.1 L550.5 1082.6 L568.1 1075.0 L584.6 1068.2 L600.8 1061.9 L617.3 1055.8 L634.9 1049.6 L654.1 1043.3 L674.0 1037.2 L694.3 1031.2 L714.5 1025.2 L734.4 1019.0 L754.8 1012.4 L775.8 1005.4 L796.6 998.5 L816.1 991.9 L833.4 986.1 L848.2 981.1 L861.0 976.8 L872.5 973.0 L883.0 969.4 L893.0 966.1 L901.0 963.3 L907.2 961.1 L913.4 958.9 L921.5 956.3 L933.2 952.9 L949.6 948.2 L969.6 942.7 L991.3 936.7 L1013.0 930.9 L1032.9 925.7 L1050.0 921.4 L1065.4 917.8 L1080.5 914.4 L1097.1 910.8 L1116.5 906.4 L1139.8 901.2 L1165.8 895.4 L1193.4 889.3 L1221.3 883.2 L1248.5 877.2 L1275.4 871.2 L1302.7 865.1 L1329.9 858.9 L1356.2 853.0 L1380.9 847.4 L1403.7 842.3 L1425.0 837.7 L1445.5 833.2 L1465.7 828.6 L1486.4 823.9 L1507.5 819.2 L1528.7 814.5 L1550.0 809.8 L1571.4 805.4 L1592.6 801.3 L1614.2 797.4 L1636.0 793.8 L1657.4 790.4 L1678.0 787.3 L1697.2 784.5 L1714.3 782.1 L1729.8 780.0 L1744.8 778.0 L1760.1 776.3 L1777.0 774.4 L1796.0 772.9 L1816.4 771.5 L1837.2 770.2 L1857.5 769.0 L1876.6 767.8 L1893.7 766.8 L1909.8 765.8 L1925.4 764.9 L1941.6 764.1 L1959.1 763.4 L1977.5 762.7 L1996.2 762.2 L2015.8 761.7 L2036.7 761.3 L2059.6 760.8 L2087.3 760.2 L2119.5 759.6 L2151.8 758.9 L2179.9 758.4 L2199.6 758.0 L2300 900 L2300 1600 L100 1600 L100 1150 Z" fill="rgb(31,31,31)"/>
<path d="M219.6 1172.3 L246.5 1212.7 L276.9 1238.5 L279.0 1237.0 L294.3 1226.3 L312.4 1213.7 L331.9 1200.6 L351.1 1188.4 L370.1 1177.0 L390.0 1165.5 L410.4 1154.2 L430.9 1143.0 L451.2 1132.4 L471.4 1122.0 L492.0 1111.8 L512.3 1102.1 L532.2 1092.8 L551.2 1084.3 L568.8 1076.7 L585.3 1069.9 L601.4 1063.6 L617.9 1057.6 L635.5 1051.4 L654.6 1045.1 L674.5 1039.0 L694.8 1033.0 L715.1 1026.9 L735.0 1020.8 L755.3 1014.2 L776.4 1007.2 L797.1 1000.2 L816.7 993.6 L834.0 987.8 L848.8 982.9 L861.6 978.6 L873.1 974.7 L883.6 971.2 L893.6 967.8 L901.7 965.1 L907.8 962.9 L914.0 960.7 L922.1 958.1 L933.7 954.7 L950.1 950.0 L970.1 944.4 L991.8 938.5 L1013.5 932.7 L1033.4 927.5 L1050.4 923.3 L1065.8 919.7 L1080.9 916.2 L1097.5 912.6 L1117.0 908.2 L1140.2 903.0 L1166.2 897.3 L1193.8 891.2 L1221.7 885.0 L1248.9 879.0 L1275.8 873.1 L1303.2 867.0 L1330.3 860.8 L1356.6 854.9 L1381.4 849.4 L1404.2 844.3 L1425.5 839.6 L1445.9 835.2 L1466.1 830.6 L1486.8 826.0 L1507.9 821.4 L1529.2 816.7 L1550.5 812.2 L1571.8 807.8 L1593.0 803.7 L1614.6 799.9 L1636.3 796.4 L1657.8 793.1 L1678.3 790.1 L1697.5 787.3 L1714.7 784.9 L1730.1 782.8 L1745.0 781.0 L1760.4 779.2 L1777.3 777.4 L1796.3 776.0 L1816.6 774.6 L1837.4 773.3 L1857.7 772.1 L1876.7 770.9 L1893.9 769.9 L1909.9 768.9 L1925.6 768.0 L1941.8 767.2 L1959.2 766.5 L1977.6 765.9 L1996.3 765.4 L2015.8 764.9 L2036.8 764.5 L2059.6 764.0 L2087.3 763.4 L2119.5 762.8 L2151.8 762.2 L2180.0 761.7 L2199.7 761.3 L2300 900 L2300 1600 L100 1600 L100 1150 Z" fill="rgb(39,39,39)"/>
<path d="M218.0 1173.3 L245.1 1213.9 L276.7 1240.8 L280.0 1238.5 L295.3 1227.8 L313.5 1215.2 L332.9 1202.2 L352.1 1190.0 L371.1 1178.6 L390.9 1167.1 L411.3 1155.8 L431.8 1144.7 L452.1 1134.0 L472.3 1123.7 L492.8 1113.5 L513.1 1103.7 L533.0 1094.5 L552.0 1086.0 L569.5 1078.4 L586.0 1071.6 L602.1 1065.4 L618.5 1059.3 L636.1 1053.1 L655.2 1046.8 L675.1 1040.8 L695.3 1034.7 L715.6 1028.7 L735.6 1022.5 L755.9 1015.9 L777.0 1008.9 L797.7 1002.0 L817.3 995.4 L834.6 989.6 L849.3 984.6 L862.2 980.3 L873.7 976.5 L884.2 972.9 L894.1 969.6 L902.3 966.8 L908.4 964.6 L914.6 962.5 L922.6 959.9 L934.2 956.4 L950.6 951.8 L970.6 946.2 L992.3 940.3 L1014.0 934.4 L1033.8 929.3 L1050.9 925.1 L1066.2 921.5 L1081.3 918.1 L1097.9 914.4 L1117.4 910.1 L1140.6 904.9 L1166.6 899.1 L1194.2 893.0 L1222.1 886.9 L1249.3 880.9 L1276.2 874.9 L1303.6 868.8 L1330.7 862.7 L1357.0 856.8 L1381.8 851.3 L1404.6 846.3 L1425.9 841.6 L1446.3 837.2 L1466.6 832.7 L1487.2 828.2 L1508.4 823.6 L1529.6 819.0 L1550.9 814.5 L1572.2 810.2 L1593.4 806.2 L1614.9 802.4 L1636.7 799.0 L1658.1 795.7 L1678.7 792.8 L1697.9 790.1 L1715.0 787.7 L1730.5 785.7 L1745.3 783.9 L1760.6 782.2 L1777.5 780.4 L1796.5 779.0 L1816.8 777.6 L1837.5 776.3 L1857.9 775.1 L1876.9 774.0 L1894.1 773.0 L1910.1 772.0 L1925.7 771.1 L1941.9 770.4 L1959.3 769.6 L1977.7 769.0 L1996.4 768.5 L2015.9 768.1 L2036.8 767.7 L2059.7 767.2 L2087.4 766.7 L2119.5 766.1 L2151.9 765.5 L2180.0 765.0 L2199.7 764.6 L2300 900 L2300 1600 L100 1600 L100 1150 Z" fill="rgb(48,48,48)"/>
<path d="M216.5 1174.4 L243.7 1215.2 L276.6 1243.2 L281.1 1240.1 L296.4 1229.3 L314.5 1216.8 L333.9 1203.7 L353.0 1191.5 L372.0 1180.2 L391.9 1168.7 L412.2 1157.4 L432.7 1146.3 L452.9 1135.7 L473.1 1125.3 L493.6 1115.2 L513.9 1105.4 L533.8 1096.2 L552.7 1087.7 L570.3 1080.1 L586.7 1073.4 L602.7 1067.1 L619.1 1061.0 L636.7 1054.9 L655.7 1048.6 L675.6 1042.5 L695.9 1036.5 L716.1 1030.5 L736.1 1024.3 L756.5 1017.7 L777.6 1010.7 L798.3 1003.7 L817.8 997.2 L835.2 991.3 L849.9 986.4 L862.8 982.1 L874.3 978.2 L884.8 974.7 L894.7 971.4 L902.9 968.6 L909.0 966.4 L915.2 964.2 L923.2 961.7 L934.8 958.2 L951.1 953.6 L971.0 948.0 L992.8 942.1 L1014.4 936.2 L1034.3 931.1 L1051.3 926.9 L1066.6 923.3 L1081.8 919.9 L1098.3 916.2 L1117.8 911.9 L1141.0 906.7 L1167.0 901.0 L1194.6 894.9 L1222.5 888.7 L1249.7 882.7 L1276.6 876.8 L1304.0 870.7 L1331.1 864.6 L1357.4 858.7 L1382.2 853.3 L1405.0 848.3 L1426.3 843.6 L1446.8 839.2 L1467.0 834.8 L1487.7 830.3 L1508.8 825.7 L1530.0 821.2 L1551.3 816.8 L1572.6 812.5 L1593.8 808.6 L1615.3 804.9 L1637.0 801.5 L1658.4 798.4 L1679.0 795.5 L1698.2 792.8 L1715.3 790.5 L1730.8 788.5 L1745.6 786.8 L1760.9 785.1 L1777.7 783.5 L1796.7 782.0 L1817.0 780.7 L1837.7 779.4 L1858.0 778.2 L1877.1 777.1 L1894.3 776.1 L1910.3 775.1 L1925.9 774.3 L1942.0 773.5 L1959.4 772.8 L1977.8 772.2 L1996.4 771.7 L2016.0 771.3 L2036.9 770.9 L2059.7 770.4 L2087.4 769.9 L2119.6 769.3 L2151.9 768.7 L2180.1 768.2 L2199.7 767.9 L2300 900 L2300 1600 L100 1600 L100 1150 Z" fill="rgb(57,57,57)"/>
<path d="M214.9 1175.4 L242.3 1216.4 L276.5 1245.5 L282.2 1241.6 L297.5 1230.8 L315.6 1218.3 L335.0 1205.3 L354.0 1193.1 L372.9 1181.8 L392.8 1170.4 L413.1 1159.0 L433.6 1147.9 L453.8 1137.3 L473.9 1127.0 L494.4 1116.8 L514.7 1107.1 L534.5 1097.9 L553.4 1089.4 L571.0 1081.8 L587.4 1075.1 L603.4 1068.8 L619.8 1062.8 L637.3 1056.6 L656.3 1050.4 L676.1 1044.3 L696.4 1038.3 L716.7 1032.3 L736.7 1026.1 L757.1 1019.4 L778.1 1012.5 L798.9 1005.5 L818.4 998.9 L835.8 993.1 L850.5 988.2 L863.4 983.8 L874.8 980.0 L885.3 976.4 L895.3 973.1 L903.5 970.3 L909.6 968.1 L915.8 966.0 L923.7 963.4 L935.3 960.0 L951.6 955.3 L971.5 949.8 L993.2 943.9 L1014.9 938.0 L1034.8 932.9 L1051.7 928.7 L1067.0 925.1 L1082.2 921.7 L1098.7 918.1 L1118.2 913.7 L1141.4 908.6 L1167.4 902.8 L1195.0 896.7 L1223.0 890.6 L1250.2 884.6 L1277.0 878.7 L1304.4 872.6 L1331.5 866.5 L1357.8 860.7 L1382.6 855.2 L1405.4 850.2 L1426.7 845.6 L1447.2 841.3 L1467.4 836.8 L1488.1 832.4 L1509.2 827.9 L1530.5 823.5 L1551.8 819.1 L1573.0 814.9 L1594.2 811.0 L1615.7 807.4 L1637.4 804.1 L1658.8 801.0 L1679.3 798.2 L1698.5 795.6 L1715.6 793.3 L1731.1 791.4 L1745.9 789.7 L1761.2 788.1 L1778.0 786.5 L1796.9 785.0 L1817.1 783.7 L1837.9 782.4 L1858.2 781.2 L1877.2 780.2 L1894.4 779.1 L1910.4 778.2 L1926.0 777.4 L1942.1 776.6 L1959.5 775.9 L1977.8 775.3 L1996.5 774.8 L2016.0 774.4 L2036.9 774.0 L2059.8 773.6 L2087.5 773.1 L2119.6 772.5 L2152.0 772.0 L2180.1 771.5 L2199.8 771.2 L2300 900 L2300 1600 L100 1600 L100 1150 Z" fill="rgb(68,68,68)"/>
<path d="M213.4 1176.4 L240.9 1217.7 L276.4 1247.8 L283.2 1243.1 L298.5 1232.4 L316.6 1219.8 L336.0 1206.8 L355.0 1194.7 L373.9 1183.4 L393.7 1172.0 L414.0 1160.6 L434.4 1149.6 L454.6 1138.9 L474.8 1128.6 L495.2 1118.5 L515.5 1108.8 L535.3 1099.5 L554.2 1091.1 L571.7 1083.5 L588.1 1076.8 L604.0 1070.6 L620.4 1064.5 L637.9 1058.4 L656.9 1052.1 L676.7 1046.1 L696.9 1040.1 L717.2 1034.0 L737.2 1027.8 L757.7 1021.2 L778.7 1014.2 L799.5 1007.2 L819.0 1000.7 L836.3 994.9 L851.1 989.9 L864.0 985.6 L875.4 981.7 L885.9 978.2 L895.9 974.9 L904.1 972.1 L910.3 969.9 L916.4 967.7 L924.3 965.2 L935.8 961.8 L952.1 957.1 L972.0 951.6 L993.7 945.6 L1015.4 939.8 L1035.2 934.7 L1052.2 930.5 L1067.4 926.9 L1082.6 923.5 L1099.1 919.9 L1118.6 915.6 L1141.8 910.4 L1167.8 904.7 L1195.4 898.6 L1223.4 892.5 L1250.6 886.5 L1277.5 880.5 L1304.8 874.5 L1332.0 868.4 L1358.3 862.6 L1383.0 857.2 L1405.8 852.2 L1427.1 847.6 L1447.6 843.3 L1467.8 838.9 L1488.5 834.6 L1509.7 830.1 L1530.9 825.7 L1552.2 821.4 L1573.5 817.3 L1594.6 813.5 L1616.0 810.0 L1637.7 806.7 L1659.1 803.6 L1679.7 800.9 L1698.8 798.3 L1716.0 796.1 L1731.4 794.3 L1746.2 792.6 L1761.4 791.0 L1778.2 789.5 L1797.1 788.1 L1817.3 786.7 L1838.1 785.5 L1858.4 784.3 L1877.4 783.2 L1894.6 782.2 L1910.6 781.3 L1926.2 780.5 L1942.3 779.7 L1959.6 779.0 L1977.9 778.5 L1996.6 778.0 L2016.1 777.6 L2037.0 777.2 L2059.8 776.8 L2087.5 776.3 L2119.7 775.8 L2152.0 775.2 L2180.2 774.8 L2199.8 774.5 L2300 900 L2300 1600 L100 1600 L100 1150 Z" fill="rgb(80,80,80)"/>
<path d="M211.9 1177.4 L239.5 1218.9 L276.3 1250.2 L284.3 1244.6 L299.6 1233.9 L317.7 1221.4 L337.0 1208.4 L356.0 1196.3 L374.8 1185.0 L394.6 1173.6 L414.9 1162.3 L435.3 1151.2 L455.5 1140.6 L475.6 1130.3 L496.0 1120.2 L516.3 1110.4 L536.1 1101.2 L554.9 1092.8 L572.4 1085.2 L588.7 1078.5 L604.7 1072.3 L621.0 1066.3 L638.5 1060.1 L657.4 1053.9 L677.2 1047.8 L697.4 1041.8 L717.8 1035.8 L737.8 1029.6 L758.2 1023.0 L779.3 1016.0 L800.1 1009.0 L819.6 1002.4 L836.9 996.6 L851.7 991.7 L864.6 987.3 L876.0 983.5 L886.5 980.0 L896.5 976.6 L904.7 973.8 L910.9 971.6 L917.0 969.5 L924.8 967.0 L936.3 963.6 L952.6 958.9 L972.5 953.4 L994.2 947.4 L1015.9 941.6 L1035.7 936.5 L1052.6 932.3 L1067.9 928.8 L1083.0 925.4 L1099.5 921.7 L1119.0 917.4 L1142.3 912.2 L1168.2 906.5 L1195.8 900.4 L1223.8 894.3 L1251.0 888.3 L1277.9 882.4 L1305.2 876.4 L1332.4 870.3 L1358.7 864.5 L1383.5 859.1 L1406.3 854.2 L1427.6 849.6 L1448.0 845.3 L1468.2 841.0 L1488.9 836.7 L1510.1 832.3 L1531.4 828.0 L1552.6 823.7 L1573.9 819.7 L1595.0 815.9 L1616.4 812.5 L1638.1 809.2 L1659.5 806.3 L1680.0 803.6 L1699.2 801.1 L1716.3 799.0 L1731.7 797.1 L1746.5 795.5 L1761.7 794.0 L1778.4 792.5 L1797.3 791.1 L1817.5 789.8 L1838.2 788.5 L1858.5 787.4 L1877.6 786.3 L1894.8 785.3 L1910.7 784.4 L1926.3 783.6 L1942.4 782.8 L1959.7 782.2 L1978.0 781.6 L1996.6 781.2 L2016.1 780.8 L2037.0 780.4 L2059.9 780.0 L2087.6 779.5 L2119.7 779.0 L2152.0 778.5 L2180.2 778.1 L2199.9 777.8 L2300 900 L2300 1600 L100 1600 L100 1150 Z" fill="rgb(93,93,93)"/>
<path d="M210.3 1178.5 L238.1 1220.1 L276.2 1252.5 L285.3 1246.1 L300.6 1235.4 L318.7 1222.9 L338.0 1209.9 L356.9 1197.8 L375.8 1186.6 L395.5 1175.2 L415.8 1163.9 L436.2 1152.8 L456.3 1142.2 L476.4 1131.9 L496.8 1121.8 L517.1 1112.1 L536.8 1102.9 L555.7 1094.5 L573.1 1086.9 L589.4 1080.2 L605.4 1074.0 L621.7 1068.0 L639.1 1061.9 L658.0 1055.7 L677.7 1049.6 L698.0 1043.6 L718.3 1037.6 L738.4 1031.4 L758.8 1024.7 L779.9 1017.7 L800.7 1010.8 L820.2 1004.2 L837.5 998.4 L852.3 993.4 L865.2 989.1 L876.6 985.2 L887.1 981.7 L897.1 978.4 L905.3 975.6 L911.5 973.3 L917.5 971.2 L925.4 968.7 L936.8 965.3 L953.1 960.7 L973.0 955.1 L994.7 949.2 L1016.3 943.4 L1036.1 938.3 L1053.0 934.1 L1068.3 930.6 L1083.4 927.2 L1099.9 923.6 L1119.4 919.2 L1142.7 914.1 L1168.7 908.4 L1196.2 902.3 L1224.2 896.2 L1251.4 890.2 L1278.3 884.3 L1305.6 878.2 L1332.8 872.2 L1359.1 866.5 L1383.9 861.1 L1406.7 856.2 L1428.0 851.6 L1448.4 847.3 L1468.7 843.1 L1489.4 838.8 L1510.5 834.5 L1531.8 830.2 L1553.1 826.0 L1574.3 822.0 L1595.4 818.3 L1616.8 815.0 L1638.4 811.8 L1659.8 808.9 L1680.3 806.3 L1699.5 803.9 L1716.6 801.8 L1732.0 800.0 L1746.7 798.4 L1761.9 796.9 L1778.7 795.5 L1797.5 794.1 L1817.7 792.8 L1838.4 791.6 L1858.7 790.4 L1877.7 789.4 L1894.9 788.4 L1910.9 787.5 L1926.5 786.7 L1942.5 786.0 L1959.8 785.3 L1978.1 784.8 L1996.7 784.3 L2016.2 783.9 L2037.1 783.6 L2059.9 783.2 L2087.6 782.7 L2119.8 782.2 L2152.1 781.8 L2180.3 781.4 L2199.9 781.1 L2300 900 L2300 1600 L100 1600 L100 1150 Z" fill="rgb(107,107,107)"/>
<path d="M208.8 1179.5 L236.7 1221.4 L276.1 1254.8 L286.4 1247.6 L301.7 1236.9 L319.8 1224.4 L339.0 1211.5 L357.9 1199.4 L376.7 1188.2 L396.4 1176.8 L416.7 1165.5 L437.1 1154.5 L457.2 1143.9 L477.3 1133.6 L497.6 1123.5 L517.9 1113.8 L537.6 1104.6 L556.4 1096.2 L573.8 1088.6 L590.1 1082.0 L606.0 1075.8 L622.3 1069.8 L639.7 1063.6 L658.5 1057.4 L678.3 1051.4 L698.5 1045.4 L718.8 1039.3 L738.9 1033.1 L759.4 1026.5 L780.5 1019.5 L801.3 1012.5 L820.8 1005.9 L838.1 1000.1 L852.9 995.2 L865.8 990.9 L877.2 987.0 L887.7 983.5 L897.7 980.1 L905.9 977.3 L912.1 975.1 L918.1 973.0 L925.9 970.5 L937.3 967.1 L953.6 962.5 L973.5 956.9 L995.2 951.0 L1016.8 945.2 L1036.6 940.1 L1053.5 935.9 L1068.7 932.4 L1083.8 929.0 L1100.3 925.4 L1119.8 921.1 L1143.1 915.9 L1169.1 910.2 L1196.6 904.2 L1224.6 898.0 L1251.8 892.1 L1278.7 886.2 L1306.1 880.1 L1333.2 874.1 L1359.5 868.4 L1384.3 863.0 L1407.1 858.1 L1428.4 853.6 L1448.9 849.3 L1469.1 845.1 L1489.8 840.9 L1511.0 836.7 L1532.2 832.4 L1553.5 828.3 L1574.7 824.4 L1595.8 820.8 L1617.1 817.5 L1638.8 814.4 L1660.1 811.6 L1680.7 809.0 L1699.8 806.6 L1716.9 804.6 L1732.3 802.8 L1747.0 801.3 L1762.2 799.9 L1778.9 798.5 L1797.7 797.1 L1817.9 795.8 L1838.6 794.6 L1858.9 793.5 L1877.9 792.5 L1895.1 791.5 L1911.1 790.6 L1926.6 789.8 L1942.7 789.1 L1959.9 788.4 L1978.2 787.9 L1996.8 787.5 L2016.2 787.1 L2037.1 786.8 L2060.0 786.4 L2087.7 786.0 L2119.8 785.5 L2152.1 785.0 L2180.3 784.6 L2200.0 784.4 L2300 900 L2300 1600 L100 1600 L100 1150 Z" fill="rgb(121,121,121)"/>
<path d="M207.2 1180.5 L235.3 1222.6 L275.9 1257.2 L287.5 1249.2 L302.8 1238.4 L320.8 1225.9 L340.0 1213.0 L358.9 1201.0 L377.6 1189.8 L397.3 1178.4 L417.6 1167.1 L437.9 1156.1 L458.0 1145.5 L478.1 1135.2 L498.5 1125.2 L518.7 1115.4 L538.4 1106.3 L557.2 1097.8 L574.6 1090.3 L590.8 1083.7 L606.7 1077.5 L622.9 1071.5 L640.3 1065.4 L659.1 1059.2 L678.8 1053.2 L699.0 1047.2 L719.4 1041.1 L739.5 1034.9 L760.0 1028.2 L781.1 1021.2 L801.9 1014.3 L821.4 1007.7 L838.7 1001.9 L853.5 996.9 L866.3 992.6 L877.8 988.7 L888.3 985.2 L898.3 981.9 L906.6 979.0 L912.7 976.8 L918.7 974.7 L926.5 972.3 L937.9 968.9 L954.1 964.3 L974.0 958.7 L995.7 952.8 L1017.3 947.0 L1037.0 941.9 L1053.9 937.8 L1069.1 934.2 L1084.2 930.8 L1100.7 927.2 L1120.2 922.9 L1143.5 917.8 L1169.5 912.0 L1197.0 906.0 L1225.0 899.9 L1252.2 893.9 L1279.1 888.0 L1306.5 882.0 L1333.6 876.0 L1359.9 870.3 L1384.7 865.0 L1407.5 860.1 L1428.8 855.6 L1449.3 851.3 L1469.5 847.2 L1490.2 843.1 L1511.4 838.9 L1532.7 834.7 L1553.9 830.6 L1575.1 826.8 L1596.2 823.2 L1617.5 820.0 L1639.1 817.0 L1660.5 814.2 L1681.0 811.7 L1700.2 809.4 L1717.2 807.4 L1732.6 805.7 L1747.3 804.2 L1762.4 802.9 L1779.1 801.5 L1797.9 800.2 L1818.1 798.9 L1838.8 797.7 L1859.1 796.6 L1878.1 795.5 L1895.3 794.6 L1911.2 793.7 L1926.8 792.9 L1942.8 792.2 L1960.1 791.6 L1978.2 791.0 L1996.8 790.6 L2016.3 790.3 L2037.2 790.0 L2060.0 789.6 L2087.7 789.2 L2119.9 788.7 L2152.2 788.3 L2180.3 787.9 L2200.0 787.6 L2300 900 L2300 1600 L100 1600 L100 1150 Z" fill="rgb(134,134,134)"/>
<path d="M205.7 1181.5 L233.9 1223.9 L275.8 1259.5 L288.5 1250.7 L303.8 1240.0 L321.8 1227.5 L341.0 1214.6 L359.9 1202.6 L378.6 1191.4 L398.2 1180.0 L418.5 1168.8 L438.8 1157.7 L458.9 1147.2 L478.9 1136.9 L499.3 1126.8 L519.5 1117.1 L539.1 1108.0 L557.9 1099.5 L575.3 1092.1 L591.5 1085.4 L607.3 1079.2 L623.5 1073.2 L640.9 1067.1 L659.7 1061.0 L679.3 1054.9 L699.5 1048.9 L719.9 1042.9 L740.0 1036.6 L760.5 1030.0 L781.7 1023.0 L802.5 1016.0 L822.0 1009.4 L839.3 1003.6 L854.1 998.7 L866.9 994.4 L878.4 990.5 L888.9 987.0 L898.9 983.6 L907.2 980.8 L913.3 978.6 L919.3 976.5 L927.0 974.0 L938.4 970.7 L954.6 966.0 L974.5 960.5 L996.1 954.6 L1017.7 948.8 L1037.5 943.7 L1054.3 939.6 L1069.5 936.0 L1084.6 932.7 L1101.1 929.1 L1120.6 924.8 L1143.9 919.6 L1169.9 913.9 L1197.4 907.9 L1225.4 901.7 L1252.6 895.8 L1279.5 889.9 L1306.9 883.9 L1334.0 878.0 L1360.3 872.2 L1385.1 866.9 L1408.0 862.1 L1429.3 857.6 L1449.7 853.3 L1469.9 849.3 L1490.6 845.2 L1511.9 841.1 L1533.1 836.9 L1554.4 832.9 L1575.5 829.1 L1596.6 825.7 L1617.9 822.5 L1639.5 819.5 L1660.8 816.8 L1681.3 814.4 L1700.5 812.1 L1717.6 810.2 L1732.9 808.6 L1747.6 807.1 L1762.7 805.8 L1779.3 804.5 L1798.1 803.2 L1818.3 801.9 L1838.9 800.7 L1859.2 799.6 L1878.3 798.6 L1895.5 797.7 L1911.4 796.8 L1926.9 796.0 L1942.9 795.3 L1960.2 794.7 L1978.3 794.2 L1996.9 793.8 L2016.3 793.5 L2037.2 793.1 L2060.1 792.8 L2087.8 792.4 L2119.9 792.0 L2152.2 791.5 L2180.4 791.2 L2200.1 790.9 L2300 900 L2300 1600 L100 1600 L100 1150 Z" fill="rgb(148,148,148)"/>
<path d="M204.1 1182.6 L232.5 1225.1 L275.7 1261.8 L289.6 1252.2 L304.9 1241.5 L322.9 1229.0 L342.1 1216.1 L360.8 1204.1 L379.5 1192.9 L399.2 1181.6 L419.3 1170.4 L439.7 1159.4 L459.7 1148.8 L479.8 1138.6 L500.1 1128.5 L520.3 1118.8 L539.9 1109.7 L558.7 1101.2 L576.0 1093.8 L592.2 1087.1 L608.0 1081.0 L624.2 1075.0 L641.5 1068.9 L660.2 1062.7 L679.9 1056.7 L700.1 1050.7 L720.4 1044.7 L740.6 1038.4 L761.1 1031.7 L782.2 1024.7 L803.0 1017.8 L822.6 1011.2 L839.9 1005.4 L854.6 1000.4 L867.5 996.1 L879.0 992.3 L889.5 988.7 L899.5 985.4 L907.8 982.5 L914.0 980.3 L919.9 978.3 L927.6 975.8 L938.9 972.4 L955.1 967.8 L975.0 962.3 L996.6 956.4 L1018.2 950.6 L1037.9 945.5 L1054.8 941.4 L1069.9 937.9 L1085.0 934.5 L1101.5 930.9 L1121.0 926.6 L1144.3 921.4 L1170.3 915.7 L1197.8 909.7 L1225.8 903.6 L1253.0 897.7 L1279.9 891.8 L1307.3 885.8 L1334.5 879.9 L1360.8 874.2 L1385.5 868.9 L1408.4 864.1 L1429.7 859.6 L1450.1 855.4 L1470.4 851.3 L1491.1 847.3 L1512.3 843.2 L1533.6 839.2 L1554.8 835.2 L1576.0 831.5 L1597.0 828.1 L1618.3 825.0 L1639.8 822.1 L1661.1 819.5 L1681.7 817.1 L1700.8 814.9 L1717.9 813.0 L1733.2 811.4 L1747.9 810.0 L1763.0 808.8 L1779.6 807.5 L1798.3 806.2 L1818.4 805.0 L1839.1 803.8 L1859.4 802.7 L1878.4 801.7 L1895.6 800.8 L1911.6 799.9 L1927.1 799.1 L1943.0 798.4 L1960.3 797.8 L1978.4 797.3 L1996.9 797.0 L2016.4 796.6 L2037.3 796.3 L2060.1 796.0 L2087.8 795.6 L2120.0 795.2 L2152.3 794.8 L2180.4 794.5 L2200.1 794.2 L2300 900 L2300 1600 L100 1600 L100 1150 Z" fill="rgb(162,162,162)"/>
<path d="M202.6 1183.6 L231.1 1226.3 L275.6 1264.2 L290.6 1253.7 L305.9 1243.0 L323.9 1230.5 L343.1 1217.7 L361.8 1205.7 L380.4 1194.5 L400.1 1183.2 L420.2 1172.0 L440.5 1161.0 L460.6 1150.5 L480.6 1140.2 L500.9 1130.2 L521.0 1120.5 L540.7 1111.3 L559.4 1102.9 L576.7 1095.5 L592.9 1088.8 L608.6 1082.7 L624.8 1076.7 L642.1 1070.6 L660.8 1064.5 L680.4 1058.5 L700.6 1052.5 L721.0 1046.4 L741.2 1040.2 L761.7 1033.5 L782.8 1026.5 L803.6 1019.5 L823.2 1013.0 L840.5 1007.1 L855.2 1002.2 L868.1 997.9 L879.6 994.0 L890.1 990.5 L900.1 987.1 L908.4 984.3 L914.6 982.1 L920.5 980.0 L928.1 977.6 L939.4 974.2 L955.6 969.6 L975.5 964.1 L997.1 958.2 L1018.7 952.4 L1038.4 947.3 L1055.2 943.2 L1070.3 939.7 L1085.4 936.3 L1101.9 932.7 L1121.4 928.4 L1144.7 923.3 L1170.7 917.6 L1198.2 911.6 L1226.2 905.5 L1253.4 899.5 L1280.3 893.6 L1307.7 887.6 L1334.9 881.8 L1361.2 876.1 L1386.0 870.8 L1408.8 866.0 L1430.1 861.6 L1450.5 857.4 L1470.8 853.4 L1491.5 849.4 L1512.7 845.4 L1534.0 841.4 L1555.2 837.6 L1576.4 833.9 L1597.4 830.5 L1618.6 827.5 L1640.2 824.7 L1661.5 822.1 L1682.0 819.8 L1701.2 817.7 L1718.2 815.8 L1733.5 814.3 L1748.1 812.9 L1763.2 811.7 L1779.8 810.5 L1798.5 809.2 L1818.6 808.0 L1839.3 806.8 L1859.6 805.8 L1878.6 804.8 L1895.8 803.8 L1911.7 803.0 L1927.2 802.2 L1943.2 801.6 L1960.4 801.0 L1978.5 800.5 L1997.0 800.1 L2016.4 799.8 L2037.3 799.5 L2060.2 799.2 L2087.8 798.8 L2120.0 798.4 L2152.3 798.1 L2180.5 797.7 L2200.2 797.5 L2300 900 L2300 1600 L100 1600 L100 1150 Z" fill="rgb(175,175,175)"/>
<path d="M201.1 1184.6 L229.7 1227.6 L275.5 1266.5 L291.7 1255.2 L307.0 1244.5 L325.0 1232.1 L344.1 1219.2 L362.8 1207.3 L381.4 1196.1 L401.0 1184.9 L421.1 1173.6 L441.4 1162.6 L461.4 1152.1 L481.4 1141.9 L501.7 1131.8 L521.8 1122.1 L541.4 1113.0 L560.2 1104.6 L577.4 1097.2 L593.6 1090.5 L609.3 1084.4 L625.4 1078.5 L642.7 1072.4 L661.3 1066.3 L680.9 1060.3 L701.1 1054.3 L721.5 1048.2 L741.7 1041.9 L762.3 1035.3 L783.4 1028.3 L804.2 1021.3 L823.7 1014.7 L841.0 1008.9 L855.8 1004.0 L868.7 999.6 L880.2 995.8 L890.6 992.2 L900.7 988.9 L909.0 986.0 L915.2 983.8 L921.1 981.8 L928.6 979.3 L939.9 976.0 L956.1 971.4 L976.0 965.9 L997.6 959.9 L1019.2 954.2 L1038.8 949.1 L1055.6 945.0 L1070.8 941.5 L1085.8 938.2 L1102.3 934.5 L1121.8 930.3 L1145.1 925.1 L1171.1 919.4 L1198.6 913.4 L1226.6 907.3 L1253.8 901.4 L1280.8 895.5 L1308.1 889.5 L1335.3 883.7 L1361.6 878.0 L1386.4 872.8 L1409.2 868.0 L1430.5 863.6 L1450.9 859.4 L1471.2 855.5 L1491.9 851.6 L1513.2 847.6 L1534.4 843.7 L1555.7 839.9 L1576.8 836.3 L1597.8 833.0 L1619.0 830.0 L1640.5 827.3 L1661.8 824.8 L1682.3 822.5 L1701.5 820.4 L1718.5 818.6 L1733.8 817.1 L1748.4 815.9 L1763.5 814.7 L1780.0 813.5 L1798.7 812.2 L1818.8 811.0 L1839.4 809.9 L1859.7 808.8 L1878.8 807.8 L1896.0 806.9 L1911.9 806.1 L1927.4 805.4 L1943.3 804.7 L1960.5 804.1 L1978.6 803.6 L1997.1 803.3 L2016.5 803.0 L2037.4 802.7 L2060.2 802.4 L2087.9 802.0 L2120.0 801.7 L2152.4 801.3 L2180.5 801.0 L2200.2 800.8 L2300 900 L2300 1600 L100 1600 L100 1150 Z" fill="rgb(187,187,187)"/>
<path d="M199.5 1185.6 L228.3 1228.8 L275.4 1268.8 L292.8 1256.8 L308.0 1246.0 L326.0 1233.6 L345.1 1220.8 L363.8 1208.9 L382.3 1197.7 L401.9 1186.5 L422.0 1175.2 L442.3 1164.3 L462.3 1153.7 L482.3 1143.5 L502.5 1133.5 L522.6 1123.8 L542.2 1114.7 L560.9 1106.3 L578.2 1098.9 L594.2 1092.3 L609.9 1086.1 L626.0 1080.2 L643.3 1074.1 L661.9 1068.0 L681.5 1062.0 L701.7 1056.0 L722.1 1050.0 L742.3 1043.7 L762.8 1037.0 L784.0 1030.0 L804.8 1023.0 L824.3 1016.5 L841.6 1010.7 L856.4 1005.7 L869.3 1001.4 L880.7 997.5 L891.2 994.0 L901.3 990.6 L909.6 987.8 L915.8 985.6 L921.7 983.5 L929.2 981.1 L940.4 977.8 L956.6 973.2 L976.5 967.6 L998.1 961.7 L1019.6 956.0 L1039.3 950.9 L1056.1 946.8 L1071.2 943.3 L1086.2 940.0 L1102.7 936.4 L1122.2 932.1 L1145.5 927.0 L1171.5 921.3 L1199.1 915.3 L1227.0 909.2 L1254.3 903.3 L1281.2 897.4 L1308.5 891.4 L1335.7 885.6 L1362.0 880.0 L1386.8 874.7 L1409.6 870.0 L1430.9 865.6 L1451.4 861.4 L1471.6 857.5 L1492.3 853.7 L1513.6 849.8 L1534.9 845.9 L1556.1 842.2 L1577.2 838.6 L1598.2 835.4 L1619.4 832.5 L1640.9 829.8 L1662.2 827.4 L1682.7 825.2 L1701.8 823.2 L1718.9 821.5 L1734.1 820.0 L1748.7 818.8 L1763.7 817.6 L1780.3 816.5 L1798.9 815.3 L1819.0 814.1 L1839.6 812.9 L1859.9 811.9 L1878.9 810.9 L1896.1 810.0 L1912.1 809.2 L1927.5 808.5 L1943.4 807.8 L1960.6 807.2 L1978.7 806.8 L1997.1 806.4 L2016.6 806.1 L2037.4 805.9 L2060.3 805.6 L2087.9 805.3 L2120.1 804.9 L2152.4 804.6 L2180.6 804.3 L2200.3 804.1 L2300 900 L2300 1600 L100 1600 L100 1150 Z" fill="rgb(198,198,198)"/>
<path d="M198.0 1186.7 L226.9 1230.1 L275.3 1271.2 L293.8 1258.3 L309.1 1247.6 L327.1 1235.1 L346.1 1222.3 L364.7 1210.4 L383.3 1199.3 L402.8 1188.1 L422.9 1176.9 L443.2 1165.9 L463.1 1155.4 L483.1 1145.2 L503.3 1135.1 L523.4 1125.5 L543.0 1116.4 L561.6 1108.0 L578.9 1100.6 L594.9 1094.0 L610.6 1087.9 L626.7 1082.0 L643.9 1075.9 L662.5 1069.8 L682.0 1063.8 L702.2 1057.8 L722.6 1051.7 L742.8 1045.5 L763.4 1038.8 L784.6 1031.8 L805.4 1024.8 L824.9 1018.2 L842.2 1012.4 L857.0 1007.5 L869.9 1003.1 L881.3 999.3 L891.8 995.8 L901.9 992.4 L910.2 989.5 L916.4 987.3 L922.2 985.3 L929.7 982.9 L941.0 979.6 L957.1 975.0 L977.0 969.4 L998.6 963.5 L1020.1 957.8 L1039.8 952.7 L1056.5 948.6 L1071.6 945.1 L1086.6 941.8 L1103.1 938.2 L1122.6 933.9 L1145.9 928.8 L1171.9 923.1 L1199.5 917.1 L1227.4 911.0 L1254.7 905.1 L1281.6 899.2 L1308.9 893.3 L1336.1 887.5 L1362.4 881.9 L1387.2 876.7 L1410.1 871.9 L1431.4 867.6 L1451.8 863.4 L1472.0 859.6 L1492.8 855.8 L1514.0 852.0 L1535.3 848.2 L1556.5 844.5 L1577.6 841.0 L1598.6 837.8 L1619.7 835.0 L1641.2 832.4 L1662.5 830.0 L1683.0 827.9 L1702.1 825.9 L1719.2 824.3 L1734.4 822.9 L1749.0 821.7 L1764.0 820.6 L1780.5 819.6 L1799.1 818.3 L1819.2 817.1 L1839.8 816.0 L1860.1 815.0 L1879.1 814.0 L1896.3 813.1 L1912.2 812.3 L1927.7 811.6 L1943.6 810.9 L1960.7 810.4 L1978.7 809.9 L1997.2 809.6 L2016.6 809.3 L2037.5 809.1 L2060.3 808.8 L2088.0 808.5 L2120.1 808.2 L2152.5 807.8 L2180.6 807.6 L2200.3 807.4 L2300 900 L2300 1600 L100 1600 L100 1150 Z" fill="rgb(207,207,207)"/>
<path d="M196.4 1187.7 L225.5 1231.3 L275.1 1273.5 L294.9 1259.8 L310.2 1249.1 L328.1 1236.6 L347.1 1223.9 L365.7 1212.0 L384.2 1200.9 L403.7 1189.7 L423.8 1178.5 L444.0 1167.5 L464.0 1157.0 L483.9 1146.8 L504.1 1136.8 L524.2 1127.2 L543.8 1118.1 L562.4 1109.7 L579.6 1102.3 L595.6 1095.7 L611.3 1089.6 L627.3 1083.7 L644.5 1077.6 L663.0 1071.5 L682.5 1065.6 L702.7 1059.6 L723.1 1053.5 L743.4 1047.2 L764.0 1040.5 L785.2 1033.5 L806.0 1026.5 L825.5 1020.0 L842.8 1014.2 L857.6 1009.2 L870.5 1004.9 L881.9 1001.0 L892.4 997.5 L902.4 994.2 L910.8 991.3 L917.0 989.1 L922.8 987.0 L930.3 984.7 L941.5 981.3 L957.6 976.7 L977.5 971.2 L999.0 965.3 L1020.6 959.6 L1040.2 954.5 L1056.9 950.4 L1072.0 947.0 L1087.0 943.6 L1103.5 940.0 L1123.0 935.8 L1146.3 930.6 L1172.3 925.0 L1199.9 919.0 L1227.8 912.9 L1255.1 907.0 L1282.0 901.1 L1309.4 895.2 L1336.6 889.4 L1362.9 883.8 L1387.6 878.6 L1410.5 873.9 L1431.8 869.6 L1452.2 865.4 L1472.5 861.7 L1493.2 858.0 L1514.5 854.2 L1535.8 850.4 L1557.0 846.8 L1578.1 843.4 L1599.0 840.3 L1620.1 837.5 L1641.6 835.0 L1662.8 832.7 L1683.3 830.6 L1702.5 828.7 L1719.5 827.1 L1734.7 825.7 L1749.3 824.6 L1764.3 823.5 L1780.7 822.6 L1799.3 821.3 L1819.4 820.1 L1840.0 819.0 L1860.2 818.0 L1879.3 817.1 L1896.5 816.2 L1912.4 815.4 L1927.8 814.7 L1943.7 814.0 L1960.8 813.5 L1978.8 813.1 L1997.3 812.7 L2016.7 812.5 L2037.5 812.3 L2060.4 812.0 L2088.0 811.7 L2120.2 811.4 L2152.5 811.1 L2180.7 810.9 L2200.3 810.7 L2300 900 L2300 1600 L100 1600 L100 1150 Z" fill="rgb(216,216,216)"/>
<path d="M194.9 1188.7 L224.1 1232.6 L275.0 1275.8 L295.9 1261.3 L311.2 1250.6 L329.1 1238.2 L348.1 1225.4 L366.7 1213.6 L385.1 1202.5 L404.6 1191.3 L424.7 1180.1 L444.9 1169.2 L464.9 1158.7 L484.8 1148.5 L505.0 1138.5 L525.0 1128.8 L544.5 1119.8 L563.1 1111.4 L580.3 1104.0 L596.3 1097.4 L611.9 1091.3 L627.9 1085.4 L645.1 1079.4 L663.6 1073.3 L683.1 1067.3 L703.2 1061.4 L723.7 1055.3 L744.0 1049.0 L764.6 1042.3 L785.8 1035.3 L806.6 1028.3 L826.1 1021.7 L843.4 1015.9 L858.2 1011.0 L871.1 1006.6 L882.5 1002.8 L893.0 999.3 L903.0 995.9 L911.4 993.0 L917.7 990.8 L923.4 988.8 L930.8 986.4 L942.0 983.1 L958.1 978.5 L977.9 973.0 L999.5 967.1 L1021.0 961.4 L1040.7 956.3 L1057.4 952.3 L1072.4 948.8 L1087.4 945.5 L1103.9 941.9 L1123.5 937.6 L1146.7 932.5 L1172.7 926.8 L1200.3 920.8 L1228.2 914.8 L1255.5 908.8 L1282.4 903.0 L1309.8 897.1 L1337.0 891.3 L1363.3 885.8 L1388.1 880.6 L1410.9 875.9 L1432.2 871.5 L1452.6 867.4 L1472.9 863.7 L1493.6 860.1 L1514.9 856.4 L1536.2 852.7 L1557.4 849.1 L1578.5 845.7 L1599.4 842.7 L1620.5 840.0 L1641.9 837.6 L1663.2 835.3 L1683.7 833.3 L1702.8 831.5 L1719.8 829.9 L1735.0 828.6 L1749.6 827.5 L1764.5 826.5 L1781.0 825.6 L1799.5 824.3 L1819.5 823.2 L1840.1 822.1 L1860.4 821.1 L1879.4 820.2 L1896.7 819.3 L1912.6 818.5 L1928.0 817.8 L1943.8 817.2 L1960.9 816.6 L1978.9 816.2 L1997.3 815.9 L2016.7 815.7 L2037.6 815.4 L2060.4 815.2 L2088.1 814.9 L2120.2 814.6 L2152.5 814.4 L2180.7 814.1 L2200.4 814.0 L2300 900 L2300 1600 L100 1600 L100 1150 Z" fill="rgb(224,224,224)"/>
<path d="M193.4 1189.8 L222.7 1233.8 L274.9 1278.2 L297.0 1262.8 L312.3 1252.1 L330.2 1239.7 L349.2 1226.9 L367.6 1215.2 L386.1 1204.1 L405.5 1192.9 L425.6 1181.7 L445.8 1170.8 L465.7 1160.3 L485.6 1150.1 L505.8 1140.1 L525.8 1130.5 L545.3 1121.4 L563.9 1113.1 L581.0 1105.7 L597.0 1099.1 L612.6 1093.1 L628.6 1087.2 L645.7 1081.2 L664.1 1075.1 L683.6 1069.1 L703.8 1063.1 L724.2 1057.1 L744.5 1050.8 L765.2 1044.1 L786.3 1037.0 L807.2 1030.1 L826.7 1023.5 L844.0 1017.7 L858.8 1012.7 L871.7 1008.4 L883.1 1004.5 L893.6 1001.0 L903.6 997.7 L912.1 994.8 L918.3 992.6 L924.0 990.6 L931.4 988.2 L942.5 984.9 L958.7 980.3 L978.4 974.8 L1000.0 968.9 L1021.5 963.2 L1041.1 958.1 L1057.8 954.1 L1072.8 950.6 L1087.8 947.3 L1104.3 943.7 L1123.9 939.4 L1147.1 934.3 L1173.1 928.7 L1200.7 922.7 L1228.7 916.6 L1255.9 910.7 L1282.8 904.9 L1310.2 898.9 L1337.4 893.2 L1363.7 887.7 L1388.5 882.6 L1411.3 877.9 L1432.6 873.5 L1453.0 869.4 L1473.3 865.8 L1494.0 862.2 L1515.3 858.6 L1536.6 854.9 L1557.8 851.4 L1578.9 848.1 L1599.7 845.2 L1620.8 842.5 L1642.3 840.1 L1663.5 838.0 L1684.0 836.0 L1703.1 834.2 L1720.1 832.7 L1735.3 831.5 L1749.8 830.4 L1764.8 829.5 L1781.2 828.6 L1799.7 827.4 L1819.7 826.2 L1840.3 825.1 L1860.6 824.2 L1879.6 823.2 L1896.8 822.4 L1912.7 821.6 L1928.1 820.9 L1943.9 820.3 L1961.0 819.8 L1979.0 819.4 L1997.4 819.1 L2016.8 818.8 L2037.6 818.6 L2060.5 818.4 L2088.1 818.1 L2120.3 817.9 L2152.6 817.6 L2180.7 817.4 L2200.4 817.3 L2300 900 L2300 1600 L100 1600 L100 1150 Z" fill="rgb(230,230,230)"/>
<path d="M191.8 1190.8 L221.3 1235.0 L274.8 1280.5 L298.1 1264.3 L313.3 1253.6 L331.2 1241.2 L350.2 1228.5 L368.6 1216.7 L387.0 1205.7 L406.5 1194.5 L426.5 1183.4 L446.6 1172.4 L466.6 1162.0 L486.4 1151.8 L506.6 1141.8 L526.6 1132.2 L546.1 1123.1 L564.6 1114.8 L581.8 1107.4 L597.7 1100.9 L613.2 1094.8 L629.2 1088.9 L646.3 1082.9 L664.7 1076.8 L684.1 1070.9 L704.3 1064.9 L724.8 1058.8 L745.1 1052.5 L765.7 1045.8 L786.9 1038.8 L807.8 1031.8 L827.3 1025.2 L844.6 1019.4 L859.4 1014.5 L872.3 1010.2 L883.7 1006.3 L894.2 1002.8 L904.2 999.4 L912.7 996.5 L918.9 994.3 L924.6 992.3 L931.9 990.0 L943.0 986.7 L959.2 982.1 L978.9 976.6 L1000.5 970.7 L1022.0 965.0 L1041.6 959.9 L1058.2 955.9 L1073.3 952.4 L1088.2 949.1 L1104.7 945.5 L1124.3 941.3 L1147.5 936.2 L1173.5 930.5 L1201.1 924.5 L1229.1 918.5 L1256.3 912.6 L1283.2 906.7 L1310.6 900.8 L1337.8 895.1 L1364.1 889.6 L1388.9 884.5 L1411.7 879.8 L1433.0 875.5 L1453.4 871.5 L1473.7 867.9 L1494.5 864.3 L1515.8 860.7 L1537.1 857.2 L1558.3 853.7 L1579.3 850.5 L1600.1 847.6 L1621.2 845.0 L1642.6 842.7 L1663.8 840.6 L1684.3 838.7 L1703.5 837.0 L1720.5 835.5 L1735.6 834.3 L1750.1 833.3 L1765.0 832.4 L1781.4 831.6 L1799.9 830.4 L1819.9 829.2 L1840.5 828.2 L1860.7 827.2 L1879.8 826.3 L1897.0 825.5 L1912.9 824.7 L1928.3 824.0 L1944.1 823.4 L1961.1 822.9 L1979.1 822.5 L1997.5 822.2 L2016.8 822.0 L2037.7 821.8 L2060.5 821.6 L2088.2 821.4 L2120.3 821.1 L2152.6 820.9 L2180.8 820.7 L2200.5 820.6 L2300 900 L2300 1600 L100 1600 L100 1150 Z" fill="rgb(236,236,236)"/>
<path d="M190.3 1191.8 L219.9 1236.3 L274.7 1282.8 L299.1 1265.9 L314.4 1255.1 L332.3 1242.8 L351.2 1230.0 L369.6 1218.3 L388.0 1207.3 L407.4 1196.1 L427.4 1185.0 L447.5 1174.1 L467.4 1163.6 L487.3 1153.4 L507.4 1143.5 L527.4 1133.9 L546.8 1124.8 L565.4 1116.5 L582.5 1109.1 L598.4 1102.6 L613.9 1096.5 L629.8 1090.7 L646.9 1084.7 L665.3 1078.6 L684.7 1072.7 L704.8 1066.7 L725.3 1060.6 L745.6 1054.3 L766.3 1047.6 L787.5 1040.6 L808.4 1033.6 L827.9 1027.0 L845.2 1021.2 L859.9 1016.2 L872.8 1011.9 L884.3 1008.1 L894.8 1004.5 L904.8 1001.2 L913.3 998.3 L919.5 996.0 L925.2 994.1 L932.5 991.7 L943.5 988.4 L959.7 983.9 L979.4 978.3 L1001.0 972.4 L1022.5 966.7 L1042.0 961.7 L1058.7 957.7 L1073.7 954.2 L1088.6 950.9 L1105.1 947.4 L1124.7 943.1 L1147.9 938.0 L1173.9 932.4 L1201.5 926.4 L1229.5 920.3 L1256.7 914.4 L1283.6 908.6 L1311.0 902.7 L1338.2 897.0 L1364.5 891.5 L1389.3 886.5 L1412.2 881.8 L1433.5 877.5 L1453.9 873.5 L1474.1 870.0 L1494.9 866.5 L1516.2 862.9 L1537.5 859.4 L1558.7 856.0 L1579.7 852.9 L1600.5 850.0 L1621.6 847.5 L1643.0 845.3 L1664.2 843.2 L1684.7 841.4 L1703.8 839.7 L1720.8 838.3 L1736.0 837.2 L1750.4 836.2 L1765.3 835.4 L1781.7 834.6 L1800.2 833.4 L1820.1 832.3 L1840.6 831.2 L1860.9 830.3 L1880.0 829.4 L1897.2 828.6 L1913.1 827.8 L1928.4 827.1 L1944.2 826.5 L1961.2 826.0 L1979.1 825.6 L1997.5 825.4 L2016.9 825.2 L2037.7 825.0 L2060.6 824.8 L2088.2 824.6 L2120.4 824.4 L2152.7 824.1 L2180.8 824.0 L2200.5 823.8 L2300 900 L2300 1600 L100 1600 L100 1150 Z" fill="rgb(240,240,240)"/>
<path d="M188.7 1192.8 L218.5 1237.5 L274.6 1285.2 L300.2 1267.4 L315.5 1256.7 L333.3 1244.3 L352.2 1231.6 L370.6 1219.9 L388.9 1208.9 L408.3 1197.7 L428.3 1186.6 L448.4 1175.7 L468.3 1165.2 L488.1 1155.1 L508.2 1145.1 L528.2 1135.5 L547.6 1126.5 L566.1 1118.2 L583.2 1110.8 L599.1 1104.3 L614.5 1098.3 L630.4 1092.4 L647.5 1086.4 L665.8 1080.4 L685.2 1074.4 L705.3 1068.5 L725.8 1062.4 L746.2 1056.1 L766.9 1049.3 L788.1 1042.3 L808.9 1035.3 L828.5 1028.7 L845.8 1022.9 L860.5 1018.0 L873.4 1013.7 L884.9 1009.8 L895.3 1006.3 L905.4 1002.9 L913.9 1000.0 L920.1 997.8 L925.8 995.8 L933.0 993.5 L944.1 990.2 L960.2 985.6 L979.9 980.1 L1001.5 974.2 L1022.9 968.5 L1042.5 963.5 L1059.1 959.5 L1074.1 956.1 L1089.0 952.8 L1105.5 949.2 L1125.1 944.9 L1148.3 939.8 L1174.3 934.2 L1201.9 928.2 L1229.9 922.2 L1257.1 916.3 L1284.0 910.5 L1311.4 904.6 L1338.6 898.9 L1365.0 893.5 L1389.7 888.4 L1412.6 883.8 L1433.9 879.5 L1454.3 875.5 L1474.6 872.0 L1495.3 868.6 L1516.6 865.1 L1537.9 861.7 L1559.1 858.3 L1580.2 855.2 L1600.9 852.5 L1621.9 850.0 L1643.3 847.9 L1664.5 845.9 L1685.0 844.1 L1704.1 842.5 L1721.1 841.1 L1736.3 840.0 L1750.7 839.1 L1765.5 838.3 L1781.9 837.6 L1800.4 836.4 L1820.3 835.3 L1840.8 834.3 L1861.1 833.3 L1880.1 832.5 L1897.3 831.6 L1913.2 830.9 L1928.6 830.2 L1944.3 829.7 L1961.3 829.2 L1979.2 828.8 L1997.6 828.5 L2016.9 828.3 L2037.8 828.2 L2060.6 828.0 L2088.3 827.8 L2120.4 827.6 L2152.7 827.4 L2180.9 827.3 L2200.6 827.1 L2300 900 L2300 1600 L100 1600 L100 1150 Z" fill="rgb(244,244,244)"/>
<path d="M187.2 1193.9 L217.1 1238.8 L274.5 1287.5 L301.2 1268.9 L316.5 1258.2 L334.4 1245.8 L353.2 1233.1 L371.5 1221.5 L389.8 1210.5 L409.2 1199.4 L429.1 1188.2 L449.3 1177.3 L469.1 1166.9 L488.9 1156.7 L509.0 1146.8 L529.0 1137.2 L548.4 1128.2 L566.9 1119.9 L583.9 1112.5 L599.8 1106.0 L615.2 1100.0 L631.1 1094.1 L648.1 1088.2 L666.4 1082.1 L685.7 1076.2 L705.9 1070.2 L726.4 1064.1 L746.8 1057.8 L767.5 1051.1 L788.7 1044.1 L809.5 1037.1 L829.1 1030.5 L846.3 1024.7 L861.1 1019.8 L874.0 1015.4 L885.5 1011.6 L895.9 1008.0 L906.0 1004.7 L914.5 1001.8 L920.7 999.5 L926.4 997.6 L933.6 995.3 L944.6 992.0 L960.7 987.4 L980.4 981.9 L1001.9 976.0 L1023.4 970.3 L1042.9 965.3 L1059.5 961.3 L1074.5 957.9 L1089.4 954.6 L1105.9 951.0 L1125.5 946.8 L1148.8 941.7 L1174.7 936.0 L1202.3 930.1 L1230.3 924.1 L1257.5 918.2 L1284.5 912.3 L1311.8 906.5 L1339.1 900.8 L1365.4 895.4 L1390.2 890.4 L1413.0 885.8 L1434.3 881.5 L1454.7 877.5 L1475.0 874.1 L1495.7 870.7 L1517.1 867.3 L1538.4 863.9 L1559.6 860.6 L1580.6 857.6 L1601.3 854.9 L1622.3 852.5 L1643.7 850.4 L1664.9 848.5 L1685.3 846.8 L1704.5 845.3 L1721.4 844.0 L1736.6 842.9 L1751.0 842.0 L1765.8 841.3 L1782.1 840.6 L1800.6 839.4 L1820.5 838.4 L1841.0 837.4 L1861.2 836.4 L1880.3 835.5 L1897.5 834.7 L1913.4 834.0 L1928.7 833.3 L1944.4 832.8 L1961.4 832.3 L1979.3 831.9 L1997.6 831.7 L2017.0 831.5 L2037.8 831.4 L2060.7 831.2 L2088.3 831.0 L2120.5 830.8 L2152.8 830.7 L2180.9 830.5 L2200.6 830.4 L2300 900 L2300 1600 L100 1600 L100 1150 Z" fill="rgb(247,247,247)"/>
<path d="M185.7 1194.9 L215.7 1240.0 L274.3 1289.8 L302.3 1270.4 L317.6 1259.7 L335.4 1247.4 L354.2 1234.7 L372.5 1223.0 L390.8 1212.1 L410.1 1201.0 L430.0 1189.9 L450.1 1179.0 L470.0 1168.5 L489.8 1158.4 L509.8 1148.5 L529.7 1138.9 L549.1 1129.9 L567.6 1121.6 L584.6 1114.2 L600.4 1107.7 L615.9 1101.7 L631.7 1095.9 L648.7 1089.9 L666.9 1083.9 L686.3 1078.0 L706.4 1072.0 L726.9 1065.9 L747.3 1059.6 L768.0 1052.9 L789.3 1045.8 L810.1 1038.8 L829.6 1032.3 L846.9 1026.5 L861.7 1021.5 L874.6 1017.2 L886.1 1013.3 L896.5 1009.8 L906.6 1006.4 L915.1 1003.5 L921.4 1001.3 L927.0 999.3 L934.1 997.0 L945.1 993.8 L961.2 989.2 L980.9 983.7 L1002.4 977.8 L1023.9 972.1 L1043.4 967.1 L1060.0 963.1 L1074.9 959.7 L1089.8 956.4 L1106.3 952.9 L1125.9 948.6 L1149.2 943.5 L1175.1 937.9 L1202.7 931.9 L1230.7 925.9 L1257.9 920.0 L1284.9 914.2 L1312.3 908.3 L1339.5 902.7 L1365.8 897.3 L1390.6 892.3 L1413.4 887.7 L1434.7 883.5 L1455.1 879.5 L1475.4 876.2 L1496.2 872.9 L1517.5 869.5 L1538.8 866.2 L1560.0 863.0 L1581.0 860.0 L1601.7 857.3 L1622.7 855.1 L1644.0 853.0 L1665.2 851.2 L1685.6 849.5 L1704.8 848.0 L1721.8 846.8 L1736.9 845.8 L1751.3 844.9 L1766.1 844.2 L1782.4 843.6 L1800.8 842.5 L1820.6 841.4 L1841.2 840.4 L1861.4 839.5 L1880.5 838.6 L1897.7 837.8 L1913.6 837.1 L1928.9 836.5 L1944.6 835.9 L1961.5 835.4 L1979.4 835.1 L1997.7 834.9 L2017.0 834.7 L2037.9 834.5 L2060.7 834.4 L2088.4 834.2 L2120.5 834.1 L2152.8 833.9 L2181.0 833.8 L2200.7 833.7 L2300 900 L2300 1600 L100 1600 L100 1150 Z" fill="rgb(249,249,249)"/>
<path d="M184.1 1195.9 L214.4 1241.3 L274.2 1292.2 L303.4 1271.9 L318.6 1261.2 L336.5 1248.9 L355.2 1236.2 L373.5 1224.6 L391.7 1213.7 L411.0 1202.6 L430.9 1191.5 L451.0 1180.6 L470.8 1170.2 L490.6 1160.0 L510.6 1150.1 L530.5 1140.6 L549.9 1131.5 L568.4 1123.3 L585.3 1115.9 L601.1 1109.5 L616.5 1103.5 L632.3 1097.6 L649.2 1091.7 L667.5 1085.7 L686.8 1079.8 L706.9 1073.8 L727.4 1067.7 L747.9 1061.4 L768.6 1054.6 L789.9 1047.6 L810.7 1040.6 L830.2 1034.0 L847.5 1028.2 L862.3 1023.3 L875.2 1018.9 L886.7 1015.1 L897.1 1011.6 L907.2 1008.2 L915.7 1005.3 L922.0 1003.0 L927.5 1001.1 L934.6 998.8 L945.6 995.6 L961.7 991.0 L981.4 985.5 L1002.9 979.6 L1024.3 973.9 L1043.9 969.0 L1060.4 964.9 L1075.3 961.5 L1090.2 958.2 L1106.7 954.7 L1126.3 950.4 L1149.6 945.4 L1175.5 939.7 L1203.1 933.8 L1231.1 927.8 L1258.3 921.9 L1285.3 916.1 L1312.7 910.2 L1339.9 904.6 L1366.2 899.3 L1391.0 894.3 L1413.8 889.7 L1435.1 885.5 L1455.5 881.5 L1475.8 878.2 L1496.6 875.0 L1517.9 871.7 L1539.3 868.4 L1560.4 865.3 L1581.4 862.4 L1602.1 859.8 L1623.0 857.6 L1644.4 855.6 L1665.5 853.8 L1686.0 852.2 L1705.1 850.8 L1722.1 849.6 L1737.2 848.6 L1751.5 847.8 L1766.3 847.2 L1782.6 846.6 L1801.0 845.5 L1820.8 844.4 L1841.3 843.5 L1861.6 842.5 L1880.6 841.7 L1897.9 840.9 L1913.7 840.2 L1929.0 839.6 L1944.7 839.0 L1961.6 838.6 L1979.5 838.2 L1997.8 838.0 L2017.1 837.9 L2037.9 837.7 L2060.8 837.6 L2088.4 837.4 L2120.6 837.3 L2152.9 837.2 L2181.0 837.1 L2200.7 837.0 L2300 900 L2300 1600 L100 1600 L100 1150 Z" fill="rgb(251,251,251)"/>
<path d="M182.6 1196.9 L213.0 1242.5 L274.1 1294.5 L304.4 1273.5 L319.7 1262.7 L337.5 1250.4 L356.3 1237.8 L374.5 1226.2 L392.6 1215.3 L411.9 1204.2 L431.8 1193.1 L451.9 1182.2 L471.7 1171.8 L491.4 1161.7 L511.4 1151.8 L531.3 1142.2 L550.7 1133.2 L569.1 1125.0 L586.1 1117.6 L601.8 1111.2 L617.2 1105.2 L633.0 1099.4 L649.8 1093.4 L668.1 1087.4 L687.3 1081.5 L707.4 1075.6 L728.0 1069.5 L748.4 1063.1 L769.2 1056.4 L790.4 1049.3 L811.3 1042.3 L830.8 1035.8 L848.1 1030.0 L862.9 1025.0 L875.8 1020.7 L887.2 1016.8 L897.7 1013.3 L907.8 1009.9 L916.3 1007.0 L922.6 1004.8 L928.1 1002.8 L935.2 1000.6 L946.1 997.3 L962.2 992.8 L981.9 987.3 L1003.4 981.4 L1024.8 975.7 L1044.3 970.8 L1060.8 966.8 L1075.7 963.3 L1090.6 960.1 L1107.1 956.5 L1126.7 952.3 L1150.0 947.2 L1176.0 941.6 L1203.5 935.6 L1231.5 929.6 L1258.8 923.8 L1285.7 918.0 L1313.1 912.1 L1340.3 906.5 L1366.6 901.2 L1391.4 896.2 L1414.3 891.7 L1435.6 887.5 L1456.0 883.5 L1476.2 880.3 L1497.0 877.1 L1518.4 873.9 L1539.7 870.6 L1560.9 867.6 L1581.8 864.7 L1602.5 862.2 L1623.4 860.1 L1644.7 858.1 L1665.9 856.4 L1686.3 854.9 L1705.4 853.6 L1722.4 852.4 L1737.5 851.5 L1751.8 850.8 L1766.6 850.1 L1782.8 849.6 L1801.2 848.5 L1821.0 847.5 L1841.5 846.5 L1861.7 845.6 L1880.8 844.8 L1898.0 844.0 L1913.9 843.3 L1929.2 842.7 L1944.8 842.1 L1961.7 841.7 L1979.5 841.4 L1997.8 841.2 L2017.1 841.0 L2038.0 840.9 L2060.8 840.8 L2088.5 840.7 L2120.6 840.5 L2152.9 840.4 L2181.1 840.4 L2200.8 840.3 L2300 900 L2300 1600 L100 1600 L100 1150 Z" fill="rgb(252,252,252)"/>
<path d="M181.0 1198.0 L211.6 1243.7 L274.0 1296.8 L305.5 1275.0 L320.8 1264.3 L338.5 1251.9 L357.3 1239.3 L375.4 1227.8 L393.6 1216.9 L412.8 1205.8 L432.7 1194.7 L452.8 1183.9 L472.5 1173.5 L492.3 1163.4 L512.3 1153.4 L532.1 1143.9 L551.4 1134.9 L569.8 1126.7 L586.8 1119.4 L602.5 1112.9 L617.8 1106.9 L633.6 1101.1 L650.4 1095.2 L668.6 1089.2 L687.9 1083.3 L708.0 1077.3 L728.5 1071.2 L749.0 1064.9 L769.8 1058.1 L791.0 1051.1 L811.9 1044.1 L831.4 1037.5 L848.7 1031.7 L863.5 1026.8 L876.4 1022.4 L887.8 1018.6 L898.3 1015.1 L908.4 1011.7 L917.0 1008.8 L923.2 1006.5 L928.7 1004.6 L935.7 1002.3 L946.6 999.1 L962.7 994.6 L982.4 989.1 L1003.9 983.2 L1025.3 977.5 L1044.8 972.6 L1061.3 968.6 L1076.2 965.2 L1091.0 961.9 L1107.5 958.3 L1127.1 954.1 L1150.4 949.0 L1176.4 943.4 L1203.9 937.5 L1231.9 931.5 L1259.2 925.6 L1286.1 919.8 L1313.5 914.0 L1340.7 908.4 L1367.1 903.1 L1391.8 898.2 L1414.7 893.7 L1436.0 889.5 L1456.4 885.6 L1476.7 882.4 L1497.5 879.2 L1518.8 876.0 L1540.1 872.9 L1561.3 869.9 L1582.3 867.1 L1602.9 864.6 L1623.8 862.6 L1645.1 860.7 L1666.2 859.1 L1686.6 857.6 L1705.8 856.3 L1722.7 855.2 L1737.8 854.3 L1752.1 853.7 L1766.8 853.1 L1783.1 852.6 L1801.4 851.5 L1821.2 850.5 L1841.7 849.6 L1861.9 848.7 L1881.0 847.8 L1898.2 847.1 L1914.0 846.4 L1929.3 845.8 L1945.0 845.3 L1961.8 844.8 L1979.6 844.5 L1997.9 844.3 L2017.2 844.2 L2038.0 844.1 L2060.9 844.0 L2088.5 843.9 L2120.6 843.8 L2152.9 843.7 L2181.1 843.6 L2200.8 843.6 L2300 900 L2300 1600 L100 1600 L100 1150 Z" fill="rgb(253,253,253)"/>
</g>
<g style="mix-blend-mode:multiply">
<path d="M100.0 1200.0 L123.8 1192.3 L158.7 1181.3 L200.0 1170.0 L250.6 1159.6 L307.6 1148.8 L358.0 1137.0 L395.3 1123.6 L426.1 1109.2 L457.0 1095.0 L490.9 1081.1 L524.9 1067.4 L557.0 1055.0 L585.3 1044.6 L611.8 1035.3 L640.0 1026.0 L671.8 1016.3 L705.4 1006.6 L739.0 996.0 L772.0 984.3 L805.0 971.7 L838.0 959.0 L871.0 945.9 L903.9 932.6 L937.0 920.0 L970.9 908.4 L1004.9 897.7 L1037.0 888.0 L1064.1 880.8 L1089.3 874.7 L1120.0 866.0 L1160.3 852.0 L1206.1 835.4 L1252.0 820.0 L1297.3 807.5 L1342.7 796.3 L1385.0 785.0 L1421.9 773.1 L1455.7 761.3 L1490.0 750.0 L1526.7 739.6 L1563.9 729.8 L1600.0 720.0 L1626.7 711.5 L1652.2 703.0 L1700.0 690.0 L1763.7 673.3 L1849.6 652.2 L2000.0 620.0 L2283.0 564.4 L2630.4 497.8 L2880.0 450.0 L2880 200 L-100 200 L-100 1200 Z" fill="url(#gu)"/>
<path d="M100.0 1200.0 L123.8 1192.3 L158.7 1181.3 L200.0 1170.0 L250.6 1159.6 L307.6 1148.8 L358.0 1137.0 L395.3 1123.6 L426.1 1109.2 L457.0 1095.0 L490.9 1081.1 L524.9 1067.4 L557.0 1055.0 L585.3 1044.6 L611.8 1035.3 L640.0 1026.0 L671.8 1016.3 L705.4 1006.6 L739.0 996.0 L772.0 984.3 L805.0 971.7 L838.0 959.0 L871.0 945.9 L903.9 932.6 L937.0 920.0 L970.9 908.4 L1004.9 897.7 L1037.0 888.0 L1064.1 880.8 L1089.3 874.7 L1120.0 866.0 L1160.3 852.0 L1206.1 835.4 L1252.0 820.0 L1297.3 807.5 L1342.7 796.3 L1385.0 785.0 L1421.9 773.1 L1455.7 761.3 L1490.0 750.0 L1526.7 739.6 L1563.9 729.8 L1600.0 720.0 L1626.7 711.5 L1652.2 703.0 L1700.0 690.0 L1763.7 673.3 L1849.6 652.2 L2000.0 620.0 L2283.0 564.4 L2630.4 497.8 L2880.0 450.0 L2880 1700 L-100 1700 L-100 1200 Z" fill="url(#gl)"/>
</g>
<g style="mix-blend-mode:multiply"><rect x="-100" y="200" width="3100" height="1500" fill="#000"/>
<path d="M-100.0 188.0 L612.0 188.0 L612.0 597.4 L667.0 719.2 L667.0 761.8 L667.0 769.4 L701.7 757.4 L726.8 747.2 L753.8 736.7 L780.8 726.8 L807.8 717.6 L834.6 708.9 L861.4 700.4 L888.0 691.9 L914.6 683.3 L941.2 674.4 L967.8 665.4 L994.6 656.4 L1021.4 647.5 L1048.3 638.9 L1075.2 630.7 L1102.3 623.0 L1129.2 615.8 L1155.9 609.0 L1182.6 602.4 L1209.3 596.0 L1236.0 589.6 L1262.8 583.5 L1289.5 577.7 L1316.1 571.7 L1342.8 565.8 L1369.4 560.0 L1396.1 554.3 L1422.8 548.8 L1449.4 543.4 L1476.1 538.2 L1502.8 533.1 L1529.6 528.6 L1556.4 524.3 L1583.1 519.9 L1609.9 515.9 L1636.7 512.0 L1663.5 508.3 L1690.3 504.8 L1717.0 501.4 L1743.7 498.0 L1770.5 494.8 L1797.4 491.7 L1824.2 488.8 L1851.1 486.2 L1877.9 483.8 L1904.4 481.6 L1931.2 479.4 L1958.2 477.4 L1959.7 477.3 L1977.5 276.0 L3024.0 276.0 L3024.0 1724.0 L2376.2 1724.0 L2359.4 801.8 L2375.3 796.5 L2346.5 805.7 L2317.7 814.8 L2289.9 823.5 L2263.1 831.7 L2236.4 839.9 L2209.6 848.1 L2182.8 856.1 L2156.0 864.1 L2129.2 872.0 L2102.3 879.7 L2075.5 887.3 L2048.8 894.8 L2022.0 902.2 L1995.3 909.6 L1968.7 917.0 L1942.0 924.5 L1915.4 931.9 L1888.9 939.5 L1862.3 947.3 L1835.6 955.1 L1808.9 962.9 L1782.2 970.5 L1755.5 978.1 L1728.6 985.8 L1701.6 993.4 L1674.6 1000.7 L1647.6 1007.8 L1620.6 1014.6 L1593.7 1021.2 L1566.8 1027.7 L1540.1 1034.1 L1513.4 1040.7 L1486.7 1047.3 L1460.1 1054.1 L1433.5 1061.1 L1406.8 1068.2 L1380.0 1075.4 L1353.2 1082.5 L1326.4 1089.6 L1299.5 1096.5 L1272.8 1103.3 L1246.0 1110.1 L1219.2 1116.9 L1192.5 1123.7 L1165.7 1130.4 L1139.0 1137.2 L1112.3 1144.1 L1085.5 1150.9 L1058.6 1157.8 L1042.0 1152.5 L1039.6 1160.1 L1039.6 1190.8 L1009.4 1402.2 L906.9 1709.6 L-100.0 1709.6 Z" fill="rgb(2,2,2)"/>
<path d="M-100.0 189.1 L610.9 189.1 L610.9 597.7 L665.9 719.4 L665.9 761.8 L665.9 770.8 L702.2 759.0 L727.4 748.7 L754.4 738.3 L781.3 728.4 L808.3 719.2 L835.1 710.4 L861.9 701.9 L888.5 693.5 L915.1 684.9 L941.7 676.0 L968.3 667.0 L995.1 657.9 L1021.9 649.0 L1048.7 640.4 L1075.7 632.2 L1102.7 624.5 L1129.6 617.4 L1156.3 610.6 L1183.0 604.1 L1209.7 597.7 L1236.4 591.3 L1263.2 585.3 L1289.9 579.5 L1316.5 573.5 L1343.1 567.7 L1369.8 561.9 L1396.4 556.3 L1423.1 550.9 L1449.8 545.6 L1476.4 540.4 L1503.2 535.4 L1530.0 530.9 L1556.7 526.6 L1583.4 522.3 L1610.2 518.2 L1637.0 514.4 L1663.8 510.8 L1690.5 507.3 L1717.3 503.9 L1744.0 500.6 L1770.8 497.4 L1797.6 494.3 L1824.5 491.5 L1851.3 488.8 L1878.1 486.5 L1904.7 484.4 L1931.4 482.1 L1958.4 480.1 L1962.3 479.9 L1979.6 278.3 L3021.7 278.3 L3021.7 1721.7 L2378.5 1721.7 L2362.5 797.4 L2374.3 793.5 L2345.5 802.7 L2316.7 811.8 L2289.0 820.5 L2262.2 828.7 L2235.5 836.9 L2208.7 845.1 L2181.9 853.1 L2155.1 861.1 L2128.3 869.0 L2101.5 876.7 L2074.7 884.3 L2047.9 891.8 L2021.2 899.3 L1994.5 906.7 L1967.8 914.1 L1941.1 921.6 L1914.6 929.0 L1888.1 936.6 L1861.4 944.4 L1834.7 952.2 L1808.1 960.0 L1781.4 967.7 L1754.6 975.4 L1727.8 983.1 L1700.8 990.7 L1673.8 998.0 L1646.9 1005.1 L1619.9 1012.0 L1593.0 1018.7 L1566.2 1025.2 L1539.5 1031.7 L1512.7 1038.3 L1486.1 1044.9 L1459.5 1051.7 L1432.8 1058.8 L1406.1 1065.9 L1379.4 1073.1 L1352.6 1080.3 L1325.8 1087.3 L1299.0 1094.3 L1272.2 1101.2 L1245.4 1108.0 L1218.7 1114.8 L1191.9 1121.6 L1165.2 1128.4 L1138.5 1135.2 L1111.8 1142.1 L1085.0 1149.0 L1058.1 1155.8 L1040.9 1151.6 L1038.7 1160.1 L1038.7 1190.7 L1008.5 1402.0 L906.3 1708.7 L-100.0 1708.7 Z" fill="rgb(4,4,4)"/>
<path d="M-100.0 190.3 L609.7 190.3 L609.7 597.9 L664.7 719.7 L664.7 761.8 L664.7 772.1 L702.6 760.6 L728.0 750.3 L754.9 739.8 L781.9 730.0 L808.8 720.8 L835.6 712.0 L862.4 703.5 L889.0 695.0 L915.6 686.4 L942.2 677.5 L968.9 668.5 L995.6 659.5 L1022.4 650.6 L1049.2 642.0 L1076.1 633.8 L1103.1 626.1 L1130.0 619.0 L1156.7 612.3 L1183.4 605.7 L1210.1 599.4 L1236.8 593.0 L1263.5 587.0 L1290.2 581.2 L1316.9 575.4 L1343.5 569.6 L1370.1 563.9 L1396.8 558.3 L1423.5 553.0 L1450.1 547.7 L1476.8 542.6 L1503.5 537.7 L1530.3 533.1 L1557.0 528.9 L1583.8 524.7 L1610.6 520.6 L1637.3 516.8 L1664.1 513.2 L1690.8 509.8 L1717.6 506.4 L1744.3 503.1 L1771.1 500.0 L1797.9 497.0 L1824.7 494.1 L1851.5 491.5 L1878.3 489.2 L1904.9 487.1 L1931.7 484.9 L1958.6 482.9 L1964.9 482.4 L1981.8 280.6 L3019.4 280.6 L3019.4 1719.4 L2380.7 1719.4 L2365.7 793.0 L2373.3 790.5 L2344.6 799.7 L2315.8 808.8 L2288.0 817.5 L2261.3 825.7 L2234.5 834.0 L2207.8 842.1 L2181.0 850.2 L2154.2 858.1 L2127.4 866.0 L2100.6 873.8 L2073.8 881.4 L2047.1 888.9 L2020.4 896.3 L1993.7 903.8 L1967.0 911.2 L1940.3 918.7 L1913.7 926.1 L1887.2 933.7 L1860.6 941.5 L1833.9 949.4 L1807.2 957.2 L1780.5 964.9 L1753.8 972.6 L1727.0 980.4 L1700.0 988.0 L1673.1 995.4 L1646.1 1002.5 L1619.2 1009.4 L1592.3 1016.1 L1565.5 1022.6 L1538.8 1029.2 L1512.1 1035.8 L1485.4 1042.5 L1458.8 1049.4 L1432.2 1056.4 L1405.5 1063.6 L1378.8 1070.8 L1352.0 1078.0 L1325.2 1085.1 L1298.4 1092.1 L1271.6 1099.0 L1244.8 1105.8 L1218.1 1112.7 L1191.4 1119.5 L1164.6 1126.3 L1137.9 1133.2 L1111.2 1140.1 L1084.5 1147.0 L1057.6 1153.9 L1039.7 1150.7 L1037.8 1160.1 L1037.8 1190.7 L1007.6 1401.8 L905.6 1707.8 L-100.0 1707.8 Z" fill="rgb(7,7,7)"/>
<path d="M-100.0 191.4 L608.6 191.4 L608.6 598.2 L663.6 719.9 L663.6 761.8 L663.6 773.5 L703.1 762.3 L728.6 751.9 L755.5 741.4 L782.5 731.6 L809.3 722.4 L836.2 713.6 L862.9 705.1 L889.5 696.6 L916.1 688.0 L942.7 679.1 L969.4 670.0 L996.1 661.0 L1022.9 652.1 L1049.7 643.5 L1076.6 635.3 L1103.5 627.6 L1130.4 620.6 L1157.1 613.9 L1183.8 607.4 L1210.4 601.0 L1237.2 594.7 L1263.9 588.8 L1290.6 583.0 L1317.2 577.2 L1343.9 571.5 L1370.5 565.8 L1397.2 560.3 L1423.9 555.1 L1450.5 549.9 L1477.2 544.8 L1503.9 539.9 L1530.7 535.4 L1557.4 531.2 L1584.1 527.0 L1610.9 523.0 L1637.7 519.3 L1664.4 515.7 L1691.1 512.2 L1717.8 508.9 L1744.6 505.7 L1771.3 502.6 L1798.1 499.6 L1824.9 496.8 L1851.8 494.2 L1878.5 491.9 L1905.1 489.8 L1931.9 487.6 L1958.8 485.6 L1967.5 485.0 L1983.9 282.9 L3017.1 282.9 L3017.1 1717.1 L2383.0 1717.1 L2368.9 788.6 L2372.4 787.4 L2343.6 796.6 L2314.8 805.8 L2287.1 814.5 L2260.3 822.7 L2233.6 831.0 L2206.9 839.1 L2180.1 847.2 L2153.3 855.2 L2126.6 863.1 L2099.8 870.8 L2073.0 878.4 L2046.3 885.9 L2019.5 893.4 L1992.9 900.8 L1966.2 908.3 L1939.5 915.8 L1912.9 923.2 L1886.4 930.9 L1859.7 938.7 L1833.0 946.5 L1806.4 954.4 L1779.7 962.0 L1753.0 969.8 L1726.2 977.6 L1699.2 985.3 L1672.3 992.7 L1645.4 999.9 L1618.5 1006.8 L1591.7 1013.5 L1564.9 1020.1 L1538.2 1026.7 L1511.5 1033.4 L1484.8 1040.1 L1458.2 1047.0 L1431.5 1054.1 L1404.8 1061.3 L1378.1 1068.5 L1351.3 1075.8 L1324.5 1082.9 L1297.8 1089.9 L1271.0 1096.8 L1244.3 1103.7 L1217.5 1110.6 L1190.8 1117.4 L1164.1 1124.2 L1137.4 1131.1 L1110.7 1138.1 L1083.9 1145.0 L1057.1 1151.9 L1038.6 1149.8 L1036.9 1160.1 L1036.9 1190.6 L1006.7 1401.6 L904.9 1706.9 L-100.0 1706.9 Z" fill="rgb(11,11,11)"/>
<path d="M-100.0 192.6 L607.4 192.6 L607.4 598.4 L662.4 720.2 L662.4 761.8 L662.4 774.9 L703.6 763.9 L729.3 753.4 L756.1 743.0 L783.0 733.1 L809.9 723.9 L836.7 715.2 L863.4 706.7 L890.0 698.2 L916.6 689.5 L943.3 680.6 L969.9 671.6 L996.6 662.5 L1023.4 653.6 L1050.2 645.0 L1077.1 636.8 L1104.0 629.2 L1130.8 622.2 L1157.5 615.5 L1184.2 609.0 L1210.8 602.7 L1237.5 596.4 L1264.3 590.5 L1291.0 584.8 L1317.6 579.0 L1344.2 573.4 L1370.9 567.8 L1397.6 562.4 L1424.2 557.1 L1450.9 552.0 L1477.6 547.0 L1504.3 542.2 L1531.0 537.7 L1557.7 533.6 L1584.4 529.4 L1611.2 525.4 L1638.0 521.7 L1664.7 518.1 L1691.4 514.7 L1718.1 511.4 L1744.8 508.2 L1771.6 505.1 L1798.4 502.2 L1825.2 499.4 L1852.0 496.9 L1878.7 494.6 L1905.3 492.6 L1932.1 490.3 L1959.0 488.3 L1970.1 487.6 L1986.1 285.1 L3014.9 285.1 L3014.9 1714.9 L2385.3 1714.9 L2372.0 784.2 L2371.4 784.4 L2342.6 793.6 L2313.8 802.8 L2286.1 811.5 L2259.4 819.7 L2232.7 828.0 L2205.9 836.1 L2179.2 844.2 L2152.5 852.2 L2125.7 860.1 L2098.9 867.8 L2072.2 875.5 L2045.4 883.0 L2018.7 890.5 L1992.0 897.9 L1965.4 905.4 L1938.7 912.8 L1912.1 920.3 L1885.5 928.0 L1858.9 935.8 L1832.2 943.6 L1805.5 951.5 L1778.8 959.2 L1752.1 967.1 L1725.3 974.9 L1698.4 982.6 L1671.5 990.0 L1644.7 997.2 L1617.8 1004.2 L1591.0 1011.0 L1564.2 1017.6 L1537.5 1024.2 L1510.8 1030.9 L1484.1 1037.7 L1457.5 1044.6 L1430.9 1051.7 L1404.2 1059.0 L1377.5 1066.3 L1350.7 1073.5 L1323.9 1080.7 L1297.2 1087.7 L1270.4 1094.6 L1243.7 1101.6 L1217.0 1108.5 L1190.3 1115.3 L1163.6 1122.2 L1136.9 1129.1 L1110.2 1136.1 L1083.4 1143.1 L1056.6 1150.0 L1037.4 1148.9 L1035.9 1160.1 L1035.9 1190.5 L1005.8 1401.4 L904.3 1705.9 L-100.0 1705.9 Z" fill="rgb(18,18,18)"/>
<path d="M-100.0 193.7 L606.3 193.7 L606.3 598.6 L661.3 720.4 L661.3 761.8 L661.3 776.2 L704.1 765.5 L729.9 755.0 L756.7 744.6 L783.6 734.7 L810.4 725.5 L837.2 716.8 L863.9 708.2 L890.5 699.7 L917.2 691.1 L943.8 682.2 L970.4 673.1 L997.1 664.1 L1023.9 655.2 L1050.7 646.6 L1077.5 638.4 L1104.4 630.8 L1131.2 623.8 L1157.9 617.1 L1184.6 610.7 L1211.2 604.4 L1237.9 598.1 L1264.6 592.3 L1291.3 586.6 L1318.0 580.9 L1344.6 575.3 L1371.3 569.8 L1397.9 564.4 L1424.6 559.2 L1451.3 554.2 L1477.9 549.2 L1504.6 544.5 L1531.4 540.0 L1558.1 535.9 L1584.8 531.7 L1611.5 527.8 L1638.3 524.1 L1665.0 520.6 L1691.7 517.2 L1718.4 514.0 L1745.1 510.8 L1771.9 507.7 L1798.7 504.8 L1825.4 502.1 L1852.2 499.6 L1878.9 497.4 L1905.5 495.3 L1932.3 493.1 L1959.2 491.1 L1972.6 490.2 L1988.2 287.4 L3012.6 287.4 L3012.6 1712.6 L2387.5 1712.6 L2375.2 779.9 L2370.4 781.4 L2341.7 790.6 L2312.9 799.8 L2285.2 808.5 L2258.5 816.7 L2231.8 825.0 L2205.0 833.1 L2178.3 841.2 L2151.6 849.2 L2124.8 857.1 L2098.1 864.9 L2071.3 872.5 L2044.6 880.0 L2017.9 887.5 L1991.2 895.0 L1964.5 902.4 L1937.8 909.9 L1911.2 917.4 L1884.7 925.1 L1858.0 932.9 L1831.3 940.8 L1804.7 948.7 L1778.0 956.4 L1751.3 964.3 L1724.5 972.2 L1697.7 979.9 L1670.8 987.4 L1644.0 994.6 L1617.1 1001.6 L1590.3 1008.4 L1563.6 1015.1 L1536.9 1021.7 L1510.2 1028.5 L1483.5 1035.3 L1456.9 1042.2 L1430.2 1049.4 L1403.6 1056.7 L1376.8 1064.0 L1350.1 1071.3 L1323.3 1078.4 L1296.6 1085.5 L1269.9 1092.5 L1243.1 1099.4 L1216.4 1106.3 L1189.7 1113.2 L1163.0 1120.1 L1136.3 1127.1 L1109.6 1134.1 L1082.9 1141.1 L1056.1 1148.0 L1036.3 1148.0 L1035.0 1160.1 L1035.0 1190.5 L1004.9 1401.2 L903.6 1705.0 L-100.0 1705.0 Z" fill="rgb(27,27,27)"/>
<path d="M-100.0 194.9 L605.1 194.9 L605.1 598.9 L660.1 720.6 L660.1 761.8 L660.1 777.6 L704.5 767.2 L730.5 756.6 L757.3 746.1 L784.1 736.3 L810.9 727.1 L837.7 718.3 L864.4 709.8 L891.1 701.3 L917.7 692.6 L944.3 683.7 L971.0 674.7 L997.7 665.6 L1024.4 656.7 L1051.2 648.1 L1078.0 639.9 L1104.8 632.3 L1131.6 625.4 L1158.3 618.8 L1184.9 612.4 L1211.6 606.1 L1238.3 599.9 L1265.0 594.0 L1291.7 588.4 L1318.3 582.7 L1345.0 577.2 L1371.6 571.7 L1398.3 566.4 L1425.0 561.3 L1451.6 556.3 L1478.3 551.4 L1505.0 546.7 L1531.7 542.3 L1558.4 538.2 L1585.1 534.1 L1611.9 530.2 L1638.6 526.5 L1665.3 523.1 L1692.0 519.7 L1718.7 516.5 L1745.4 513.4 L1772.2 510.3 L1798.9 507.4 L1825.7 504.7 L1852.4 502.3 L1879.1 500.1 L1905.7 498.0 L1932.5 495.8 L1959.4 493.8 L1975.2 492.8 L1990.4 289.7 L3010.3 289.7 L3010.3 1710.3 L2389.8 1710.3 L2378.4 775.5 L2369.4 778.3 L2340.7 787.6 L2311.9 796.7 L2284.3 805.4 L2257.5 813.7 L2230.8 822.0 L2204.1 830.1 L2177.4 838.2 L2150.7 846.2 L2123.9 854.2 L2097.2 861.9 L2070.5 869.6 L2043.8 877.1 L2017.1 884.6 L1990.4 892.0 L1963.7 899.5 L1937.0 907.0 L1910.4 914.5 L1883.8 922.2 L1857.2 930.1 L1830.5 937.9 L1803.8 945.8 L1777.1 953.6 L1750.4 961.5 L1723.7 969.4 L1696.9 977.3 L1670.0 984.7 L1643.2 992.0 L1616.4 999.0 L1589.7 1005.8 L1562.9 1012.5 L1536.2 1019.2 L1509.5 1026.0 L1482.9 1032.9 L1456.2 1039.9 L1429.6 1047.0 L1402.9 1054.4 L1376.2 1061.7 L1349.5 1069.0 L1322.7 1076.2 L1296.0 1083.3 L1269.3 1090.3 L1242.6 1097.3 L1215.9 1104.2 L1189.2 1111.2 L1162.5 1118.1 L1135.8 1125.1 L1109.1 1132.1 L1082.4 1139.1 L1055.6 1146.1 L1035.1 1147.2 L1034.1 1160.1 L1034.1 1190.4 L1004.0 1400.9 L903.0 1704.1 L-100.0 1704.1 Z" fill="rgb(39,39,39)"/>
<path d="M-100.0 196.0 L604.0 196.0 L604.0 599.1 L659.0 720.9 L659.0 761.8 L659.0 779.0 L705.0 768.8 L731.1 758.1 L757.9 747.7 L784.7 737.9 L811.5 728.7 L838.2 719.9 L864.9 711.4 L891.6 702.9 L918.2 694.2 L944.8 685.3 L971.5 676.2 L998.2 667.1 L1024.9 658.2 L1051.6 649.6 L1078.4 641.5 L1105.2 633.9 L1132.0 627.0 L1158.6 620.4 L1185.3 614.0 L1212.0 607.8 L1238.7 601.6 L1265.4 595.8 L1292.1 590.2 L1318.7 584.6 L1345.4 579.1 L1372.0 573.7 L1398.7 568.4 L1425.4 563.4 L1452.0 558.5 L1478.7 553.6 L1505.4 549.0 L1532.1 544.6 L1558.8 540.6 L1585.5 536.5 L1612.2 532.6 L1638.9 529.0 L1665.6 525.5 L1692.3 522.2 L1719.0 519.0 L1745.7 515.9 L1772.4 512.9 L1799.2 510.0 L1825.9 507.4 L1852.6 504.9 L1879.3 502.8 L1905.9 500.8 L1932.7 498.5 L1959.6 496.5 L1977.8 495.3 L1992.5 292.0 L3008.0 292.0 L3008.0 1708.0 L2392.1 1708.0 L2381.5 771.1 L2368.4 775.3 L2339.7 784.5 L2311.0 793.7 L2283.3 802.4 L2256.6 810.7 L2229.9 819.0 L2203.2 827.2 L2176.5 835.3 L2149.8 843.3 L2123.1 851.2 L2096.3 859.0 L2069.6 866.6 L2042.9 874.2 L2016.2 881.6 L1989.6 889.1 L1962.9 896.6 L1936.2 904.1 L1909.6 911.6 L1883.0 919.3 L1856.3 927.2 L1829.6 935.1 L1803.0 943.0 L1776.3 950.8 L1749.6 958.8 L1722.9 966.7 L1696.1 974.6 L1669.3 982.0 L1642.5 989.4 L1615.7 996.4 L1589.0 1003.3 L1562.3 1010.0 L1535.6 1016.8 L1508.9 1023.6 L1482.2 1030.4 L1455.6 1037.5 L1428.9 1044.7 L1402.3 1052.0 L1375.6 1059.4 L1348.8 1066.8 L1322.1 1074.0 L1295.4 1081.1 L1268.7 1088.1 L1242.0 1095.1 L1215.3 1102.1 L1188.6 1109.1 L1161.9 1116.0 L1135.2 1123.0 L1108.5 1130.1 L1081.8 1137.2 L1055.1 1144.2 L1034.0 1146.3 L1033.2 1160.1 L1033.2 1190.4 L1003.1 1400.7 L902.3 1703.2 L-100.0 1703.2 Z" fill="rgb(54,54,54)"/>
<path d="M-100.0 197.1 L602.9 197.1 L602.9 599.4 L657.9 721.1 L657.9 761.8 L657.9 780.3 L705.5 770.4 L731.8 759.7 L758.5 749.3 L785.3 739.4 L812.0 730.3 L838.7 721.5 L865.4 713.0 L892.1 704.4 L918.7 695.8 L945.4 686.8 L972.0 677.7 L998.7 668.7 L1025.4 659.8 L1052.1 651.2 L1078.9 643.0 L1105.6 635.4 L1132.3 628.6 L1159.0 622.0 L1185.7 615.7 L1212.4 609.5 L1239.1 603.3 L1265.7 597.6 L1292.4 591.9 L1319.1 586.4 L1345.7 581.0 L1372.4 575.6 L1399.1 570.4 L1425.7 565.5 L1452.4 560.6 L1479.1 555.8 L1505.7 551.2 L1532.5 546.9 L1559.1 542.9 L1585.8 538.8 L1612.5 535.0 L1639.2 531.4 L1665.9 528.0 L1692.6 524.7 L1719.3 521.5 L1746.0 518.5 L1772.7 515.5 L1799.4 512.7 L1826.2 510.0 L1852.9 507.6 L1879.5 505.5 L1906.1 503.5 L1933.0 501.3 L1959.8 499.3 L1980.4 497.9 L1994.6 294.3 L3005.7 294.3 L3005.7 1705.7 L2394.3 1705.7 L2384.7 766.7 L2367.5 772.3 L2338.7 781.5 L2310.0 790.7 L2282.4 799.4 L2255.7 807.7 L2229.0 816.0 L2202.3 824.2 L2175.6 832.3 L2148.9 840.3 L2122.2 848.2 L2095.5 856.0 L2068.8 863.6 L2042.1 871.2 L2015.4 878.7 L1988.7 886.2 L1962.1 893.7 L1935.4 901.2 L1908.7 908.7 L1882.1 916.5 L1855.5 924.3 L1828.8 932.2 L1802.1 940.1 L1775.4 948.0 L1748.8 956.0 L1722.1 964.0 L1695.3 971.9 L1668.5 979.4 L1641.8 986.7 L1615.1 993.8 L1588.3 1000.7 L1561.6 1007.5 L1534.9 1014.3 L1508.3 1021.2 L1481.6 1028.0 L1454.9 1035.1 L1428.3 1042.4 L1401.6 1049.7 L1374.9 1057.1 L1348.2 1064.5 L1321.5 1071.7 L1294.8 1078.9 L1268.1 1086.0 L1241.4 1093.0 L1214.7 1100.0 L1188.0 1107.0 L1161.4 1114.0 L1134.7 1121.0 L1108.0 1128.1 L1081.3 1135.2 L1054.6 1142.2 L1032.9 1145.4 L1032.3 1160.1 L1032.3 1190.3 L1002.2 1400.5 L901.6 1702.3 L-100.0 1702.3 Z" fill="rgb(72,72,72)"/>
<path d="M-100.0 198.3 L601.7 198.3 L601.7 599.6 L656.7 721.4 L656.7 761.8 L656.7 781.7 L706.0 772.0 L732.4 761.3 L759.1 750.8 L785.8 741.0 L812.5 731.8 L839.2 723.1 L865.9 714.5 L892.6 706.0 L919.2 697.3 L945.9 688.4 L972.5 679.3 L999.2 670.2 L1025.9 661.3 L1052.6 652.7 L1079.3 644.5 L1106.0 637.0 L1132.7 630.1 L1159.4 623.6 L1186.1 617.3 L1212.8 611.2 L1239.4 605.0 L1266.1 599.3 L1292.8 593.7 L1319.4 588.2 L1346.1 582.9 L1372.8 577.6 L1399.4 572.5 L1426.1 567.6 L1452.8 562.7 L1479.4 558.0 L1506.1 553.5 L1532.8 549.2 L1559.5 545.2 L1586.2 541.2 L1612.8 537.4 L1639.5 533.8 L1666.2 530.4 L1692.9 527.2 L1719.6 524.1 L1746.3 521.0 L1773.0 518.1 L1799.7 515.3 L1826.4 512.7 L1853.1 510.3 L1879.7 508.2 L1906.4 506.2 L1933.2 504.0 L1960.0 502.0 L1983.0 500.5 L1996.8 296.6 L3003.4 296.6 L3003.4 1703.4 L2396.6 1703.4 L2387.8 762.3 L2366.5 769.2 L2337.8 778.5 L2309.0 787.7 L2281.4 796.4 L2254.7 804.7 L2228.1 813.0 L2201.4 821.2 L2174.7 829.3 L2148.0 837.3 L2121.3 845.3 L2094.6 853.0 L2067.9 860.7 L2041.3 868.3 L2014.6 875.8 L1987.9 883.3 L1961.2 890.8 L1934.6 898.3 L1907.9 905.8 L1881.3 913.6 L1854.6 921.5 L1827.9 929.4 L1801.3 937.3 L1774.6 945.2 L1747.9 953.2 L1721.2 961.3 L1694.5 969.2 L1667.8 976.7 L1641.1 984.1 L1614.4 991.2 L1587.7 998.2 L1561.0 1005.0 L1534.3 1011.8 L1507.6 1018.7 L1481.0 1025.6 L1454.3 1032.7 L1427.6 1040.0 L1401.0 1047.4 L1374.3 1054.8 L1347.6 1062.2 L1320.9 1069.5 L1294.2 1076.7 L1267.5 1083.8 L1240.9 1090.8 L1214.2 1097.9 L1187.5 1104.9 L1160.8 1111.9 L1134.1 1119.0 L1107.5 1126.1 L1080.8 1133.2 L1054.1 1140.3 L1031.7 1144.5 L1031.4 1160.1 L1031.4 1190.2 L1001.3 1400.3 L901.0 1701.4 L-100.0 1701.4 Z" fill="rgb(93,93,93)"/>
<path d="M-100.0 199.4 L600.6 199.4 L600.6 599.9 L655.6 721.6 L655.6 761.8 L655.6 783.1 L706.4 773.7 L733.0 762.8 L759.7 752.4 L786.4 742.6 L813.1 733.4 L839.7 724.6 L866.4 716.1 L893.1 707.6 L919.7 698.9 L946.4 689.9 L973.1 680.8 L999.7 671.8 L1026.4 662.9 L1053.1 654.2 L1079.8 646.1 L1106.5 638.5 L1133.1 631.7 L1159.8 625.2 L1186.5 619.0 L1213.1 612.8 L1239.8 606.7 L1266.5 601.1 L1293.2 595.5 L1319.8 590.1 L1346.5 584.8 L1373.1 579.6 L1399.8 574.5 L1426.5 569.7 L1453.1 564.9 L1479.8 560.2 L1506.5 555.8 L1533.2 551.5 L1559.8 547.5 L1586.5 543.5 L1613.2 539.8 L1639.8 536.2 L1666.5 532.9 L1693.2 529.7 L1719.9 526.6 L1746.5 523.6 L1773.2 520.6 L1800.0 517.9 L1826.6 515.3 L1853.3 513.0 L1879.9 510.9 L1906.6 509.0 L1933.4 506.7 L1960.2 504.7 L1985.5 503.1 L1998.9 298.9 L3001.1 298.9 L3001.1 1701.1 L2398.9 1701.1 L2391.0 757.9 L2365.5 766.2 L2336.8 775.5 L2308.1 784.7 L2280.5 793.4 L2253.8 801.7 L2227.1 810.0 L2200.5 818.2 L2173.8 826.3 L2147.1 834.4 L2120.4 842.3 L2093.8 850.1 L2067.1 857.7 L2040.4 865.3 L2013.7 872.8 L1987.1 880.3 L1960.4 887.9 L1933.7 895.4 L1907.1 902.9 L1880.4 910.7 L1853.8 918.6 L1827.1 926.5 L1800.4 934.4 L1773.8 942.4 L1747.1 950.5 L1720.4 958.5 L1693.7 966.5 L1667.0 974.0 L1640.4 981.5 L1613.7 988.6 L1587.0 995.6 L1560.3 1002.5 L1533.7 1009.3 L1507.0 1016.3 L1480.3 1023.2 L1453.7 1030.4 L1427.0 1037.7 L1400.3 1045.1 L1373.7 1052.6 L1347.0 1060.0 L1320.3 1067.3 L1293.6 1074.5 L1267.0 1081.6 L1240.3 1088.7 L1213.6 1095.8 L1186.9 1102.8 L1160.3 1109.9 L1133.6 1117.0 L1106.9 1124.1 L1080.3 1131.3 L1053.6 1138.3 L1030.6 1143.6 L1030.5 1160.1 L1030.5 1190.2 L1000.4 1400.1 L900.3 1700.5 L-100.0 1700.5 Z" fill="rgb(116,116,116)"/>
<path d="M-100.0 200.6 L599.4 200.6 L599.4 600.1 L654.4 721.9 L654.4 761.8 L654.4 784.4 L706.9 775.3 L733.6 764.4 L760.3 754.0 L786.9 744.2 L813.6 735.0 L840.3 726.2 L866.9 717.7 L893.6 709.1 L920.3 700.4 L946.9 691.5 L973.6 682.4 L1000.3 673.3 L1026.9 664.4 L1053.6 655.8 L1080.2 647.6 L1106.9 640.1 L1133.5 633.3 L1160.2 626.9 L1186.9 620.6 L1213.5 614.5 L1240.2 608.5 L1266.9 602.8 L1293.5 597.3 L1320.2 591.9 L1346.9 586.7 L1373.5 581.5 L1400.2 576.5 L1426.9 571.7 L1453.5 567.0 L1480.2 562.5 L1506.9 558.0 L1533.5 553.8 L1560.2 549.9 L1586.8 545.9 L1613.5 542.2 L1640.2 538.7 L1666.8 535.3 L1693.5 532.2 L1720.1 529.1 L1746.8 526.1 L1773.5 523.2 L1800.2 520.5 L1826.9 518.0 L1853.5 515.7 L1880.1 513.6 L1906.8 511.7 L1933.6 509.5 L1960.4 507.5 L1988.1 505.6 L2001.1 301.1 L2998.9 301.1 L2998.9 1698.9 L2401.1 1698.9 L2394.2 753.6 L2364.5 763.2 L2335.8 772.4 L2307.1 781.7 L2279.5 790.4 L2252.9 798.7 L2226.2 807.0 L2199.5 815.2 L2172.9 823.3 L2146.2 831.4 L2119.6 839.3 L2092.9 847.1 L2066.2 854.8 L2039.6 862.4 L2012.9 869.9 L1986.3 877.4 L1959.6 884.9 L1932.9 892.5 L1906.3 900.0 L1879.6 907.8 L1852.9 915.7 L1826.2 923.6 L1799.6 931.6 L1772.9 939.6 L1746.2 947.7 L1719.6 955.8 L1692.9 963.8 L1666.3 971.4 L1639.6 978.8 L1613.0 986.0 L1586.3 993.0 L1559.7 999.9 L1533.0 1006.8 L1506.3 1013.8 L1479.7 1020.8 L1453.0 1028.0 L1426.3 1035.3 L1399.7 1042.8 L1373.0 1050.3 L1346.4 1057.7 L1319.7 1065.1 L1293.0 1072.3 L1266.4 1079.4 L1239.7 1086.6 L1213.1 1093.7 L1186.4 1100.7 L1159.7 1107.8 L1133.1 1114.9 L1106.4 1122.1 L1079.7 1129.3 L1053.1 1136.4 L1029.4 1142.7 L1029.5 1160.1 L1029.5 1190.1 L999.6 1399.9 L899.7 1699.5 L-100.0 1699.5 Z" fill="rgb(139,139,139)"/>
<path d="M-100.0 201.7 L598.3 201.7 L598.3 600.4 L653.3 722.1 L653.3 761.8 L653.3 785.8 L707.4 776.9 L734.3 765.9 L760.9 755.5 L787.5 745.7 L814.1 736.6 L840.8 727.8 L867.4 719.3 L894.1 710.7 L920.8 702.0 L947.5 693.0 L974.1 683.9 L1000.8 674.8 L1027.4 665.9 L1054.1 657.3 L1080.7 649.1 L1107.3 641.6 L1133.9 634.9 L1160.6 628.5 L1187.2 622.3 L1213.9 616.2 L1240.6 610.2 L1267.2 604.6 L1293.9 599.1 L1320.6 593.8 L1347.2 588.6 L1373.9 583.5 L1400.6 578.5 L1427.2 573.8 L1453.9 569.2 L1480.6 564.7 L1507.2 560.3 L1533.9 556.1 L1560.5 552.2 L1587.2 548.3 L1613.8 544.6 L1640.5 541.1 L1667.1 537.8 L1693.8 534.7 L1720.4 531.6 L1747.1 528.7 L1773.8 525.8 L1800.5 523.1 L1827.1 520.6 L1853.7 518.3 L1880.3 516.3 L1907.0 514.4 L1933.8 512.2 L1960.6 510.2 L1990.7 508.2 L2003.2 303.4 L2996.6 303.4 L2996.6 1696.6 L2403.4 1696.6 L2397.3 749.2 L2363.5 760.1 L2334.8 769.4 L2306.2 778.6 L2278.6 787.4 L2251.9 795.7 L2225.3 804.0 L2198.6 812.2 L2172.0 820.4 L2145.3 828.4 L2118.7 836.3 L2092.0 844.2 L2065.4 851.8 L2038.7 859.4 L2012.1 867.0 L1985.4 874.5 L1958.8 882.0 L1932.1 889.6 L1905.4 897.1 L1878.7 904.9 L1852.1 912.9 L1825.4 920.8 L1798.7 928.7 L1772.1 936.8 L1745.4 944.9 L1718.8 953.1 L1692.2 961.1 L1665.5 968.7 L1638.9 976.2 L1612.3 983.4 L1585.7 990.5 L1559.0 997.4 L1532.4 1004.3 L1505.7 1011.4 L1479.0 1018.4 L1452.4 1025.6 L1425.7 1033.0 L1399.0 1040.5 L1372.4 1048.0 L1345.7 1055.5 L1319.1 1062.8 L1292.4 1070.1 L1265.8 1077.3 L1239.1 1084.4 L1212.5 1091.5 L1185.8 1098.6 L1159.2 1105.8 L1132.5 1112.9 L1105.9 1120.1 L1079.2 1127.3 L1052.6 1134.5 L1028.3 1141.8 L1028.6 1160.1 L1028.6 1190.0 L998.7 1399.7 L899.0 1698.6 L-100.0 1698.6 Z" fill="rgb(162,162,162)"/>
<path d="M-100.0 202.9 L597.1 202.9 L597.1 600.6 L652.1 722.4 L652.1 761.8 L652.1 787.2 L707.9 778.6 L734.9 767.5 L761.5 757.1 L788.1 747.3 L814.7 738.1 L841.3 729.4 L867.9 720.8 L894.6 712.3 L921.3 703.6 L948.0 694.6 L974.6 685.5 L1001.3 676.4 L1027.9 667.5 L1054.5 658.9 L1081.1 650.7 L1107.7 643.2 L1134.3 636.5 L1161.0 630.1 L1187.6 623.9 L1214.3 617.9 L1240.9 611.9 L1267.6 606.3 L1294.2 600.9 L1320.9 595.6 L1347.6 590.5 L1374.3 585.4 L1400.9 580.6 L1427.6 575.9 L1454.3 571.3 L1480.9 566.9 L1507.6 562.6 L1534.2 558.4 L1560.9 554.5 L1587.5 550.6 L1614.1 547.0 L1640.8 543.5 L1667.4 540.3 L1694.1 537.1 L1720.7 534.1 L1747.4 531.2 L1774.1 528.4 L1800.7 525.7 L1827.4 523.3 L1854.0 521.0 L1880.5 519.1 L1907.2 517.2 L1934.0 514.9 L1960.7 513.0 L1993.3 510.8 L2005.4 305.7 L2994.3 305.7 L2994.3 1694.3 L2405.7 1694.3 L2400.5 744.8 L2362.5 757.1 L2333.9 766.4 L2305.2 775.6 L2277.6 784.4 L2251.0 792.7 L2224.4 801.0 L2197.7 809.2 L2171.1 817.4 L2144.4 825.4 L2117.8 833.4 L2091.2 841.2 L2064.6 848.9 L2037.9 856.5 L2011.3 864.0 L1984.6 871.5 L1957.9 879.1 L1931.3 886.7 L1904.6 894.2 L1877.9 902.1 L1851.2 910.0 L1824.5 917.9 L1797.9 925.9 L1771.2 934.0 L1744.6 942.2 L1717.9 950.3 L1691.4 958.4 L1664.8 966.1 L1638.2 973.6 L1611.6 980.8 L1585.0 987.9 L1558.4 994.9 L1531.7 1001.9 L1505.1 1008.9 L1478.4 1016.0 L1451.7 1023.2 L1425.0 1030.7 L1398.4 1038.2 L1371.7 1045.7 L1345.1 1053.2 L1318.5 1060.6 L1291.9 1067.9 L1265.2 1075.1 L1238.6 1082.3 L1211.9 1089.4 L1185.3 1096.6 L1158.6 1103.7 L1132.0 1110.9 L1105.3 1118.1 L1078.7 1125.4 L1052.1 1132.5 L1027.1 1140.9 L1027.7 1160.1 L1027.7 1190.0 L997.8 1399.5 L898.4 1697.7 L-100.0 1697.7 Z" fill="rgb(183,183,183)"/>
<path d="M-100.0 204.0 L596.0 204.0 L596.0 600.9 L651.0 722.6 L651.0 761.8 L651.0 788.5 L708.3 780.2 L735.5 769.1 L762.1 758.7 L788.6 748.9 L815.2 739.7 L841.8 731.0 L868.4 722.4 L895.1 713.9 L921.8 705.1 L948.5 696.1 L975.2 687.0 L1001.8 677.9 L1028.4 669.0 L1055.0 660.4 L1081.6 652.2 L1108.1 644.7 L1134.7 638.1 L1161.4 631.7 L1188.0 625.6 L1214.7 619.6 L1241.3 613.6 L1268.0 608.1 L1294.6 602.6 L1321.3 597.4 L1348.0 592.4 L1374.6 587.4 L1401.3 582.6 L1428.0 578.0 L1454.6 573.5 L1481.3 569.1 L1508.0 564.8 L1534.6 560.7 L1561.2 556.8 L1587.9 553.0 L1614.5 549.4 L1641.1 545.9 L1667.7 542.7 L1694.4 539.6 L1721.0 536.7 L1747.7 533.8 L1774.3 531.0 L1801.0 528.3 L1827.6 525.9 L1854.2 523.7 L1880.7 521.8 L1907.4 519.9 L1934.2 517.7 L1960.9 515.7 L1995.9 513.4 L2007.5 308.0 L2992.0 308.0 L2992.0 1692.0 L2407.9 1692.0 L2403.7 740.4 L2361.6 754.1 L2332.9 763.4 L2304.2 772.6 L2276.7 781.4 L2250.1 789.7 L2223.4 798.0 L2196.8 806.3 L2170.2 814.4 L2143.6 822.5 L2116.9 830.4 L2090.3 838.2 L2063.7 845.9 L2037.1 853.5 L2010.4 861.1 L1983.8 868.6 L1957.1 876.2 L1930.5 883.8 L1903.8 891.3 L1877.0 899.2 L1850.4 907.1 L1823.7 915.1 L1797.0 923.0 L1770.4 931.2 L1743.7 939.4 L1717.1 947.6 L1690.6 955.7 L1664.0 963.4 L1637.5 970.9 L1610.9 978.3 L1584.3 985.4 L1557.7 992.4 L1531.1 999.4 L1504.4 1006.5 L1477.8 1013.6 L1451.1 1020.9 L1424.4 1028.3 L1397.7 1035.9 L1371.1 1043.4 L1344.5 1051.0 L1317.9 1058.4 L1291.3 1065.7 L1264.6 1072.9 L1238.0 1080.1 L1211.4 1087.3 L1184.7 1094.5 L1158.1 1101.6 L1131.4 1108.9 L1104.8 1116.2 L1078.2 1123.4 L1051.6 1130.6 L1026.0 1140.0 L1026.8 1160.1 L1026.8 1189.9 L996.9 1399.3 L897.7 1696.8 L-100.0 1696.8 Z" fill="rgb(201,201,201)"/>
<path d="M-100.0 205.1 L594.9 205.1 L594.9 601.1 L649.9 722.9 L649.9 761.8 L649.9 789.9 L708.8 781.8 L736.1 770.6 L762.7 760.2 L789.2 750.5 L815.7 741.3 L842.3 732.5 L868.9 724.0 L895.6 715.4 L922.3 706.7 L949.0 697.7 L975.7 688.5 L1002.3 679.5 L1028.9 670.5 L1055.5 661.9 L1082.0 653.8 L1108.5 646.3 L1135.1 639.7 L1161.7 633.4 L1188.4 627.3 L1215.1 621.3 L1241.7 615.3 L1268.3 609.8 L1295.0 604.4 L1321.7 599.3 L1348.3 594.3 L1375.0 589.4 L1401.7 584.6 L1428.3 580.1 L1455.0 575.6 L1481.7 571.3 L1508.3 567.1 L1534.9 563.0 L1561.6 559.2 L1588.2 555.3 L1614.8 551.7 L1641.4 548.4 L1668.0 545.2 L1694.7 542.1 L1721.3 539.2 L1747.9 536.3 L1774.6 533.6 L1801.3 531.0 L1827.9 528.6 L1854.4 526.4 L1880.9 524.5 L1907.6 522.6 L1934.5 520.4 L1961.1 518.4 L1998.5 516.0 L2009.6 310.3 L2989.7 310.3 L2989.7 1689.7 L2410.2 1689.7 L2406.8 736.0 L2360.6 751.0 L2331.9 760.4 L2303.3 769.6 L2275.7 778.4 L2249.1 786.7 L2222.5 795.0 L2195.9 803.3 L2169.3 811.4 L2142.7 819.5 L2116.1 827.4 L2089.5 835.3 L2062.9 843.0 L2036.2 850.6 L2009.6 858.1 L1983.0 865.7 L1956.3 873.3 L1929.6 880.9 L1902.9 888.4 L1876.2 896.3 L1849.5 904.2 L1822.8 912.2 L1796.2 920.2 L1769.5 928.4 L1742.9 936.6 L1716.3 944.9 L1689.8 953.0 L1663.3 960.7 L1636.8 968.3 L1610.2 975.7 L1583.7 982.8 L1557.1 989.8 L1530.4 996.9 L1503.8 1004.1 L1477.1 1011.2 L1450.4 1018.5 L1423.7 1026.0 L1397.1 1033.5 L1370.5 1041.2 L1343.9 1048.7 L1317.3 1056.2 L1290.7 1063.5 L1264.1 1070.8 L1237.4 1078.0 L1210.8 1085.2 L1184.2 1092.4 L1157.5 1099.6 L1130.9 1106.9 L1104.3 1114.2 L1077.6 1121.5 L1051.1 1128.6 L1024.9 1139.1 L1025.9 1160.1 L1025.9 1189.8 L996.0 1399.1 L897.0 1695.9 L-100.0 1695.9 Z" fill="rgb(216,216,216)"/>
<path d="M-100.0 206.3 L593.7 206.3 L593.7 601.4 L648.7 723.1 L648.7 761.8 L648.7 791.3 L709.3 783.5 L736.8 772.2 L763.3 761.8 L789.7 752.0 L816.3 742.9 L842.8 734.1 L869.4 725.6 L896.1 717.0 L922.8 708.2 L949.6 699.2 L976.2 690.1 L1002.9 681.0 L1029.4 672.1 L1056.0 663.5 L1082.5 655.3 L1109.0 647.8 L1135.5 641.3 L1162.1 635.0 L1188.8 628.9 L1215.5 623.0 L1242.1 617.1 L1268.7 611.6 L1295.3 606.2 L1322.0 601.1 L1348.7 596.2 L1375.4 591.3 L1402.1 586.6 L1428.7 582.2 L1455.4 577.8 L1482.1 573.5 L1508.7 569.4 L1535.3 565.3 L1561.9 561.5 L1588.5 557.7 L1615.1 554.1 L1641.7 550.8 L1668.3 547.6 L1694.9 544.6 L1721.6 541.7 L1748.2 538.9 L1774.9 536.2 L1801.5 533.6 L1828.1 531.2 L1854.6 529.1 L1881.1 527.2 L1907.9 525.4 L1934.7 523.1 L1961.3 521.2 L2001.0 518.5 L2011.8 312.6 L2987.4 312.6 L2987.4 1687.4 L2412.5 1687.4 L2410.0 731.6 L2359.6 748.0 L2330.9 757.3 L2302.3 766.6 L2274.8 775.3 L2248.2 783.7 L2221.6 792.0 L2195.0 800.3 L2168.4 808.4 L2141.8 816.5 L2115.2 824.5 L2088.6 832.3 L2062.0 840.0 L2035.4 847.6 L2008.8 855.2 L1982.1 862.8 L1955.5 870.4 L1928.8 877.9 L1902.1 885.5 L1875.3 893.4 L1848.7 901.4 L1822.0 909.3 L1795.3 917.3 L1768.7 925.6 L1742.1 933.9 L1715.5 942.2 L1689.0 950.3 L1662.5 958.1 L1636.0 965.7 L1609.5 973.1 L1583.0 980.2 L1556.4 987.3 L1529.8 994.4 L1503.2 1001.6 L1476.5 1008.8 L1449.8 1016.1 L1423.1 1023.6 L1396.4 1031.2 L1369.8 1038.9 L1343.2 1046.5 L1316.7 1053.9 L1290.1 1061.3 L1263.5 1068.6 L1236.9 1075.9 L1210.3 1083.1 L1183.6 1090.3 L1157.0 1097.5 L1130.4 1104.8 L1103.7 1112.2 L1077.1 1119.5 L1050.6 1126.7 L1023.7 1138.2 L1025.0 1160.1 L1025.0 1189.8 L995.1 1398.8 L896.4 1695.0 L-100.0 1695.0 Z" fill="rgb(228,228,228)"/>
<path d="M-100.0 207.4 L592.6 207.4 L592.6 601.6 L647.6 723.4 L647.6 761.8 L647.6 792.6 L709.7 785.1 L737.4 773.8 L763.9 763.4 L790.3 753.6 L816.8 744.5 L843.3 735.7 L869.9 727.1 L896.6 718.6 L923.4 709.8 L950.1 700.8 L976.7 691.6 L1003.4 682.5 L1029.9 673.6 L1056.5 665.0 L1082.9 656.8 L1109.4 649.4 L1135.9 642.9 L1162.5 636.6 L1189.2 630.6 L1215.8 624.6 L1242.5 618.8 L1269.1 613.3 L1295.7 608.0 L1322.4 602.9 L1349.1 598.1 L1375.8 593.3 L1402.4 588.6 L1429.1 584.2 L1455.8 579.9 L1482.4 575.7 L1509.1 571.6 L1535.6 567.6 L1562.3 563.8 L1588.9 560.1 L1615.5 556.5 L1642.0 553.2 L1668.6 550.1 L1695.2 547.1 L1721.9 544.2 L1748.5 541.4 L1775.2 538.7 L1801.8 536.2 L1828.3 533.8 L1854.8 531.7 L1881.3 529.9 L1908.1 528.1 L1934.9 525.9 L1961.5 523.9 L2003.6 521.1 L2013.9 314.9 L2985.1 314.9 L2985.1 1685.1 L2414.7 1685.1 L2413.2 727.3 L2358.6 745.0 L2330.0 754.3 L2301.3 763.6 L2273.9 772.3 L2247.3 780.7 L2220.7 789.0 L2194.1 797.3 L2167.5 805.5 L2140.9 813.5 L2114.3 821.5 L2087.8 829.3 L2061.2 837.1 L2034.6 844.7 L2008.0 852.3 L1981.3 859.8 L1954.6 867.4 L1928.0 875.0 L1901.3 882.6 L1874.5 890.5 L1847.8 898.5 L1821.1 906.5 L1794.5 914.5 L1767.8 922.8 L1741.2 931.1 L1714.7 939.4 L1688.2 947.6 L1661.8 955.4 L1635.3 963.1 L1608.8 970.5 L1582.3 977.7 L1555.8 984.8 L1529.1 991.9 L1502.5 999.2 L1475.9 1006.4 L1449.1 1013.7 L1422.4 1021.3 L1395.8 1028.9 L1369.2 1036.6 L1342.6 1044.2 L1316.1 1051.7 L1289.5 1059.1 L1262.9 1066.4 L1236.3 1073.7 L1209.7 1081.0 L1183.1 1088.2 L1156.4 1095.5 L1129.8 1102.8 L1103.2 1110.2 L1076.6 1117.5 L1050.1 1124.8 L1022.6 1137.3 L1024.1 1160.1 L1024.1 1189.7 L994.2 1398.6 L895.7 1694.1 L-100.0 1694.1 Z" fill="rgb(237,237,237)"/>
<path d="M-100.0 208.6 L591.4 208.6 L591.4 601.8 L646.4 723.6 L646.4 761.8 L646.4 794.0 L710.2 786.7 L738.0 775.3 L764.5 764.9 L790.9 755.2 L817.3 746.0 L843.8 737.3 L870.4 728.7 L897.1 720.1 L923.9 711.3 L950.6 702.3 L977.3 693.2 L1003.9 684.1 L1030.5 675.1 L1057.0 666.5 L1083.4 658.4 L1109.8 650.9 L1136.3 644.4 L1162.9 638.2 L1189.5 632.2 L1216.2 626.3 L1242.8 620.5 L1269.4 615.1 L1296.1 609.8 L1322.8 604.8 L1349.5 600.0 L1376.1 595.3 L1402.8 590.7 L1429.5 586.3 L1456.2 582.1 L1482.8 577.9 L1509.4 573.9 L1536.0 569.9 L1562.6 566.2 L1589.2 562.4 L1615.8 558.9 L1642.3 555.6 L1668.9 552.5 L1695.5 549.6 L1722.2 546.7 L1748.8 544.0 L1775.4 541.3 L1802.0 538.8 L1828.6 536.5 L1855.1 534.4 L1881.5 532.6 L1908.3 530.8 L1935.1 528.6 L1961.7 526.6 L2006.2 523.7 L2016.1 317.1 L2982.9 317.1 L2982.9 1682.9 L2417.0 1682.9 L2416.3 722.9 L2357.6 741.9 L2329.0 751.3 L2300.4 760.6 L2272.9 769.3 L2246.3 777.7 L2219.7 786.0 L2193.1 794.3 L2166.6 802.5 L2140.0 810.6 L2113.4 818.5 L2086.9 826.4 L2060.3 834.1 L2033.7 841.7 L2007.1 849.3 L1980.5 856.9 L1953.8 864.5 L1927.2 872.1 L1900.4 879.7 L1873.6 887.7 L1847.0 895.6 L1820.3 903.6 L1793.6 911.6 L1767.0 920.0 L1740.4 928.3 L1713.8 936.7 L1687.4 944.9 L1661.0 952.7 L1634.6 960.4 L1608.2 967.9 L1581.7 975.1 L1555.1 982.3 L1528.5 989.4 L1501.9 996.7 L1475.2 1004.0 L1448.5 1011.4 L1421.8 1018.9 L1395.2 1026.6 L1368.5 1034.3 L1342.0 1042.0 L1315.5 1049.5 L1288.9 1056.9 L1262.3 1064.2 L1235.7 1071.6 L1209.1 1078.9 L1182.5 1086.1 L1155.9 1093.4 L1129.3 1100.8 L1102.6 1108.2 L1076.1 1115.6 L1049.6 1122.8 L1021.4 1136.4 L1023.1 1160.1 L1023.1 1189.6 L993.3 1398.4 L895.1 1693.1 L-100.0 1693.1 Z" fill="rgb(244,244,244)"/>
<path d="M-100.0 209.7 L590.3 209.7 L590.3 602.1 L645.3 723.8 L645.3 761.8 L645.3 795.4 L710.7 788.4 L738.6 776.9 L765.1 766.5 L791.4 756.8 L817.8 747.6 L844.4 738.9 L871.0 730.3 L897.6 721.7 L924.4 712.9 L951.1 703.9 L977.8 694.7 L1004.4 685.6 L1031.0 676.7 L1057.4 668.1 L1083.9 659.9 L1110.2 652.5 L1136.7 646.0 L1163.3 639.9 L1189.9 633.9 L1216.6 628.0 L1243.2 622.2 L1269.8 616.8 L1296.4 611.6 L1323.1 606.6 L1349.8 601.9 L1376.5 597.2 L1403.2 592.7 L1429.8 588.4 L1456.5 584.2 L1483.2 580.1 L1509.8 576.1 L1536.3 572.2 L1563.0 568.5 L1589.6 564.8 L1616.1 561.3 L1642.7 558.1 L1669.2 555.0 L1695.8 552.1 L1722.4 549.3 L1749.1 546.5 L1775.7 543.9 L1802.3 541.4 L1828.8 539.1 L1855.3 537.1 L1881.7 535.3 L1908.5 533.6 L1935.3 531.3 L1961.9 529.4 L2008.8 526.3 L2018.2 319.4 L2980.6 319.4 L2980.6 1680.6 L2419.3 1680.6 L2419.5 718.5 L2356.7 738.9 L2328.0 748.3 L2299.4 757.5 L2272.0 766.3 L2245.4 774.7 L2218.8 783.0 L2192.2 791.3 L2165.7 799.5 L2139.1 807.6 L2112.6 815.6 L2086.0 823.4 L2059.5 831.1 L2032.9 838.8 L2006.3 846.4 L1979.6 854.0 L1953.0 861.6 L1926.4 869.2 L1899.6 876.8 L1872.8 884.8 L1846.1 892.8 L1819.4 900.8 L1792.8 908.8 L1766.1 917.2 L1739.5 925.6 L1713.0 934.0 L1686.6 942.2 L1660.3 950.1 L1633.9 957.8 L1607.5 965.3 L1581.0 972.5 L1554.5 979.7 L1527.9 987.0 L1501.2 994.3 L1474.6 1001.5 L1447.9 1009.0 L1421.2 1016.6 L1394.5 1024.3 L1367.9 1032.0 L1341.4 1039.7 L1314.8 1047.2 L1288.3 1054.7 L1261.7 1062.1 L1235.2 1069.4 L1208.6 1076.7 L1182.0 1084.1 L1155.4 1091.4 L1128.7 1098.8 L1102.1 1106.2 L1075.5 1113.6 L1049.1 1120.9 L1020.3 1135.5 L1022.2 1160.1 L1022.2 1189.6 L992.4 1398.2 L894.4 1692.2 L-100.0 1692.2 Z" fill="rgb(248,248,248)"/>
<path d="M-100.0 210.9 L589.1 210.9 L589.1 602.3 L644.1 724.1 L644.1 761.8 L644.1 796.7 L711.2 790.0 L739.3 778.5 L765.6 768.1 L792.0 758.3 L818.4 749.2 L844.9 740.4 L871.5 731.9 L898.1 723.3 L924.9 714.5 L951.6 705.4 L978.3 696.3 L1004.9 687.1 L1031.5 678.2 L1057.9 669.6 L1084.3 661.5 L1110.6 654.0 L1137.1 647.6 L1163.7 641.5 L1190.3 635.5 L1217.0 629.7 L1243.6 623.9 L1270.2 618.6 L1296.8 613.3 L1323.5 608.5 L1350.2 603.8 L1376.9 599.2 L1403.6 594.7 L1430.2 590.5 L1456.9 586.4 L1483.6 582.3 L1510.2 578.4 L1536.7 574.5 L1563.3 570.8 L1589.9 567.1 L1616.4 563.7 L1643.0 560.5 L1669.5 557.5 L1696.1 554.6 L1722.7 551.8 L1749.4 549.1 L1776.0 546.5 L1802.6 544.0 L1829.1 541.8 L1855.5 539.8 L1881.9 538.0 L1908.7 536.3 L1935.5 534.1 L1962.1 532.1 L2011.4 528.8 L2020.4 321.7 L2978.3 321.7 L2978.3 1678.3 L2421.5 1678.3 L2422.6 714.1 L2355.7 735.9 L2327.0 745.2 L2298.5 754.5 L2271.0 763.3 L2244.5 771.7 L2217.9 780.1 L2191.3 788.3 L2164.8 796.5 L2138.2 804.6 L2111.7 812.6 L2085.2 820.5 L2058.6 828.2 L2032.1 835.8 L2005.5 843.4 L1978.8 851.0 L1952.2 858.7 L1925.5 866.3 L1898.8 874.0 L1871.9 881.9 L1845.3 889.9 L1818.6 897.9 L1791.9 906.0 L1765.3 914.3 L1738.7 922.8 L1712.2 931.2 L1685.9 939.5 L1659.5 947.4 L1633.1 955.2 L1606.8 962.7 L1580.3 970.0 L1553.8 977.2 L1527.2 984.5 L1500.6 991.9 L1473.9 999.1 L1447.2 1006.6 L1420.5 1014.3 L1393.9 1022.0 L1367.3 1029.7 L1340.7 1037.4 L1314.2 1045.0 L1287.7 1052.5 L1261.2 1059.9 L1234.6 1067.3 L1208.0 1074.6 L1181.4 1082.0 L1154.8 1089.3 L1128.2 1096.7 L1101.6 1104.2 L1075.0 1111.6 L1048.6 1118.9 L1019.1 1134.6 L1021.3 1160.1 L1021.3 1189.5 L991.5 1398.0 L893.7 1691.3 L-100.0 1691.3 Z" fill="rgb(251,251,251)"/>
<path d="M-100.0 212.0 L588.0 212.0 L588.0 602.6 L643.0 724.3 L643.0 761.8 L643.0 798.1 L711.6 791.6 L739.9 780.0 L766.2 769.7 L792.6 759.9 L818.9 750.8 L845.4 742.0 L872.0 733.4 L898.7 724.8 L925.4 716.0 L952.2 707.0 L978.8 697.8 L1005.4 688.7 L1032.0 679.7 L1058.4 671.1 L1084.8 663.0 L1111.0 655.6 L1137.5 649.2 L1164.1 643.1 L1190.7 637.2 L1217.4 631.4 L1244.0 625.6 L1270.5 620.3 L1297.2 615.1 L1323.9 610.3 L1350.6 605.7 L1377.3 601.1 L1403.9 596.7 L1430.6 592.6 L1457.3 588.5 L1483.9 584.5 L1510.5 580.7 L1537.0 576.8 L1563.6 573.1 L1590.3 569.5 L1616.8 566.1 L1643.3 562.9 L1669.8 559.9 L1696.4 557.1 L1723.0 554.3 L1749.6 551.6 L1776.2 549.1 L1802.8 546.7 L1829.3 544.4 L1855.7 542.5 L1882.1 540.8 L1908.9 539.0 L1935.8 536.8 L1962.3 534.8 L2014.0 531.4 L2022.5 324.0 L2976.0 324.0 L2976.0 1676.0 L2423.8 1676.0 L2425.8 709.7 L2354.7 732.8 L2326.1 742.2 L2297.5 751.5 L2270.1 760.3 L2243.5 768.7 L2217.0 777.1 L2190.4 785.3 L2163.9 793.5 L2137.3 801.7 L2110.8 809.6 L2084.3 817.5 L2057.8 825.2 L2031.2 832.9 L2004.6 840.5 L1978.0 848.1 L1951.3 855.8 L1924.7 863.4 L1897.9 871.1 L1871.1 879.0 L1844.4 887.0 L1817.8 895.1 L1791.1 903.1 L1764.5 911.5 L1737.9 920.0 L1711.4 928.5 L1685.1 936.8 L1658.8 944.7 L1632.4 952.5 L1606.1 960.1 L1579.7 967.4 L1553.2 974.7 L1526.6 982.0 L1500.0 989.4 L1473.3 996.7 L1446.6 1004.2 L1419.9 1011.9 L1393.2 1019.7 L1366.6 1027.5 L1340.1 1035.2 L1313.6 1042.8 L1287.1 1050.3 L1260.6 1057.7 L1234.0 1065.1 L1207.4 1072.5 L1180.9 1079.9 L1154.3 1087.3 L1127.6 1094.7 L1101.0 1102.2 L1074.5 1109.7 L1048.1 1117.0 L1018.0 1133.7 L1020.4 1160.1 L1020.4 1189.4 L990.6 1397.8 L893.1 1690.4 L-100.0 1690.4 Z" fill="rgb(253,253,253)"/>
</g>
</g>
<rect x="0" y="200" width="2880" height="1500" fill="url(#shade)"/>
</g>
<g clip-path="url(#cpS)" fill="none">
<path d="M1640.0 998.4 C1666.7 991.1 1746.7 969.1 1800.0 954.5 C1853.3 939.9 1906.7 925.6 1960.0 911.0 C2013.3 896.4 2066.7 882.2 2120.0 867.0 C2173.3 851.8 2226.7 835.9 2280.0 819.7 C2333.3 803.5 2400.0 782.1 2440.0 770.0 C2480.0 757.9 2493.3 754.7 2520.0 747.0 C2546.7 739.3 2570.0 731.0 2600.0 724.0 C2630.0 717.0 2673.3 709.7 2700.0 705.0 C2726.7 700.3 2744.5 698.0 2760.0 696.0 C2775.5 694.0 2787.5 693.5 2793.0 693.0" stroke="url(#bleedg)" stroke-width="58" stroke-opacity="0.27"/>
<path d="M1640.0 998.4 C1666.7 991.1 1746.7 969.1 1800.0 954.5 C1853.3 939.9 1906.7 925.6 1960.0 911.0 C2013.3 896.4 2066.7 882.2 2120.0 867.0 C2173.3 851.8 2226.7 835.9 2280.0 819.7 C2333.3 803.5 2400.0 782.1 2440.0 770.0 C2480.0 757.9 2493.3 754.7 2520.0 747.0 C2546.7 739.3 2570.0 731.0 2600.0 724.0 C2630.0 717.0 2673.3 709.7 2700.0 705.0 C2726.7 700.3 2744.5 698.0 2760.0 696.0 C2775.5 694.0 2787.5 693.5 2793.0 693.0" stroke="url(#bleedg)" stroke-width="48" stroke-opacity="0.27"/>
<path d="M1640.0 998.4 C1666.7 991.1 1746.7 969.1 1800.0 954.5 C1853.3 939.9 1906.7 925.6 1960.0 911.0 C2013.3 896.4 2066.7 882.2 2120.0 867.0 C2173.3 851.8 2226.7 835.9 2280.0 819.7 C2333.3 803.5 2400.0 782.1 2440.0 770.0 C2480.0 757.9 2493.3 754.7 2520.0 747.0 C2546.7 739.3 2570.0 731.0 2600.0 724.0 C2630.0 717.0 2673.3 709.7 2700.0 705.0 C2726.7 700.3 2744.5 698.0 2760.0 696.0 C2775.5 694.0 2787.5 693.5 2793.0 693.0" stroke="url(#bleedg)" stroke-width="38" stroke-opacity="0.27"/>
<path d="M1640.0 998.4 C1666.7 991.1 1746.7 969.1 1800.0 954.5 C1853.3 939.9 1906.7 925.6 1960.0 911.0 C2013.3 896.4 2066.7 882.2 2120.0 867.0 C2173.3 851.8 2226.7 835.9 2280.0 819.7 C2333.3 803.5 2400.0 782.1 2440.0 770.0 C2480.0 757.9 2493.3 754.7 2520.0 747.0 C2546.7 739.3 2570.0 731.0 2600.0 724.0 C2630.0 717.0 2673.3 709.7 2700.0 705.0 C2726.7 700.3 2744.5 698.0 2760.0 696.0 C2775.5 694.0 2787.5 693.5 2793.0 693.0" stroke="url(#bleedg)" stroke-width="29" stroke-opacity="0.27"/>
<path d="M1640.0 998.4 C1666.7 991.1 1746.7 969.1 1800.0 954.5 C1853.3 939.9 1906.7 925.6 1960.0 911.0 C2013.3 896.4 2066.7 882.2 2120.0 867.0 C2173.3 851.8 2226.7 835.9 2280.0 819.7 C2333.3 803.5 2400.0 782.1 2440.0 770.0 C2480.0 757.9 2493.3 754.7 2520.0 747.0 C2546.7 739.3 2570.0 731.0 2600.0 724.0 C2630.0 717.0 2673.3 709.7 2700.0 705.0 C2726.7 700.3 2744.5 698.0 2760.0 696.0 C2775.5 694.0 2787.5 693.5 2793.0 693.0" stroke="url(#bleedg)" stroke-width="20" stroke-opacity="0.27"/>
<path d="M1640.0 998.4 C1666.7 991.1 1746.7 969.1 1800.0 954.5 C1853.3 939.9 1906.7 925.6 1960.0 911.0 C2013.3 896.4 2066.7 882.2 2120.0 867.0 C2173.3 851.8 2226.7 835.9 2280.0 819.7 C2333.3 803.5 2400.0 782.1 2440.0 770.0 C2480.0 757.9 2493.3 754.7 2520.0 747.0 C2546.7 739.3 2570.0 731.0 2600.0 724.0 C2630.0 717.0 2673.3 709.7 2700.0 705.0 C2726.7 700.3 2744.5 698.0 2760.0 696.0 C2775.5 694.0 2787.5 693.5 2793.0 693.0" stroke="url(#bleedg)" stroke-width="11" stroke-opacity="0.27"/>
<path d="M54.3 1089.0 C71.9 1078.5 122.4 1047.0 160.0 1025.7 C197.6 1004.5 233.3 984.9 280.0 961.5 C326.7 938.1 386.7 911.4 440.0 885.5 C493.3 859.6 573.3 819.4 600.0 806.2" stroke="#b43420" stroke-width="4.5"/>
</g>
</svg>
<svg xmlns="http://www.w3.org/2000/svg" width="2880" height="240" viewBox="0 0 2880 240" style="position:absolute;left:0;top:0">
<defs>
<radialGradient id="sph" cx="0.5" cy="0.22" r="0.85" fx="0.5" fy="0.15"><stop offset="0" stop-color="#8fe0ff"/><stop offset="0.25" stop-color="#36aaff"/><stop offset="0.6" stop-color="#1a86ff"/><stop offset="0.9" stop-color="#1b3cff"/><stop offset="1" stop-color="#3a2fe0"/></radialGradient>
<linearGradient id="lensv" x1="0" y1="0" x2="1" y2="0"><stop offset="0" stop-color="#bfe6fb"/><stop offset="0.45" stop-color="#57b0ea"/><stop offset="1" stop-color="#1f72c4"/></linearGradient>
<linearGradient id="bl1" x1="0" y1="0" x2="0" y2="1"><stop offset="0" stop-color="#8fd0f4"/><stop offset="0.5" stop-color="#3f9bdc"/><stop offset="1" stop-color="#2a7fc6"/></linearGradient>
<linearGradient id="bl2" x1="0" y1="0" x2="1" y2="1"><stop offset="0" stop-color="#3f97da"/><stop offset="1" stop-color="#4aa3e2"/></linearGradient>
<linearGradient id="dk" x1="0" y1="0" x2="0" y2="1"><stop offset="0" stop-color="#1c66a4"/><stop offset="1" stop-color="#063e70"/></linearGradient>
<linearGradient id="flame" x1="0" y1="0" x2="0" y2="1"><stop offset="0" stop-color="#7f8f80"/><stop offset="0.25" stop-color="#e04010"/><stop offset="0.5" stop-color="#ff9a20"/><stop offset="0.75" stop-color="#fff2d0"/><stop offset="1" stop-color="#ffffff"/></linearGradient>
<linearGradient id="strp" x1="0" y1="0" x2="1" y2="0"><stop offset="0" stop-color="#333"/><stop offset="0.5" stop-color="#bbb"/><stop offset="1" stop-color="#333"/></linearGradient>
<radialGradient id="sphw" cx="0.5" cy="0.45" r="0.55"><stop offset="0" stop-color="#fff" stop-opacity="0.55"/><stop offset="1" stop-color="#fff" stop-opacity="0"/></radialGradient>
<clipPath id="c25"><circle cx="1643" cy="189" r="19.5"/></clipPath>
<clipPath id="c26"><circle cx="1705" cy="189" r="19.5"/></clipPath>
</defs>
<ellipse cx="33.5" cy="73" rx="11" ry="26.5" fill="#fbfbfd" stroke="#777" stroke-width="1.8"/>
<path d="M33.5 52V70M26 62H41M28 56l11 11M39 56l-11 11" stroke="#f5a0a8" stroke-width="2" stroke-dasharray="2 2" fill="none"/>
<path d="M31 66v15l-3 -3l-2 2l6 13h11l2 -9v-9l-3 -1v-2l-3 -1v-2l-3 -1v-12z" fill="#fff" stroke="#222" stroke-width="1.8" stroke-linejoin="round"/>
<path d="M80 60l14 -5l4 3l13 4v22l-4 6l-27 -9z" fill="#e9e2a8" stroke="#8a8a80" stroke-width="2" stroke-linejoin="round"/>
<path d="M78 62l26 8l2 20l-24 -8z" fill="#f7f2a2" stroke="#8a8a80" stroke-width="2" stroke-linejoin="round"/>
<path d="M106 86l5 2" stroke="#777" stroke-width="3"/>
<path d="M146 55l6 -1l20 12v24l-26 -13z" fill="#6a6a6a" stroke="#555" stroke-width="1.5" stroke-linejoin="round"/>
<path d="M150 60l18 10v21l-18 -10z" fill="url(#flame)"/>
<path d="M146 78l26 13l2 3l-6 -1l-23 -12z" fill="#222"/>
<path d="M230 60.5H265" stroke="#8a8a8a" stroke-width="1.6"/>
<path d="M257 54V73" stroke="#222" stroke-width="1.8"/>
<path d="M265.5 56V73M231 73H266" stroke="#555" stroke-width="1.6" stroke-dasharray="2 2.5"/>
<rect x="230" y="77" width="37" height="13" fill="#f6d10a"/>
<rect x="230" y="90" width="38" height="3.5" fill="#a9a9a9"/>
<path d="M231 78H267" stroke="#111" stroke-width="2.4" stroke-dasharray="2.4 2.4"/>
<path d="M239 78v5M256 78v5" stroke="#111" stroke-width="2"/>
<path d="M238 84h3v5M253 84h4v4h-4z" stroke="#a07a10" stroke-width="1.6" fill="none"/>
<path d="M347 57L364 89" stroke="#111" stroke-width="2"/>
<circle cx="347" cy="57" r="4.5" fill="#1540e0"/><circle cx="355" cy="73" r="7" fill="#ff1a10" stroke="#111" stroke-width="1"/><circle cx="363" cy="89" r="4.5" fill="#10d040" stroke="#111" stroke-width="0.8"/>
<circle cx="516.0" cy="73.0" r="16.5" fill="url(#sph)"/>
<path d="M665 55h24l8 8v28h-32z" fill="#fff" stroke="#333" stroke-width="2"/>
<path d="M689 55v8h8z" fill="#7ec8f0" stroke="#333" stroke-width="1.2"/>
<path d="M668 61h10l8 6M668 80h10l8 -6M668 70h18M671 86h14" stroke="#666" stroke-width="1.4" stroke-dasharray="2 2" fill="none"/>
<path d="M837 53h8v12h10v18c0 5 -5 9 -14 9s-14 -4 -14 -9v-18h10z" fill="#fff" stroke="#15157a" stroke-width="2.2" stroke-linejoin="round"/>
<path d="M829 70h24M829 74h24M829 78h24M830 82h22M832 86h18M836 90h10" stroke="#15157a" stroke-width="2" stroke-dasharray="2 2"/>
<circle cx="39" cy="182.5" r="10" fill="none" stroke="#5c6f77" stroke-width="4.5"/>
<path d="M46 191L57 205" stroke="#5c6f77" stroke-width="7"/>
<rect x="81" y="167.5" width="24" height="18" fill="none" stroke="#5c6f77" stroke-width="2.2"/>
<circle cx="105.5" cy="187" r="9.5" fill="none" stroke="#5c6f77" stroke-width="4"/>
<path d="M112 195L123 209" stroke="#5c6f77" stroke-width="6.5"/>
<path d="M161 203c5 -6 7 -16 9 -24c4 -3 10 -5 16 -5c8 -1 14 1 17 5l-13 16l13 3l-29 14" fill="none" stroke="#777" stroke-width="2" stroke-linejoin="round"/>
<path d="M177 181l4 -6M183 182l5 -8M189 184l6 -8M195 186l6 -6" stroke="#333" stroke-width="2"/>
<path d="M226 186c6 -8 18 -6 40 2c4 6 2 12 -2 14" fill="none" stroke="#4a4a4a" stroke-width="3.5"/>
<path d="M242 168c-6 8 -2 30 12 44" fill="none" stroke="#4a4a4a" stroke-width="3.5"/>
<path d="M248 170l14 8l4 14l-2 20l-8 -4l2 -18l-6 -8z" fill="#3d8fe8"/>
<path d="M228 188l12 -2l14 16l-2 10l-10 -6l-12 -6z" fill="#3d8fe8"/>
<path d="M226 186l3 8" stroke="#123a9a" stroke-width="3"/>
<path d="M303 170l42 14l-4 22l-30 2z" fill="#fdf000"/>
<path d="M297 165l7 4l-2 5l-5 -3zM300 170l5 8" stroke="#666" stroke-width="2.5" fill="#888"/>
<circle cx="329.0" cy="194.0" r="12.5" fill="url(#sph)"/>
<path d="M374 188c10 -12 40 -12 54 -1c-12 12 -42 13 -54 1z" fill="url(#bl1)"/>
<ellipse cx="463" cy="189" rx="27" ry="11.5" fill="url(#bl2)"/>
<ellipse cx="463" cy="186" rx="22" ry="6" fill="#2f86cc" opacity="0.35"/>
<path d="M497 186c14 8 40 8 55 -3c-8 14 -42 16 -55 3z" fill="#3c96d8"/>
<path d="M562 199c12 -4 20 -12 25 -22c6 10 14 18 26 22z" fill="url(#dk)"/>
<path d="M575 191c8 -2 18 -2 26 0" stroke="#2d78b4" stroke-width="2" fill="none"/>
<path d="M624 199.5c12 -6 20 -14 25.5 -23c6 9 14 17 25 23z" fill="url(#dk)"/>
<path d="M685 180c10 -6 38 2 52 16c-14 6 -44 -2 -52 -16z" fill="url(#bl1)"/>
<path d="M746 197c8 -12 34 -22 54 -19c-6 12 -36 24 -54 19z" fill="url(#bl1)"/>
<path d="M808 203l44 -27c8 2 12 12 8 22c-10 6 -40 8 -52 5z" fill="url(#bl2)"/>
<path d="M808 203l44 -27" stroke="#1b5f9e" stroke-width="1.5"/>
<path d="M872 178c6 -6 22 -6 32 2c10 8 18 16 20 24c-10 4 -30 2 -40 -6c-8 -6 -14 -14 -12 -20z" fill="#3d97da"/>
<path d="M872 178c6 -6 22 -6 32 2" stroke="#2470b4" stroke-width="2" fill="none"/>
<path d="M958.0 162.0 C974.1 178.2 974.1 199.8 958.0 216.0 C941.9 199.8 941.9 178.2 958.0 162.0 Z" fill="url(#lensv)"/>
<path d="M1058.5 181a22 22 0 1 0 1.5 10" fill="none" stroke="#3a8fd2" stroke-width="4"/>
<path d="M1052 181l12 4l2 -10z" fill="#3a8fd2"/>
<path d="M1012 200c12 -5 20 -13 26 -24c6 11 14 19 25 24c-16 -3 -36 -3 -51 0z" fill="url(#dk)"/>
<path d="M1010 200h54l-4 -3h-46z" fill="#0d4c84"/>
<path d="M1126.0 187a27 8 0 0 1 -20 -6" fill="none" stroke="#ff1d1d" stroke-width="4.5"/>
<path d="M1099.0 162.0 C1114.8 178.2 1114.8 199.8 1099.0 216.0 C1083.2 199.8 1083.2 178.2 1099.0 162.0 Z" fill="url(#lensv)"/>
<path d="M1077.0 182a27 8.5 0 1 0 48 -2" fill="none" stroke="#ff1d1d" stroke-width="4.5"/>
<path d="M1111.0 176l10 4l-8 6z" fill="#ff1d1d"/>
<path d="M1188.0 187a27 8 0 0 1 -20 -6" fill="none" stroke="#ff1d1d" stroke-width="4.5"/>
<path d="M1161.0 162.0 C1176.8 178.2 1176.8 199.8 1161.0 216.0 C1145.2 199.8 1145.2 178.2 1161.0 162.0 Z" fill="url(#lensv)"/>
<path d="M1139.0 182a27 8.5 0 1 0 48 -2" fill="none" stroke="#ff1d1d" stroke-width="4.5"/>
<path d="M1173.0 176l10 4l-8 6z" fill="#ff1d1d"/>
<path d="M1140.0 216v-14h-6l11 -13l11 13h-6v14z" fill="#ffb01f" stroke="#7a5200" stroke-width="1.4" stroke-linejoin="round"/>
<circle cx="1238.5" cy="189" r="17.5" fill="none" stroke="#111" stroke-width="2.2"/>
<ellipse cx="1238.5" cy="180" rx="8.5" ry="4.5" fill="none" stroke="#111" stroke-width="2"/>
<path d="M1224.5 183a14 7 0 0 0 28 0" fill="none" stroke="#111" stroke-width="2"/>
<path d="M1221.5 190a17 9 0 0 0 34 0" fill="none" stroke="#111" stroke-width="2"/>
<circle cx="1300.5" cy="189" r="17.5" fill="none" stroke="#111" stroke-width="2.2"/>
<ellipse cx="1300.5" cy="180" rx="8.5" ry="4.5" fill="none" stroke="#ff2020" stroke-width="2"/>
<path d="M1286.5 183a14 7 0 0 0 28 0" fill="none" stroke="#ff2020" stroke-width="2"/>
<path d="M1283.5 190a17 9 0 0 0 34 0" fill="none" stroke="#ff2020" stroke-width="2"/>
<circle cx="1362" cy="189" r="17.5" fill="none" stroke="#111" stroke-width="2.6"/>
<path d="M1345 184l17 22l17 -22zM1348 198l14 -26l14 26zM1345 184l31 14M1379 184l-31 14M1352 176l20 0M1362 172v34M1350 180l24 20M1374 180l-24 20" fill="none" stroke="#111" stroke-width="1.8"/>
<circle cx="1441.0" cy="189.5" r="19.5" fill="url(#sph)"/>
<circle cx="1503.0" cy="189.5" r="19.5" fill="url(#sph)"/>
<circle cx="1563.0" cy="189.0" r="18.0" fill="url(#sph)"/>
<path d="M1556 205l20 -2l10 4l-6 -10l-14 2z" fill="#18b8e8"/>
<path d="M1553 199l26 -29l6 5l-25 29l-8 2z" fill="#eaf4ff" stroke="#111" stroke-width="2.2" stroke-linejoin="round"/>
<path d="M1557 198l22 -25" stroke="#4a8fe0" stroke-width="2.5"/>
<path d="M1552 206l2 -7l6 5z" fill="#f0c090" stroke="#111" stroke-width="1.2"/>
<path d="M1550 208l22 -1" stroke="#111" stroke-width="2.5"/>
<g clip-path="url(#c25)"><rect x="1620" y="165" width="46" height="48" fill="#e8e8e8"/>
<rect x="1620" y="168.0" width="46" height="4" fill="url(#strp)"/>
<rect x="1620" y="175.0" width="46" height="4" fill="url(#strp)"/>
<rect x="1620" y="182.0" width="46" height="4" fill="url(#strp)"/>
<rect x="1620" y="189.5" width="46" height="4" fill="url(#strp)"/>
<rect x="1620" y="197.0" width="46" height="4" fill="url(#strp)"/>
<rect x="1620" y="204.0" width="46" height="4" fill="url(#strp)"/>
<rect x="1620" y="210.0" width="46" height="4" fill="url(#strp)"/>
<circle cx="1643" cy="189" r="19.5" fill="none" stroke="#777" stroke-width="2" opacity="0.6"/></g>
<g clip-path="url(#c26)">
<rect x="1684" y="168.0" width="42" height="8.6" fill="#ff3a6a"/>
<rect x="1684" y="174.0" width="42" height="5.6" fill="#a060f0"/>
<rect x="1684" y="177.0" width="42" height="5.6" fill="#3a7aff"/>
<rect x="1684" y="180.5" width="42" height="4.6" fill="#20c0d0"/>
<rect x="1684" y="183.0" width="42" height="4.6" fill="#40e070"/>
<rect x="1684" y="185.5" width="42" height="8.6" fill="#d8f020"/>
<rect x="1684" y="192.5" width="42" height="4.1" fill="#40e070"/>
<rect x="1684" y="195.0" width="42" height="4.1" fill="#20c0d0"/>
<rect x="1684" y="197.5" width="42" height="5.1" fill="#3a7aff"/>
<rect x="1684" y="201.0" width="42" height="4.6" fill="#a060f0"/>
<rect x="1684" y="204.0" width="42" height="8.6" fill="#ff3a6a"/>
<ellipse cx="1705" cy="187" rx="9" ry="4" fill="#ffff60" opacity="0.8"/>
<circle cx="1705" cy="189" r="21" fill="none" stroke="#fff" stroke-width="5" opacity="0.35"/></g>
<path d="M1782.7 165V212" stroke="#222" stroke-width="1.8" stroke-dasharray="4 2.5"/>
<path d="M1775 172l-5 4l-4 5l3 6l4 4l3 5l-3 6l-5 4l-4 3" fill="none" stroke="#1f4df0" stroke-width="3.4" stroke-dasharray="3.4 2"/>
<path d="M1802 171c-12 6 -16 12 -10 20c6 8 4 14 -10 22" fill="none" stroke="#1f4df0" stroke-width="3.4"/>
<rect x="1844" y="172" width="14" height="14" fill="#ff2a12"/><rect x="1862" y="172" width="14" height="14" fill="#ffc72c"/><rect x="1844" y="190" width="14" height="14" fill="#a4cc3c"/><rect x="1862" y="190" width="14" height="14" fill="#6ed0d4"/>
<circle cx="32.0" cy="133.0" r="13.5" fill="url(#sph)"/>
</svg>
</body></html>
